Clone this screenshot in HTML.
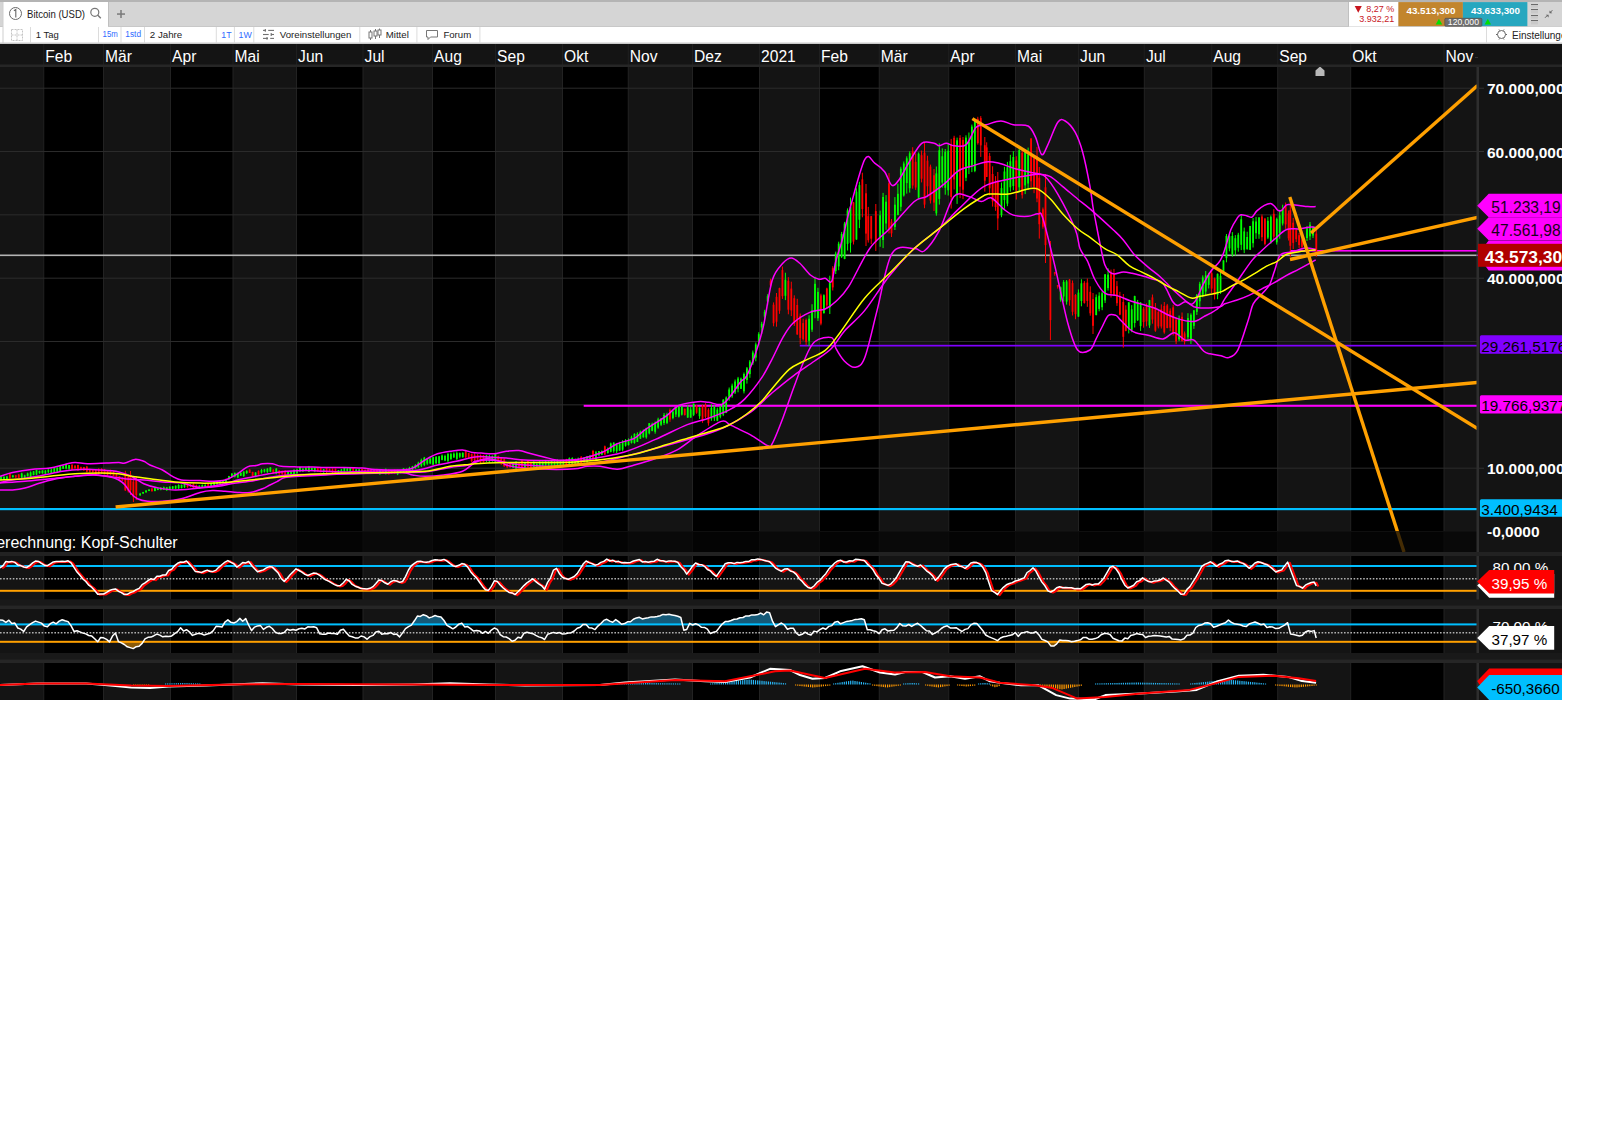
<!DOCTYPE html>
<html><head><meta charset="utf-8"><style>
html,body{margin:0;padding:0;background:#fff;width:1600px;height:1131px;overflow:hidden;position:relative;font-family:"Liberation Sans",sans-serif}
</style></head><body>
<svg width="1600" height="1131" viewBox="0 0 1600 1131" style="position:absolute;left:0;top:0"><rect x="0" y="0" width="1562" height="44" fill="#ffffff"/><rect x="0" y="0" width="1562" height="26" fill="#d5d5d5"/><rect x="0" y="0" width="1562" height="2" fill="#b4b4b4"/><rect x="3" y="2" width="105" height="25" fill="#ffffff"/><rect x="108" y="2" width="1" height="24" fill="#c0c0c0"/><rect x="0" y="26" width="1562" height="1" fill="#c8c8c8"/><rect x="3" y="2" width="105" height="25" fill="#ffffff"/><rect x="2.5" y="2" width="1" height="41" fill="#cfcfcf"/><circle cx="15.5" cy="13.5" r="6" fill="none" stroke="#6a6a6a" stroke-width="1"/><path d="M13.9 10.8 L15.8 9.6 L15.8 17.6" fill="none" stroke="#666" stroke-width="1.1"/><text x="27" y="17.6" fill="#1a1a1a" font-size="10.6" textLength="58" lengthAdjust="spacingAndGlyphs" font-family="Liberation Sans">Bitcoin (USD)</text><circle cx="94.8" cy="12.3" r="4" fill="none" stroke="#777" stroke-width="1.2"/><line x1="97.6" y1="15.1" x2="100.8" y2="18.3" stroke="#777" stroke-width="1.4"/><rect x="117" y="13.3" width="8" height="1.5" fill="#7a7a7a"/><rect x="120.25" y="10" width="1.5" height="8" fill="#7a7a7a"/><rect x="0" y="42.5" width="1562" height="1.5" fill="#c9c9c9"/><rect x="30.0" y="27" width="1" height="16" fill="#dcdcdc"/><rect x="98.0" y="27" width="1" height="16" fill="#dcdcdc"/><rect x="120.5" y="27" width="1" height="16" fill="#dcdcdc"/><rect x="144.0" y="27" width="1" height="16" fill="#dcdcdc"/><rect x="215.8" y="27" width="1" height="16" fill="#dcdcdc"/><rect x="233.9" y="27" width="1" height="16" fill="#dcdcdc"/><rect x="253.3" y="27" width="1" height="16" fill="#dcdcdc"/><rect x="359.3" y="27" width="1" height="16" fill="#dcdcdc"/><rect x="416.4" y="27" width="1" height="16" fill="#dcdcdc"/><rect x="479.4" y="27" width="1" height="16" fill="#dcdcdc"/><rect x="1486.0" y="27" width="1" height="16" fill="#dcdcdc"/><g fill="none" stroke="#c4c4c4" stroke-width="1" stroke-dasharray="2 1"><rect x="11.5" y="29.5" width="11" height="11"/><line x1="17" y1="29.5" x2="17" y2="40.5"/><line x1="11.5" y1="35" x2="22.5" y2="35"/></g><text x="35.8" y="37.9" fill="#222" font-size="9.4" textLength="23" lengthAdjust="spacingAndGlyphs" font-family="Liberation Sans">1 Tag</text><text x="102.6" y="37.3" fill="#2f6bff" font-size="8.5" textLength="15.2" lengthAdjust="spacingAndGlyphs" font-family="Liberation Sans">15m</text><text x="125.3" y="37.3" fill="#2f6bff" font-size="8.5" textLength="15.8" lengthAdjust="spacingAndGlyphs" font-family="Liberation Sans">1std</text><text x="149.8" y="37.9" fill="#222" font-size="9.4" textLength="32.5" lengthAdjust="spacingAndGlyphs" font-family="Liberation Sans">2 Jahre</text><text x="221.3" y="37.5" fill="#2f6bff" font-size="8.8" font-family="Liberation Sans">1T</text><text x="238.6" y="37.5" fill="#2f6bff" font-size="8.8" font-family="Liberation Sans">1W</text><g stroke="#707070" stroke-width="1.1"><line x1="263" y1="30.4" x2="265.8" y2="30.4"/><line x1="265.3" y1="29.1" x2="265.3" y2="31.8"/><line x1="268.2" y1="30.4" x2="274" y2="30.4"/><line x1="263" y1="34.5" x2="268.7" y2="34.5"/><line x1="271.2" y1="33" x2="271.2" y2="36"/><line x1="271" y1="34.5" x2="274" y2="34.5"/><line x1="263" y1="38.4" x2="268" y2="38.4"/><line x1="267" y1="37" x2="267" y2="39.7"/><line x1="270.2" y1="38.4" x2="274" y2="38.4"/></g><text x="279.8" y="37.9" fill="#222" font-size="9.4" textLength="71.5" lengthAdjust="spacingAndGlyphs" font-family="Liberation Sans">Voreinstellungen</text><g stroke="#777" stroke-width="1" fill="#fff"><line x1="370.5" y1="30" x2="370.5" y2="40"/><rect x="369" y="32" width="3" height="6"/><line x1="375.5" y1="29" x2="375.5" y2="39"/><rect x="374" y="31" width="3" height="5"/><line x1="379.5" y1="28.5" x2="379.5" y2="38"/><rect x="378" y="30" width="3" height="5"/></g><text x="385.8" y="37.9" fill="#222" font-size="9.4" textLength="23" lengthAdjust="spacingAndGlyphs" font-family="Liberation Sans">Mittel</text><path d="M426.5 30.5 h11 v6.5 h-7 l-2.5 2.5 v-2.5 h-1.5 z" fill="none" stroke="#777" stroke-width="1"/><text x="443.4" y="37.9" fill="#222" font-size="9.4" textLength="27.8" lengthAdjust="spacingAndGlyphs" font-family="Liberation Sans">Forum</text><rect x="1348.7" y="2" width="49.7" height="24.5" fill="#ffffff"/><rect x="1348" y="2" width="0.8" height="24.5" fill="#b8b8b8"/><path d="M1354.7 6.1 L1361.8 6.1 L1358.25 12.8 Z" fill="#c8161e"/><text x="1394.2" y="11.8" fill="#c8161e" font-size="9" text-anchor="end" font-family="Liberation Sans">8,27 %</text><text x="1394.2" y="21.6" fill="#c8161e" font-size="9" text-anchor="end" font-family="Liberation Sans">3.932,21</text><rect x="1398.4" y="2.1" width="64.5" height="24" fill="#c2852d"/><rect x="1462.9" y="2.1" width="64.7" height="24" fill="#27a7bf"/><rect x="1527.6" y="2" width="34.4" height="24.5" fill="#d5d5d5"/><text x="1431" y="14" fill="#fff" font-size="9.8" font-weight="bold" text-anchor="middle" font-family="Liberation Sans">43.513,300</text><text x="1495.5" y="14" fill="#fff" font-size="9.8" font-weight="bold" text-anchor="middle" font-family="Liberation Sans">43.633,300</text><path d="M1435.7 24.5 L1442.2 24.5 L1438.95 18.8 Z" fill="#00e000"/><path d="M1484.6 24.5 L1491 24.5 L1487.8 18.8 Z" fill="#00e000"/><rect x="1444.8" y="18.3" width="37.1" height="8" rx="1" fill="#6f6f6f" stroke="#4a4a4a" stroke-width="0.6"/><text x="1463.4" y="25.2" fill="#fff" font-size="8.6" text-anchor="middle" font-family="Liberation Sans">120,000</text><g fill="#6a6a6a"><rect x="1531" y="4" width="7" height="1.1"/><rect x="1531" y="9" width="7" height="1.1"/><rect x="1531" y="15" width="7" height="1.1"/><rect x="1531" y="20" width="7" height="1.1"/></g><g fill="#c9c9c9"><rect x="1531" y="6" width="7" height="1.6"/><rect x="1531" y="11" width="7" height="2.4"/><rect x="1531" y="17" width="7" height="1.6"/><rect x="1531" y="22" width="7" height="2.4"/></g><g stroke="#666" stroke-width="1"><line x1="1545" y1="17.8" x2="1547.2" y2="15.6"/><line x1="1550.3" y1="12.4" x2="1552.4" y2="10.2"/></g><path d="M1545.8 14.8 L1548.6 14.8 L1548.6 17.6 Z" fill="#666"/><path d="M1549.5 10.5 L1549.5 13.3 L1552.3 13.3 Z" fill="#666"/><circle cx="1501.5" cy="34.5" r="4" fill="none" stroke="#666" stroke-width="1"/><g stroke="#666" stroke-width="1"><line x1="1496" y1="34.5" x2="1497.5" y2="34.5"/><line x1="1505.5" y1="34.5" x2="1507" y2="34.5"/><line x1="1499" y1="29.5" x2="1499.5" y2="30.5"/><line x1="1504" y1="29.5" x2="1503.5" y2="30.5"/><line x1="1499" y1="39.5" x2="1499.5" y2="38.5"/><line x1="1504" y1="39.5" x2="1503.5" y2="38.5"/></g><text x="1512" y="38.5" fill="#222" font-size="10" font-family="Liberation Sans">Einstellungen</text><rect x="1562" y="0" width="38" height="44" fill="#fff"/><rect x="0" y="44" width="1562" height="656" fill="#141414"/><rect x="43.25" y="44" width="1" height="21" fill="#1f1f1f"/><rect x="103.0" y="44" width="1" height="21" fill="#1f1f1f"/><rect x="170.0" y="44" width="1" height="21" fill="#1f1f1f"/><rect x="232.5" y="44" width="1" height="21" fill="#1f1f1f"/><rect x="296.0" y="44" width="1" height="21" fill="#1f1f1f"/><rect x="362.5" y="44" width="1" height="21" fill="#1f1f1f"/><rect x="432.0" y="44" width="1" height="21" fill="#1f1f1f"/><rect x="495.0" y="44" width="1" height="21" fill="#1f1f1f"/><rect x="562.0" y="44" width="1" height="21" fill="#1f1f1f"/><rect x="627.75" y="44" width="1" height="21" fill="#1f1f1f"/><rect x="692.0" y="44" width="1" height="21" fill="#1f1f1f"/><rect x="759.0" y="44" width="1" height="21" fill="#1f1f1f"/><rect x="819.0" y="44" width="1" height="21" fill="#1f1f1f"/><rect x="878.75" y="44" width="1" height="21" fill="#1f1f1f"/><rect x="948.25" y="44" width="1" height="21" fill="#1f1f1f"/><rect x="1015.0" y="44" width="1" height="21" fill="#1f1f1f"/><rect x="1078.0" y="44" width="1" height="21" fill="#1f1f1f"/><rect x="1143.8" y="44" width="1" height="21" fill="#1f1f1f"/><rect x="1211.2" y="44" width="1" height="21" fill="#1f1f1f"/><rect x="1277.2" y="44" width="1" height="21" fill="#1f1f1f"/><rect x="1350.2" y="44" width="1" height="21" fill="#1f1f1f"/><rect x="1443.5" y="44" width="1" height="21" fill="#1f1f1f"/><rect x="0" y="64.5" width="1562" height="2.5" fill="#262626"/><rect x="1475" y="57" width="3" height="1" fill="#333"/><rect x="0" y="67" width="43.75" height="485" fill="#141414"/><rect x="43.75" y="67" width="59.75" height="485" fill="#000000"/><rect x="103.5" y="67" width="67.0" height="485" fill="#141414"/><rect x="170.5" y="67" width="62.5" height="485" fill="#000000"/><rect x="233" y="67" width="63.5" height="485" fill="#141414"/><rect x="296.5" y="67" width="66.5" height="485" fill="#000000"/><rect x="363" y="67" width="69.5" height="485" fill="#141414"/><rect x="432.5" y="67" width="63.0" height="485" fill="#000000"/><rect x="495.5" y="67" width="67.0" height="485" fill="#141414"/><rect x="562.5" y="67" width="65.75" height="485" fill="#000000"/><rect x="628.25" y="67" width="64.25" height="485" fill="#141414"/><rect x="692.5" y="67" width="67.0" height="485" fill="#000000"/><rect x="759.5" y="67" width="60.0" height="485" fill="#141414"/><rect x="819.5" y="67" width="59.75" height="485" fill="#000000"/><rect x="879.25" y="67" width="69.5" height="485" fill="#141414"/><rect x="948.75" y="67" width="66.75" height="485" fill="#000000"/><rect x="1015.5" y="67" width="63.0" height="485" fill="#141414"/><rect x="1078.5" y="67" width="65.79999999999995" height="485" fill="#000000"/><rect x="1144.3" y="67" width="67.40000000000009" height="485" fill="#141414"/><rect x="1211.7" y="67" width="66.0" height="485" fill="#000000"/><rect x="1277.7" y="67" width="73.0" height="485" fill="#141414"/><rect x="1350.7" y="67" width="93.29999999999995" height="485" fill="#000000"/><rect x="1444" y="67" width="34" height="485" fill="#141414"/><rect x="43.25" y="67" width="1" height="485" fill="#222"/><rect x="103.0" y="67" width="1" height="485" fill="#222"/><rect x="170.0" y="67" width="1" height="485" fill="#222"/><rect x="232.5" y="67" width="1" height="485" fill="#222"/><rect x="296.0" y="67" width="1" height="485" fill="#222"/><rect x="362.5" y="67" width="1" height="485" fill="#222"/><rect x="432.0" y="67" width="1" height="485" fill="#222"/><rect x="495.0" y="67" width="1" height="485" fill="#222"/><rect x="562.0" y="67" width="1" height="485" fill="#222"/><rect x="627.75" y="67" width="1" height="485" fill="#222"/><rect x="692.0" y="67" width="1" height="485" fill="#222"/><rect x="759.0" y="67" width="1" height="485" fill="#222"/><rect x="819.0" y="67" width="1" height="485" fill="#222"/><rect x="878.75" y="67" width="1" height="485" fill="#222"/><rect x="948.25" y="67" width="1" height="485" fill="#222"/><rect x="1015.0" y="67" width="1" height="485" fill="#222"/><rect x="1078.0" y="67" width="1" height="485" fill="#222"/><rect x="1143.8" y="67" width="1" height="485" fill="#222"/><rect x="1211.2" y="67" width="1" height="485" fill="#222"/><rect x="1277.2" y="67" width="1" height="485" fill="#222"/><rect x="1350.2" y="67" width="1" height="485" fill="#222"/><rect x="1443.5" y="67" width="1" height="485" fill="#222"/><rect x="0" y="531.00" width="1478" height="1" fill="#2c2c2c"/><rect x="0" y="467.67" width="1478" height="1" fill="#2c2c2c"/><rect x="0" y="404.34" width="1478" height="1" fill="#2c2c2c"/><rect x="0" y="341.01" width="1478" height="1" fill="#2c2c2c"/><rect x="0" y="277.68" width="1478" height="1" fill="#2c2c2c"/><rect x="0" y="214.35" width="1478" height="1" fill="#2c2c2c"/><rect x="0" y="151.02" width="1478" height="1" fill="#2c2c2c"/><rect x="0" y="87.69" width="1478" height="1" fill="#2c2c2c"/><defs><clipPath id="cm"><rect x="0" y="67" width="1477" height="485"/></clipPath><clipPath id="p2t"><rect x="0" y="609" width="1477" height="15.4"/></clipPath><clipPath id="p2b"><rect x="0" y="642" width="1477" height="11"/></clipPath><clipPath id="p3"><rect x="0" y="663" width="1477" height="37"/></clipPath></defs><g clip-path="url(#cm)"><rect x="0" y="254.5" width="1478" height="1.6" fill="#b4b4b4"/><rect x="0" y="508" width="1478" height="2.2" fill="#00bfff"/><rect x="583.7" y="404.8" width="895" height="2" fill="#ff00ff"/><rect x="799.8" y="344.8" width="679" height="1.7" fill="#8000ff"/><rect x="1290" y="250" width="188" height="1.6" fill="#ff00ff"/><rect x="0.50" y="476.0" width="1" height="4.2" fill="#00ff00"/><rect x="0.10" y="476.4" width="1.8" height="3.3" fill="#00ff00"/><rect x="3.46" y="476.2" width="1" height="3.7" fill="#00ff00"/><rect x="3.06" y="476.8" width="1.8" height="2.4" fill="#00ff00"/><rect x="6.42" y="475.7" width="1" height="4.1" fill="#00ff00"/><rect x="6.02" y="476.5" width="1.8" height="2.7" fill="#00ff00"/><rect x="9.38" y="473.1" width="1" height="5.7" fill="#ff0000"/><rect x="8.98" y="473.8" width="1.8" height="4.5" fill="#ff0000"/><rect x="12.34" y="475.2" width="1" height="2.2" fill="#00ff00"/><rect x="11.94" y="475.3" width="1.8" height="2.0" fill="#00ff00"/><rect x="15.30" y="474.9" width="1" height="3.3" fill="#ff0000"/><rect x="14.90" y="475.3" width="1.8" height="2.0" fill="#ff0000"/><rect x="18.26" y="474.0" width="1" height="4.0" fill="#ff0000"/><rect x="17.86" y="474.5" width="1.8" height="3.3" fill="#ff0000"/><rect x="21.22" y="472.7" width="1" height="5.5" fill="#00ff00"/><rect x="20.82" y="473.4" width="1.8" height="4.5" fill="#00ff00"/><rect x="24.18" y="474.7" width="1" height="3.8" fill="#00ff00"/><rect x="23.78" y="475.4" width="1.8" height="2.7" fill="#00ff00"/><rect x="27.14" y="472.6" width="1" height="3.8" fill="#00ff00"/><rect x="26.74" y="473.4" width="1.8" height="3.0" fill="#00ff00"/><rect x="30.10" y="471.4" width="1" height="5.8" fill="#00ff00"/><rect x="29.70" y="472.4" width="1.8" height="4.5" fill="#00ff00"/><rect x="33.06" y="471.1" width="1" height="4.1" fill="#00ff00"/><rect x="32.66" y="471.4" width="1.8" height="3.8" fill="#00ff00"/><rect x="36.02" y="469.8" width="1" height="5.1" fill="#00ff00"/><rect x="35.62" y="469.9" width="1.8" height="4.7" fill="#00ff00"/><rect x="38.98" y="470.7" width="1" height="3.0" fill="#00ff00"/><rect x="38.58" y="470.9" width="1.8" height="2.3" fill="#00ff00"/><rect x="41.94" y="470.3" width="1" height="3.5" fill="#00ff00"/><rect x="41.54" y="470.5" width="1.8" height="2.6" fill="#00ff00"/><rect x="44.90" y="470.2" width="1" height="4.6" fill="#00ff00"/><rect x="44.50" y="470.5" width="1.8" height="3.3" fill="#00ff00"/><rect x="47.86" y="469.3" width="1" height="3.6" fill="#00ff00"/><rect x="47.46" y="469.5" width="1.8" height="3.0" fill="#00ff00"/><rect x="50.82" y="468.5" width="1" height="5.3" fill="#00ff00"/><rect x="50.42" y="469.6" width="1.8" height="4.0" fill="#00ff00"/><rect x="53.78" y="467.9" width="1" height="4.8" fill="#00ff00"/><rect x="53.38" y="468.3" width="1.8" height="4.4" fill="#00ff00"/><rect x="56.74" y="467.2" width="1" height="5.0" fill="#00ff00"/><rect x="56.34" y="467.8" width="1.8" height="3.9" fill="#00ff00"/><rect x="59.70" y="465.4" width="1" height="6.7" fill="#00ff00"/><rect x="59.30" y="466.1" width="1.8" height="5.1" fill="#00ff00"/><rect x="62.66" y="465.1" width="1" height="3.9" fill="#00ff00"/><rect x="62.26" y="466.0" width="1.8" height="2.7" fill="#00ff00"/><rect x="65.62" y="463.7" width="1" height="5.8" fill="#00ff00"/><rect x="65.22" y="463.9" width="1.8" height="4.5" fill="#00ff00"/><rect x="68.58" y="465.1" width="1" height="4.8" fill="#00ff00"/><rect x="68.18" y="465.1" width="1.8" height="3.6" fill="#00ff00"/><rect x="71.54" y="464.0" width="1" height="6.1" fill="#ff0000"/><rect x="71.14" y="465.0" width="1.8" height="4.4" fill="#ff0000"/><rect x="74.50" y="465.5" width="1" height="3.1" fill="#ff0000"/><rect x="74.10" y="465.5" width="1.8" height="2.8" fill="#ff0000"/><rect x="77.46" y="464.7" width="1" height="6.2" fill="#ff0000"/><rect x="77.06" y="465.0" width="1.8" height="4.8" fill="#ff0000"/><rect x="80.42" y="466.6" width="1" height="2.9" fill="#ff0000"/><rect x="80.02" y="467.1" width="1.8" height="2.3" fill="#ff0000"/><rect x="83.38" y="466.9" width="1" height="3.9" fill="#ff0000"/><rect x="82.98" y="467.0" width="1.8" height="3.3" fill="#ff0000"/><rect x="86.34" y="465.9" width="1" height="6.5" fill="#ff0000"/><rect x="85.94" y="466.7" width="1.8" height="5.1" fill="#ff0000"/><rect x="89.30" y="468.6" width="1" height="4.0" fill="#ff0000"/><rect x="88.90" y="469.6" width="1.8" height="2.3" fill="#ff0000"/><rect x="92.26" y="469.3" width="1" height="3.5" fill="#ff0000"/><rect x="91.86" y="469.8" width="1.8" height="2.2" fill="#ff0000"/><rect x="95.22" y="469.2" width="1" height="6.3" fill="#ff0000"/><rect x="94.82" y="469.8" width="1.8" height="5.0" fill="#ff0000"/><rect x="98.18" y="468.3" width="1" height="6.0" fill="#ff0000"/><rect x="97.78" y="469.2" width="1.8" height="4.2" fill="#ff0000"/><rect x="101.14" y="468.2" width="1" height="5.4" fill="#ff0000"/><rect x="100.74" y="469.1" width="1.8" height="4.0" fill="#ff0000"/><rect x="104.10" y="468.9" width="1" height="5.6" fill="#ff0000"/><rect x="103.70" y="469.6" width="1.8" height="4.5" fill="#ff0000"/><rect x="107.06" y="470.2" width="1" height="5.5" fill="#ff0000"/><rect x="106.66" y="470.9" width="1.8" height="3.8" fill="#ff0000"/><rect x="110.02" y="469.7" width="1" height="5.5" fill="#ff0000"/><rect x="109.62" y="470.5" width="1.8" height="4.1" fill="#ff0000"/><rect x="112.98" y="471.0" width="1" height="5.2" fill="#ff0000"/><rect x="112.58" y="471.8" width="1.8" height="4.4" fill="#ff0000"/><rect x="115.94" y="473.7" width="1" height="4.4" fill="#ff0000"/><rect x="115.54" y="474.4" width="1.8" height="3.2" fill="#ff0000"/><rect x="118.90" y="476.0" width="1" height="4.5" fill="#ff0000"/><rect x="118.50" y="476.0" width="1.8" height="4.2" fill="#ff0000"/><rect x="121.86" y="477.2" width="1" height="3.8" fill="#ff0000"/><rect x="121.46" y="478.1" width="1.8" height="2.4" fill="#ff0000"/><rect x="124.82" y="470.8" width="1" height="20.2" fill="#ff0000"/><rect x="124.42" y="473.4" width="1.8" height="16.9" fill="#ff0000"/><rect x="127.78" y="474.2" width="1" height="18.4" fill="#ff0000"/><rect x="127.38" y="477.2" width="1.8" height="14.1" fill="#ff0000"/><rect x="139.62" y="492.9" width="1" height="2.8" fill="#00ff00"/><rect x="139.22" y="493.6" width="1.8" height="1.8" fill="#00ff00"/><rect x="142.58" y="491.9" width="1" height="2.0" fill="#00ff00"/><rect x="142.18" y="492.0" width="1.8" height="1.5" fill="#00ff00"/><rect x="145.54" y="490.4" width="1" height="2.1" fill="#00ff00"/><rect x="145.14" y="490.4" width="1.8" height="2.0" fill="#00ff00"/><rect x="148.50" y="489.3" width="1" height="1.8" fill="#00ff00"/><rect x="148.10" y="489.5" width="1.8" height="1.5" fill="#00ff00"/><rect x="151.46" y="488.1" width="1" height="3.6" fill="#ff0000"/><rect x="151.06" y="488.5" width="1.8" height="2.7" fill="#ff0000"/><rect x="154.42" y="487.4" width="1" height="3.9" fill="#00ff00"/><rect x="154.02" y="487.6" width="1.8" height="3.4" fill="#00ff00"/><rect x="157.38" y="488.0" width="1" height="2.2" fill="#00ff00"/><rect x="156.98" y="488.5" width="1.8" height="1.5" fill="#00ff00"/><rect x="160.34" y="487.3" width="1" height="3.0" fill="#00ff00"/><rect x="159.94" y="487.7" width="1.8" height="2.2" fill="#00ff00"/><rect x="163.30" y="486.6" width="1" height="3.1" fill="#00ff00"/><rect x="162.90" y="487.2" width="1.8" height="2.3" fill="#00ff00"/><rect x="166.26" y="487.0" width="1" height="3.8" fill="#00ff00"/><rect x="165.86" y="487.3" width="1.8" height="3.0" fill="#00ff00"/><rect x="169.22" y="486.2" width="1" height="3.6" fill="#00ff00"/><rect x="168.82" y="486.8" width="1.8" height="2.3" fill="#00ff00"/><rect x="172.18" y="486.2" width="1" height="3.2" fill="#00ff00"/><rect x="171.78" y="486.3" width="1.8" height="2.5" fill="#00ff00"/><rect x="175.14" y="485.5" width="1" height="3.8" fill="#00ff00"/><rect x="174.74" y="485.7" width="1.8" height="2.9" fill="#00ff00"/><rect x="178.10" y="484.3" width="1" height="4.5" fill="#00ff00"/><rect x="177.70" y="484.9" width="1.8" height="3.6" fill="#00ff00"/><rect x="181.06" y="484.6" width="1" height="3.8" fill="#00ff00"/><rect x="180.66" y="484.7" width="1.8" height="3.4" fill="#00ff00"/><rect x="184.02" y="483.9" width="1" height="4.0" fill="#00ff00"/><rect x="183.62" y="484.0" width="1.8" height="3.3" fill="#00ff00"/><rect x="186.98" y="483.5" width="1" height="4.3" fill="#ff0000"/><rect x="186.58" y="483.8" width="1.8" height="3.4" fill="#ff0000"/><rect x="189.94" y="483.9" width="1" height="3.2" fill="#ff0000"/><rect x="189.54" y="484.5" width="1.8" height="1.9" fill="#ff0000"/><rect x="192.90" y="483.3" width="1" height="4.5" fill="#ff0000"/><rect x="192.50" y="484.1" width="1.8" height="3.6" fill="#ff0000"/><rect x="195.86" y="484.6" width="1" height="3.8" fill="#ff0000"/><rect x="195.46" y="485.2" width="1.8" height="2.7" fill="#ff0000"/><rect x="198.82" y="485.3" width="1" height="3.7" fill="#00ff00"/><rect x="198.42" y="485.6" width="1.8" height="2.8" fill="#00ff00"/><rect x="201.78" y="484.4" width="1" height="3.2" fill="#00ff00"/><rect x="201.38" y="485.1" width="1.8" height="2.0" fill="#00ff00"/><rect x="204.74" y="484.4" width="1" height="2.9" fill="#00ff00"/><rect x="204.34" y="484.8" width="1.8" height="2.0" fill="#00ff00"/><rect x="207.70" y="483.0" width="1" height="4.7" fill="#ff0000"/><rect x="207.30" y="483.4" width="1.8" height="3.7" fill="#ff0000"/><rect x="210.66" y="483.0" width="1" height="3.2" fill="#00ff00"/><rect x="210.26" y="483.1" width="1.8" height="2.7" fill="#00ff00"/><rect x="213.62" y="481.2" width="1" height="4.4" fill="#00ff00"/><rect x="213.22" y="481.4" width="1.8" height="3.8" fill="#00ff00"/><rect x="216.58" y="480.8" width="1" height="3.9" fill="#00ff00"/><rect x="216.18" y="481.6" width="1.8" height="2.7" fill="#00ff00"/><rect x="219.54" y="480.5" width="1" height="3.1" fill="#00ff00"/><rect x="219.14" y="481.3" width="1.8" height="2.2" fill="#00ff00"/><rect x="222.50" y="480.9" width="1" height="2.6" fill="#00ff00"/><rect x="222.10" y="481.1" width="1.8" height="1.8" fill="#00ff00"/><rect x="225.46" y="478.8" width="1" height="3.4" fill="#00ff00"/><rect x="225.06" y="478.9" width="1.8" height="2.7" fill="#00ff00"/><rect x="228.42" y="475.9" width="1" height="3.9" fill="#00ff00"/><rect x="228.02" y="476.1" width="1.8" height="3.2" fill="#00ff00"/><rect x="231.38" y="473.1" width="1" height="3.7" fill="#00ff00"/><rect x="230.98" y="473.6" width="1.8" height="3.0" fill="#00ff00"/><rect x="234.34" y="472.4" width="1" height="5.1" fill="#00ff00"/><rect x="233.94" y="473.0" width="1.8" height="3.7" fill="#00ff00"/><rect x="237.30" y="472.5" width="1" height="5.8" fill="#00ff00"/><rect x="236.90" y="473.2" width="1.8" height="4.3" fill="#00ff00"/><rect x="240.26" y="471.9" width="1" height="4.1" fill="#00ff00"/><rect x="239.86" y="472.8" width="1.8" height="2.9" fill="#00ff00"/><rect x="243.22" y="471.3" width="1" height="5.5" fill="#00ff00"/><rect x="242.82" y="471.6" width="1.8" height="4.5" fill="#00ff00"/><rect x="246.18" y="470.3" width="1" height="3.6" fill="#00ff00"/><rect x="245.78" y="470.8" width="1.8" height="2.4" fill="#00ff00"/><rect x="249.14" y="469.5" width="1" height="3.5" fill="#ff0000"/><rect x="248.74" y="469.5" width="1.8" height="3.3" fill="#ff0000"/><rect x="252.10" y="471.8" width="1" height="5.1" fill="#ff0000"/><rect x="251.70" y="471.9" width="1.8" height="4.4" fill="#ff0000"/><rect x="255.06" y="472.3" width="1" height="4.1" fill="#00ff00"/><rect x="254.66" y="472.4" width="1.8" height="3.9" fill="#00ff00"/><rect x="258.02" y="470.4" width="1" height="4.4" fill="#ff0000"/><rect x="257.62" y="470.9" width="1.8" height="3.6" fill="#ff0000"/><rect x="260.98" y="468.9" width="1" height="4.7" fill="#00ff00"/><rect x="260.58" y="470.0" width="1.8" height="2.7" fill="#00ff00"/><rect x="263.94" y="468.9" width="1" height="3.6" fill="#00ff00"/><rect x="263.54" y="469.4" width="1.8" height="2.3" fill="#00ff00"/><rect x="266.90" y="468.2" width="1" height="4.6" fill="#00ff00"/><rect x="266.50" y="468.7" width="1.8" height="3.5" fill="#00ff00"/><rect x="269.86" y="467.2" width="1" height="4.9" fill="#00ff00"/><rect x="269.46" y="467.4" width="1.8" height="4.2" fill="#00ff00"/><rect x="272.82" y="469.4" width="1" height="4.0" fill="#ff0000"/><rect x="272.42" y="469.6" width="1.8" height="3.3" fill="#ff0000"/><rect x="275.78" y="468.0" width="1" height="6.3" fill="#00ff00"/><rect x="275.38" y="468.7" width="1.8" height="4.6" fill="#00ff00"/><rect x="278.74" y="470.1" width="1" height="4.8" fill="#ff0000"/><rect x="278.34" y="470.6" width="1.8" height="3.2" fill="#ff0000"/><rect x="281.70" y="470.5" width="1" height="4.4" fill="#ff0000"/><rect x="281.30" y="471.2" width="1.8" height="2.8" fill="#ff0000"/><rect x="284.66" y="470.1" width="1" height="6.0" fill="#ff0000"/><rect x="284.26" y="470.9" width="1.8" height="4.5" fill="#ff0000"/><rect x="287.62" y="471.4" width="1" height="3.6" fill="#00ff00"/><rect x="287.22" y="471.5" width="1.8" height="3.2" fill="#00ff00"/><rect x="290.58" y="471.3" width="1" height="3.4" fill="#00ff00"/><rect x="290.18" y="472.0" width="1.8" height="2.1" fill="#00ff00"/><rect x="293.54" y="469.4" width="1" height="5.8" fill="#00ff00"/><rect x="293.14" y="469.7" width="1.8" height="4.7" fill="#00ff00"/><rect x="296.50" y="468.5" width="1" height="5.4" fill="#00ff00"/><rect x="296.10" y="469.5" width="1.8" height="3.7" fill="#00ff00"/><rect x="299.46" y="467.0" width="1" height="5.1" fill="#00ff00"/><rect x="299.06" y="467.0" width="1.8" height="4.4" fill="#00ff00"/><rect x="302.42" y="468.5" width="1" height="3.2" fill="#00ff00"/><rect x="302.02" y="468.5" width="1.8" height="2.9" fill="#00ff00"/><rect x="305.38" y="467.2" width="1" height="4.1" fill="#00ff00"/><rect x="304.98" y="467.8" width="1.8" height="2.9" fill="#00ff00"/><rect x="308.34" y="465.9" width="1" height="6.1" fill="#00ff00"/><rect x="307.94" y="466.7" width="1.8" height="5.1" fill="#00ff00"/><rect x="311.30" y="467.7" width="1" height="3.0" fill="#00ff00"/><rect x="310.90" y="467.9" width="1.8" height="2.3" fill="#00ff00"/><rect x="314.26" y="467.5" width="1" height="4.7" fill="#00ff00"/><rect x="313.86" y="467.6" width="1.8" height="3.6" fill="#00ff00"/><rect x="317.22" y="467.3" width="1" height="4.4" fill="#ff0000"/><rect x="316.82" y="467.7" width="1.8" height="3.7" fill="#ff0000"/><rect x="320.18" y="467.5" width="1" height="4.9" fill="#ff0000"/><rect x="319.78" y="468.3" width="1.8" height="3.8" fill="#ff0000"/><rect x="323.14" y="469.0" width="1" height="3.9" fill="#00ff00"/><rect x="322.74" y="469.2" width="1.8" height="2.9" fill="#00ff00"/><rect x="326.10" y="467.5" width="1" height="5.9" fill="#ff0000"/><rect x="325.70" y="467.5" width="1.8" height="4.8" fill="#ff0000"/><rect x="329.06" y="468.6" width="1" height="3.3" fill="#ff0000"/><rect x="328.66" y="469.0" width="1.8" height="2.4" fill="#ff0000"/><rect x="332.02" y="468.4" width="1" height="4.6" fill="#ff0000"/><rect x="331.62" y="469.4" width="1.8" height="2.8" fill="#ff0000"/><rect x="334.98" y="468.6" width="1" height="5.3" fill="#ff0000"/><rect x="334.58" y="468.7" width="1.8" height="4.5" fill="#ff0000"/><rect x="337.94" y="469.9" width="1" height="2.9" fill="#00ff00"/><rect x="337.54" y="470.0" width="1.8" height="2.3" fill="#00ff00"/><rect x="340.90" y="468.9" width="1" height="4.5" fill="#00ff00"/><rect x="340.50" y="469.5" width="1.8" height="3.4" fill="#00ff00"/><rect x="343.86" y="467.0" width="1" height="5.5" fill="#00ff00"/><rect x="343.46" y="468.0" width="1.8" height="3.7" fill="#00ff00"/><rect x="346.82" y="467.8" width="1" height="4.0" fill="#00ff00"/><rect x="346.42" y="468.6" width="1.8" height="2.5" fill="#00ff00"/><rect x="349.78" y="467.2" width="1" height="5.5" fill="#00ff00"/><rect x="349.38" y="467.8" width="1.8" height="4.2" fill="#00ff00"/><rect x="352.74" y="467.2" width="1" height="4.8" fill="#ff0000"/><rect x="352.34" y="468.2" width="1.8" height="2.9" fill="#ff0000"/><rect x="355.70" y="468.9" width="1" height="3.5" fill="#00ff00"/><rect x="355.30" y="469.4" width="1.8" height="2.3" fill="#00ff00"/><rect x="358.66" y="469.2" width="1" height="4.5" fill="#00ff00"/><rect x="358.26" y="469.3" width="1.8" height="3.7" fill="#00ff00"/><rect x="361.62" y="468.8" width="1" height="3.8" fill="#ff0000"/><rect x="361.22" y="469.0" width="1.8" height="3.2" fill="#ff0000"/><rect x="364.58" y="469.1" width="1" height="3.9" fill="#ff0000"/><rect x="364.18" y="470.0" width="1.8" height="2.4" fill="#ff0000"/><rect x="367.54" y="468.7" width="1" height="4.6" fill="#ff0000"/><rect x="367.14" y="469.6" width="1.8" height="3.4" fill="#ff0000"/><rect x="370.50" y="468.7" width="1" height="4.8" fill="#ff0000"/><rect x="370.10" y="469.5" width="1.8" height="3.1" fill="#ff0000"/><rect x="373.46" y="469.6" width="1" height="2.6" fill="#ff0000"/><rect x="373.06" y="469.7" width="1.8" height="2.4" fill="#ff0000"/><rect x="376.42" y="468.8" width="1" height="5.0" fill="#ff0000"/><rect x="376.02" y="469.6" width="1.8" height="4.1" fill="#ff0000"/><rect x="379.38" y="469.8" width="1" height="5.1" fill="#00ff00"/><rect x="378.98" y="470.1" width="1.8" height="4.0" fill="#00ff00"/><rect x="382.34" y="469.6" width="1" height="3.7" fill="#ff0000"/><rect x="381.94" y="470.4" width="1.8" height="2.5" fill="#ff0000"/><rect x="385.30" y="468.4" width="1" height="6.1" fill="#00ff00"/><rect x="384.90" y="469.4" width="1.8" height="4.1" fill="#00ff00"/><rect x="388.26" y="469.4" width="1" height="5.1" fill="#ff0000"/><rect x="387.86" y="469.8" width="1.8" height="4.4" fill="#ff0000"/><rect x="391.22" y="470.1" width="1" height="3.6" fill="#ff0000"/><rect x="390.82" y="470.4" width="1.8" height="2.8" fill="#ff0000"/><rect x="394.18" y="469.5" width="1" height="4.1" fill="#ff0000"/><rect x="393.78" y="470.4" width="1.8" height="2.7" fill="#ff0000"/><rect x="397.14" y="469.7" width="1" height="5.4" fill="#00ff00"/><rect x="396.74" y="470.5" width="1.8" height="3.7" fill="#00ff00"/><rect x="400.10" y="470.0" width="1" height="3.4" fill="#00ff00"/><rect x="399.70" y="470.6" width="1.8" height="2.2" fill="#00ff00"/><rect x="403.06" y="468.3" width="1" height="4.7" fill="#00ff00"/><rect x="402.66" y="468.4" width="1.8" height="4.0" fill="#00ff00"/><rect x="406.02" y="468.4" width="1" height="4.2" fill="#00ff00"/><rect x="405.62" y="469.2" width="1.8" height="2.4" fill="#00ff00"/><rect x="408.98" y="466.8" width="1" height="5.6" fill="#00ff00"/><rect x="408.58" y="467.7" width="1.8" height="4.1" fill="#00ff00"/><rect x="411.94" y="465.9" width="1" height="4.3" fill="#00ff00"/><rect x="411.54" y="466.5" width="1.8" height="2.9" fill="#00ff00"/><rect x="414.90" y="464.2" width="1" height="4.6" fill="#00ff00"/><rect x="414.50" y="465.0" width="1.8" height="3.3" fill="#00ff00"/><rect x="417.86" y="461.7" width="1" height="6.1" fill="#00ff00"/><rect x="417.46" y="462.7" width="1.8" height="4.6" fill="#00ff00"/><rect x="420.82" y="458.6" width="1" height="8.4" fill="#00ff00"/><rect x="420.42" y="459.8" width="1.8" height="5.8" fill="#00ff00"/><rect x="423.78" y="456.9" width="1" height="9.2" fill="#00ff00"/><rect x="423.38" y="457.7" width="1.8" height="7.2" fill="#00ff00"/><rect x="426.74" y="458.3" width="1" height="6.5" fill="#00ff00"/><rect x="426.34" y="458.5" width="1.8" height="5.0" fill="#00ff00"/><rect x="429.70" y="458.1" width="1" height="5.9" fill="#00ff00"/><rect x="429.30" y="458.5" width="1.8" height="4.9" fill="#00ff00"/><rect x="432.66" y="456.7" width="1" height="8.2" fill="#00ff00"/><rect x="432.26" y="457.2" width="1.8" height="7.5" fill="#00ff00"/><rect x="435.62" y="456.5" width="1" height="7.6" fill="#00ff00"/><rect x="435.22" y="456.6" width="1.8" height="6.7" fill="#00ff00"/><rect x="438.58" y="456.1" width="1" height="7.8" fill="#00ff00"/><rect x="438.18" y="456.2" width="1.8" height="7.4" fill="#00ff00"/><rect x="441.54" y="454.5" width="1" height="5.8" fill="#00ff00"/><rect x="441.14" y="455.5" width="1.8" height="4.4" fill="#00ff00"/><rect x="444.50" y="454.7" width="1" height="6.4" fill="#00ff00"/><rect x="444.10" y="456.0" width="1.8" height="4.6" fill="#00ff00"/><rect x="447.46" y="453.3" width="1" height="9.0" fill="#00ff00"/><rect x="447.06" y="453.7" width="1.8" height="7.1" fill="#00ff00"/><rect x="450.42" y="452.5" width="1" height="7.4" fill="#00ff00"/><rect x="450.02" y="454.1" width="1.8" height="5.0" fill="#00ff00"/><rect x="453.38" y="452.3" width="1" height="5.7" fill="#00ff00"/><rect x="452.98" y="453.6" width="1.8" height="3.7" fill="#00ff00"/><rect x="456.34" y="451.4" width="1" height="8.7" fill="#00ff00"/><rect x="455.94" y="453.1" width="1.8" height="5.8" fill="#00ff00"/><rect x="459.30" y="452.6" width="1" height="5.6" fill="#00ff00"/><rect x="458.90" y="453.2" width="1.8" height="3.5" fill="#00ff00"/><rect x="462.26" y="452.3" width="1" height="5.3" fill="#00ff00"/><rect x="461.86" y="452.9" width="1.8" height="4.3" fill="#00ff00"/><rect x="465.22" y="449.8" width="1" height="8.1" fill="#ff0000"/><rect x="464.82" y="451.5" width="1.8" height="5.9" fill="#ff0000"/><rect x="468.18" y="452.9" width="1" height="5.6" fill="#ff0000"/><rect x="467.78" y="452.9" width="1.8" height="4.2" fill="#ff0000"/><rect x="471.14" y="453.5" width="1" height="8.9" fill="#ff0000"/><rect x="470.74" y="454.0" width="1.8" height="7.2" fill="#ff0000"/><rect x="474.10" y="453.0" width="1" height="8.1" fill="#ff0000"/><rect x="473.70" y="454.7" width="1.8" height="5.5" fill="#ff0000"/><rect x="477.06" y="454.2" width="1" height="7.0" fill="#ff0000"/><rect x="476.66" y="454.9" width="1.8" height="4.7" fill="#ff0000"/><rect x="480.02" y="454.5" width="1" height="8.8" fill="#ff0000"/><rect x="479.62" y="455.4" width="1.8" height="7.0" fill="#ff0000"/><rect x="482.98" y="454.9" width="1" height="7.7" fill="#ff0000"/><rect x="482.58" y="455.4" width="1.8" height="7.0" fill="#ff0000"/><rect x="485.94" y="454.9" width="1" height="7.1" fill="#00ff00"/><rect x="485.54" y="455.5" width="1.8" height="5.4" fill="#00ff00"/><rect x="488.90" y="454.7" width="1" height="8.0" fill="#00ff00"/><rect x="488.50" y="456.3" width="1.8" height="5.1" fill="#00ff00"/><rect x="491.86" y="455.5" width="1" height="6.3" fill="#00ff00"/><rect x="491.46" y="455.9" width="1.8" height="5.0" fill="#00ff00"/><rect x="494.82" y="453.7" width="1" height="9.1" fill="#00ff00"/><rect x="494.42" y="454.0" width="1.8" height="7.7" fill="#00ff00"/><rect x="497.78" y="455.7" width="1" height="6.0" fill="#ff0000"/><rect x="497.38" y="456.2" width="1.8" height="5.0" fill="#ff0000"/><rect x="500.74" y="457.2" width="1" height="7.7" fill="#ff0000"/><rect x="500.34" y="457.5" width="1.8" height="6.2" fill="#ff0000"/><rect x="503.70" y="458.1" width="1" height="8.7" fill="#ff0000"/><rect x="503.30" y="459.2" width="1.8" height="7.1" fill="#ff0000"/><rect x="506.66" y="463.6" width="1" height="4.6" fill="#ff0000"/><rect x="506.26" y="463.8" width="1.8" height="3.4" fill="#ff0000"/><rect x="509.62" y="462.0" width="1" height="5.9" fill="#ff0000"/><rect x="509.22" y="463.3" width="1.8" height="3.8" fill="#ff0000"/><rect x="512.58" y="463.4" width="1" height="4.7" fill="#00ff00"/><rect x="512.18" y="463.6" width="1.8" height="3.9" fill="#00ff00"/><rect x="515.54" y="461.0" width="1" height="8.5" fill="#00ff00"/><rect x="515.14" y="461.8" width="1.8" height="6.7" fill="#00ff00"/><rect x="518.50" y="462.4" width="1" height="5.2" fill="#ff0000"/><rect x="518.10" y="463.0" width="1.8" height="4.6" fill="#ff0000"/><rect x="521.46" y="459.7" width="1" height="8.9" fill="#ff0000"/><rect x="521.06" y="460.7" width="1.8" height="7.0" fill="#ff0000"/><rect x="524.42" y="462.1" width="1" height="5.5" fill="#00ff00"/><rect x="524.02" y="463.1" width="1.8" height="4.4" fill="#00ff00"/><rect x="527.38" y="460.2" width="1" height="7.4" fill="#ff0000"/><rect x="526.98" y="461.1" width="1.8" height="6.2" fill="#ff0000"/><rect x="530.34" y="461.9" width="1" height="6.2" fill="#ff0000"/><rect x="529.94" y="462.7" width="1.8" height="5.2" fill="#ff0000"/><rect x="533.30" y="460.7" width="1" height="6.7" fill="#00ff00"/><rect x="532.90" y="462.0" width="1.8" height="5.1" fill="#00ff00"/><rect x="536.26" y="463.4" width="1" height="5.1" fill="#00ff00"/><rect x="535.86" y="463.7" width="1.8" height="3.8" fill="#00ff00"/><rect x="539.22" y="461.1" width="1" height="7.7" fill="#00ff00"/><rect x="538.82" y="461.8" width="1.8" height="6.8" fill="#00ff00"/><rect x="542.18" y="461.3" width="1" height="5.3" fill="#00ff00"/><rect x="541.78" y="462.1" width="1.8" height="3.6" fill="#00ff00"/><rect x="545.14" y="459.9" width="1" height="6.9" fill="#00ff00"/><rect x="544.74" y="461.5" width="1.8" height="4.1" fill="#00ff00"/><rect x="548.10" y="461.2" width="1" height="5.4" fill="#00ff00"/><rect x="547.70" y="461.7" width="1.8" height="3.6" fill="#00ff00"/><rect x="551.06" y="459.9" width="1" height="6.6" fill="#00ff00"/><rect x="550.66" y="460.2" width="1.8" height="5.5" fill="#00ff00"/><rect x="554.02" y="460.6" width="1" height="6.2" fill="#00ff00"/><rect x="553.62" y="462.1" width="1.8" height="3.2" fill="#00ff00"/><rect x="556.98" y="459.4" width="1" height="6.1" fill="#00ff00"/><rect x="556.58" y="460.5" width="1.8" height="4.4" fill="#00ff00"/><rect x="559.94" y="460.4" width="1" height="7.5" fill="#00ff00"/><rect x="559.54" y="460.7" width="1.8" height="6.5" fill="#00ff00"/><rect x="562.90" y="459.7" width="1" height="5.9" fill="#00ff00"/><rect x="562.50" y="459.9" width="1.8" height="4.8" fill="#00ff00"/><rect x="565.86" y="458.8" width="1" height="6.6" fill="#ff0000"/><rect x="565.46" y="459.9" width="1.8" height="5.5" fill="#ff0000"/><rect x="568.82" y="457.4" width="1" height="8.6" fill="#00ff00"/><rect x="568.42" y="458.2" width="1.8" height="7.2" fill="#00ff00"/><rect x="571.78" y="457.3" width="1" height="8.7" fill="#00ff00"/><rect x="571.38" y="458.0" width="1.8" height="6.4" fill="#00ff00"/><rect x="574.74" y="458.5" width="1" height="7.3" fill="#00ff00"/><rect x="574.34" y="459.4" width="1.8" height="4.9" fill="#00ff00"/><rect x="577.70" y="457.5" width="1" height="7.4" fill="#00ff00"/><rect x="577.30" y="458.9" width="1.8" height="5.4" fill="#00ff00"/><rect x="580.66" y="456.0" width="1" height="8.4" fill="#ff0000"/><rect x="580.26" y="457.2" width="1.8" height="6.3" fill="#ff0000"/><rect x="583.62" y="457.5" width="1" height="4.9" fill="#00ff00"/><rect x="583.22" y="457.6" width="1.8" height="4.6" fill="#00ff00"/><rect x="586.58" y="456.2" width="1" height="6.8" fill="#00ff00"/><rect x="586.18" y="456.3" width="1.8" height="5.5" fill="#00ff00"/><rect x="589.54" y="455.0" width="1" height="5.5" fill="#00ff00"/><rect x="589.14" y="455.7" width="1.8" height="4.4" fill="#00ff00"/><rect x="592.50" y="449.9" width="1" height="10.2" fill="#ff0000"/><rect x="592.10" y="451.0" width="1.8" height="7.6" fill="#ff0000"/><rect x="595.46" y="450.9" width="1" height="9.5" fill="#00ff00"/><rect x="595.06" y="452.2" width="1.8" height="7.2" fill="#00ff00"/><rect x="598.42" y="451.0" width="1" height="5.2" fill="#00ff00"/><rect x="598.02" y="451.2" width="1.8" height="4.0" fill="#00ff00"/><rect x="601.38" y="450.4" width="1" height="4.7" fill="#00ff00"/><rect x="600.98" y="451.0" width="1.8" height="3.6" fill="#00ff00"/><rect x="604.34" y="445.6" width="1" height="9.4" fill="#ff0000"/><rect x="603.94" y="446.3" width="1.8" height="8.0" fill="#ff0000"/><rect x="607.30" y="447.4" width="1" height="6.2" fill="#00ff00"/><rect x="606.90" y="449.1" width="1.8" height="3.9" fill="#00ff00"/><rect x="610.26" y="442.6" width="1" height="9.7" fill="#00ff00"/><rect x="609.86" y="443.5" width="1.8" height="8.4" fill="#00ff00"/><rect x="613.22" y="442.3" width="1" height="10.4" fill="#00ff00"/><rect x="612.82" y="442.7" width="1.8" height="8.5" fill="#00ff00"/><rect x="616.18" y="443.2" width="1" height="9.9" fill="#00ff00"/><rect x="615.78" y="444.9" width="1.8" height="6.3" fill="#00ff00"/><rect x="619.14" y="441.8" width="1" height="9.0" fill="#00ff00"/><rect x="618.74" y="443.5" width="1.8" height="7.2" fill="#00ff00"/><rect x="622.10" y="440.1" width="1" height="11.2" fill="#00ff00"/><rect x="621.70" y="441.9" width="1.8" height="7.8" fill="#00ff00"/><rect x="625.06" y="439.1" width="1" height="7.5" fill="#00ff00"/><rect x="624.66" y="441.0" width="1.8" height="4.7" fill="#00ff00"/><rect x="628.02" y="438.4" width="1" height="7.1" fill="#00ff00"/><rect x="627.62" y="439.8" width="1.8" height="5.3" fill="#00ff00"/><rect x="630.98" y="435.6" width="1" height="7.9" fill="#00ff00"/><rect x="630.58" y="437.3" width="1.8" height="5.5" fill="#00ff00"/><rect x="633.94" y="433.3" width="1" height="10.4" fill="#00ff00"/><rect x="633.54" y="433.8" width="1.8" height="9.2" fill="#00ff00"/><rect x="636.90" y="432.3" width="1" height="9.7" fill="#00ff00"/><rect x="636.50" y="433.7" width="1.8" height="8.2" fill="#00ff00"/><rect x="639.86" y="430.6" width="1" height="8.2" fill="#00ff00"/><rect x="639.46" y="431.8" width="1.8" height="7.0" fill="#00ff00"/><rect x="642.82" y="429.4" width="1" height="8.2" fill="#00ff00"/><rect x="642.42" y="431.2" width="1.8" height="6.2" fill="#00ff00"/><rect x="645.78" y="427.7" width="1" height="11.0" fill="#00ff00"/><rect x="645.38" y="428.3" width="1.8" height="9.1" fill="#00ff00"/><rect x="648.74" y="423.1" width="1" height="11.3" fill="#00ff00"/><rect x="648.34" y="423.2" width="1.8" height="10.2" fill="#00ff00"/><rect x="651.70" y="422.6" width="1" height="8.7" fill="#00ff00"/><rect x="651.30" y="423.8" width="1.8" height="7.1" fill="#00ff00"/><rect x="654.66" y="421.4" width="1" height="12.3" fill="#00ff00"/><rect x="654.26" y="422.9" width="1.8" height="8.9" fill="#00ff00"/><rect x="657.62" y="417.7" width="1" height="11.1" fill="#00ff00"/><rect x="657.22" y="419.4" width="1.8" height="8.2" fill="#00ff00"/><rect x="660.58" y="418.0" width="1" height="8.1" fill="#00ff00"/><rect x="660.18" y="418.5" width="1.8" height="6.2" fill="#00ff00"/><rect x="663.54" y="412.9" width="1" height="12.1" fill="#00ff00"/><rect x="663.14" y="414.9" width="1.8" height="8.1" fill="#00ff00"/><rect x="666.50" y="412.7" width="1" height="11.4" fill="#00ff00"/><rect x="666.10" y="414.3" width="1.8" height="8.6" fill="#00ff00"/><rect x="669.46" y="408.5" width="1" height="13.3" fill="#ff0000"/><rect x="669.06" y="410.0" width="1.8" height="9.5" fill="#ff0000"/><rect x="672.42" y="410.3" width="1" height="9.0" fill="#00ff00"/><rect x="672.02" y="411.6" width="1.8" height="6.5" fill="#00ff00"/><rect x="675.38" y="406.9" width="1" height="10.1" fill="#00ff00"/><rect x="674.98" y="407.1" width="1.8" height="7.4" fill="#00ff00"/><rect x="678.34" y="404.8" width="1" height="12.7" fill="#00ff00"/><rect x="677.94" y="405.2" width="1.8" height="11.4" fill="#00ff00"/><rect x="681.30" y="405.5" width="1" height="10.0" fill="#00ff00"/><rect x="680.90" y="406.9" width="1.8" height="7.8" fill="#00ff00"/><rect x="684.26" y="408.4" width="1" height="7.2" fill="#ff0000"/><rect x="683.86" y="408.9" width="1.8" height="6.1" fill="#ff0000"/><rect x="687.22" y="405.2" width="1" height="12.6" fill="#00ff00"/><rect x="686.82" y="407.3" width="1.8" height="10.3" fill="#00ff00"/><rect x="690.18" y="406.9" width="1" height="10.8" fill="#00ff00"/><rect x="689.78" y="409.5" width="1.8" height="8.1" fill="#00ff00"/><rect x="693.14" y="403.4" width="1" height="12.7" fill="#00ff00"/><rect x="692.74" y="403.7" width="1.8" height="11.1" fill="#00ff00"/><rect x="696.10" y="405.0" width="1" height="8.8" fill="#ff0000"/><rect x="695.70" y="405.4" width="1.8" height="7.3" fill="#ff0000"/><rect x="699.06" y="407.4" width="1" height="11.5" fill="#00ff00"/><rect x="698.66" y="407.5" width="1.8" height="8.7" fill="#00ff00"/><rect x="702.02" y="404.7" width="1" height="18.1" fill="#ff0000"/><rect x="701.62" y="405.7" width="1.8" height="15.1" fill="#ff0000"/><rect x="704.98" y="403.2" width="1" height="14.8" fill="#ff0000"/><rect x="704.58" y="404.6" width="1.8" height="12.2" fill="#ff0000"/><rect x="707.94" y="408.2" width="1" height="17.5" fill="#ff0000"/><rect x="707.54" y="409.7" width="1.8" height="13.5" fill="#ff0000"/><rect x="710.90" y="404.5" width="1" height="16.3" fill="#00ff00"/><rect x="710.50" y="407.7" width="1.8" height="10.9" fill="#00ff00"/><rect x="713.86" y="405.3" width="1" height="15.7" fill="#00ff00"/><rect x="713.46" y="406.8" width="1.8" height="11.4" fill="#00ff00"/><rect x="716.82" y="407.6" width="1" height="13.6" fill="#00ff00"/><rect x="716.42" y="409.7" width="1.8" height="10.9" fill="#00ff00"/><rect x="719.78" y="405.6" width="1" height="12.7" fill="#00ff00"/><rect x="719.38" y="406.8" width="1.8" height="9.8" fill="#00ff00"/><rect x="722.74" y="399.0" width="1" height="17.1" fill="#00ff00"/><rect x="722.34" y="399.8" width="1.8" height="14.8" fill="#00ff00"/><rect x="725.70" y="396.4" width="1" height="16.7" fill="#00ff00"/><rect x="725.30" y="397.5" width="1.8" height="15.5" fill="#00ff00"/><rect x="728.66" y="387.5" width="1" height="13.2" fill="#00ff00"/><rect x="728.26" y="389.5" width="1.8" height="8.0" fill="#00ff00"/><rect x="731.62" y="383.6" width="1" height="14.2" fill="#00ff00"/><rect x="731.22" y="385.6" width="1.8" height="10.6" fill="#00ff00"/><rect x="734.58" y="379.5" width="1" height="14.5" fill="#00ff00"/><rect x="734.18" y="381.5" width="1.8" height="11.0" fill="#00ff00"/><rect x="737.54" y="376.9" width="1" height="15.4" fill="#00ff00"/><rect x="737.14" y="378.5" width="1.8" height="10.3" fill="#00ff00"/><rect x="740.50" y="377.6" width="1" height="11.4" fill="#00ff00"/><rect x="740.10" y="378.7" width="1.8" height="10.1" fill="#00ff00"/><rect x="743.46" y="372.5" width="1" height="20.9" fill="#00ff00"/><rect x="743.06" y="374.0" width="1.8" height="17.3" fill="#00ff00"/><rect x="746.42" y="367.0" width="1" height="16.6" fill="#00ff00"/><rect x="746.02" y="368.3" width="1.8" height="11.7" fill="#00ff00"/><rect x="749.38" y="360.0" width="1" height="17.8" fill="#00ff00"/><rect x="748.98" y="361.5" width="1.8" height="12.6" fill="#00ff00"/><rect x="752.34" y="350.5" width="1" height="14.4" fill="#00ff00"/><rect x="751.94" y="352.5" width="1.8" height="10.8" fill="#00ff00"/><rect x="755.30" y="342.5" width="1" height="18.8" fill="#00ff00"/><rect x="754.90" y="344.5" width="1.8" height="13.1" fill="#00ff00"/><rect x="758.26" y="332.2" width="1" height="13.0" fill="#00ff00"/><rect x="757.86" y="334.2" width="1.8" height="6.7" fill="#00ff00"/><rect x="761.22" y="321.8" width="1" height="12.1" fill="#00ff00"/><rect x="760.82" y="323.8" width="1.8" height="3.7" fill="#00ff00"/><rect x="764.18" y="309.8" width="1" height="9.8" fill="#00ff00"/><rect x="763.78" y="311.8" width="1.8" height="4.8" fill="#00ff00"/><rect x="767.14" y="294.2" width="1" height="11.1" fill="#00ff00"/><rect x="766.74" y="296.2" width="1.8" height="5.4" fill="#00ff00"/><rect x="770.10" y="278.7" width="1" height="8.1" fill="#ff0000"/><rect x="769.70" y="280.7" width="1.8" height="4.8" fill="#ff0000"/><rect x="773.06" y="302.4" width="1" height="23.9" fill="#ff0000"/><rect x="772.66" y="304.7" width="1.8" height="18.5" fill="#ff0000"/><rect x="776.02" y="293.0" width="1" height="33.7" fill="#ff0000"/><rect x="775.62" y="296.8" width="1.8" height="24.9" fill="#ff0000"/><rect x="778.98" y="287.7" width="1" height="26.1" fill="#ff0000"/><rect x="778.58" y="288.1" width="1.8" height="22.6" fill="#ff0000"/><rect x="781.94" y="266.5" width="1" height="32.4" fill="#ff0000"/><rect x="781.54" y="270.1" width="1.8" height="26.1" fill="#ff0000"/><rect x="784.90" y="272.7" width="1" height="27.4" fill="#00ff00"/><rect x="784.50" y="279.7" width="1.8" height="16.1" fill="#00ff00"/><rect x="787.86" y="277.2" width="1" height="37.1" fill="#ff0000"/><rect x="787.46" y="280.8" width="1.8" height="28.9" fill="#ff0000"/><rect x="790.82" y="281.7" width="1" height="34.4" fill="#ff0000"/><rect x="790.42" y="288.6" width="1.8" height="21.8" fill="#ff0000"/><rect x="793.78" y="295.3" width="1" height="30.6" fill="#ff0000"/><rect x="793.38" y="298.2" width="1.8" height="25.7" fill="#ff0000"/><rect x="796.74" y="298.8" width="1" height="35.9" fill="#ff0000"/><rect x="796.34" y="305.0" width="1.8" height="29.5" fill="#ff0000"/><rect x="799.70" y="313.5" width="1" height="30.8" fill="#ff0000"/><rect x="799.30" y="315.9" width="1.8" height="22.0" fill="#ff0000"/><rect x="802.66" y="318.7" width="1" height="22.0" fill="#ff0000"/><rect x="802.26" y="323.1" width="1.8" height="16.1" fill="#ff0000"/><rect x="805.62" y="318.5" width="1" height="26.8" fill="#ff0000"/><rect x="805.22" y="320.0" width="1.8" height="22.1" fill="#ff0000"/><rect x="808.58" y="315.2" width="1" height="31.0" fill="#00ff00"/><rect x="808.18" y="318.7" width="1.8" height="22.1" fill="#00ff00"/><rect x="811.54" y="304.2" width="1" height="27.7" fill="#00ff00"/><rect x="811.14" y="310.2" width="1.8" height="19.5" fill="#00ff00"/><rect x="814.50" y="276.7" width="1" height="41.5" fill="#00ff00"/><rect x="814.10" y="283.8" width="1.8" height="28.4" fill="#00ff00"/><rect x="817.46" y="287.8" width="1" height="33.1" fill="#00ff00"/><rect x="817.06" y="291.9" width="1.8" height="26.4" fill="#00ff00"/><rect x="820.42" y="293.7" width="1" height="31.6" fill="#ff0000"/><rect x="820.02" y="295.4" width="1.8" height="28.2" fill="#ff0000"/><rect x="823.38" y="294.3" width="1" height="19.3" fill="#00ff00"/><rect x="822.98" y="295.2" width="1.8" height="17.9" fill="#00ff00"/><rect x="826.34" y="287.7" width="1" height="21.0" fill="#ff0000"/><rect x="825.94" y="288.5" width="1.8" height="16.9" fill="#ff0000"/><rect x="829.30" y="275.7" width="1" height="38.3" fill="#00ff00"/><rect x="828.90" y="282.3" width="1.8" height="25.1" fill="#00ff00"/><rect x="832.26" y="266.2" width="1" height="24.3" fill="#ff0000"/><rect x="831.86" y="268.2" width="1.8" height="19.2" fill="#ff0000"/><rect x="835.22" y="251.6" width="1" height="22.4" fill="#00ff00"/><rect x="834.82" y="253.6" width="1.8" height="17.5" fill="#00ff00"/><rect x="838.18" y="241.7" width="1" height="28.5" fill="#00ff00"/><rect x="837.78" y="243.7" width="1.8" height="22.7" fill="#00ff00"/><rect x="841.14" y="231.9" width="1" height="26.1" fill="#00ff00"/><rect x="840.74" y="233.9" width="1.8" height="23.0" fill="#00ff00"/><rect x="844.10" y="221.9" width="1" height="37.3" fill="#00ff00"/><rect x="843.70" y="223.6" width="1.8" height="35.4" fill="#00ff00"/><rect x="847.06" y="208.4" width="1" height="42.1" fill="#00ff00"/><rect x="846.66" y="210.4" width="1.8" height="33.5" fill="#00ff00"/><rect x="850.02" y="197.6" width="1" height="55.0" fill="#00ff00"/><rect x="849.62" y="206.7" width="1.8" height="36.1" fill="#00ff00"/><rect x="852.98" y="202.0" width="1" height="42.5" fill="#ff0000"/><rect x="852.58" y="202.4" width="1.8" height="39.2" fill="#ff0000"/><rect x="855.94" y="188.3" width="1" height="51.5" fill="#00ff00"/><rect x="855.54" y="191.7" width="1.8" height="47.8" fill="#00ff00"/><rect x="858.90" y="181.8" width="1" height="46.3" fill="#00ff00"/><rect x="858.50" y="185.1" width="1.8" height="34.6" fill="#00ff00"/><rect x="861.86" y="172.7" width="1" height="44.6" fill="#ff0000"/><rect x="861.46" y="179.4" width="1.8" height="29.7" fill="#ff0000"/><rect x="867.78" y="206.9" width="1" height="35.7" fill="#ff0000"/><rect x="867.38" y="216.1" width="1.8" height="24.1" fill="#ff0000"/><rect x="870.74" y="215.9" width="1" height="28.3" fill="#ff0000"/><rect x="870.34" y="216.1" width="1.8" height="22.6" fill="#ff0000"/><rect x="879.62" y="210.6" width="1" height="36.2" fill="#00ff00"/><rect x="879.22" y="215.3" width="1.8" height="21.7" fill="#00ff00"/><rect x="882.58" y="192.9" width="1" height="55.2" fill="#00ff00"/><rect x="882.18" y="197.0" width="1.8" height="43.0" fill="#00ff00"/><rect x="885.54" y="195.1" width="1" height="34.8" fill="#00ff00"/><rect x="885.14" y="201.7" width="1.8" height="21.8" fill="#00ff00"/><rect x="888.50" y="173.1" width="1" height="60.3" fill="#ff0000"/><rect x="888.10" y="183.2" width="1.8" height="45.7" fill="#ff0000"/><rect x="894.42" y="197.1" width="1" height="32.9" fill="#00ff00"/><rect x="894.02" y="204.7" width="1.8" height="22.2" fill="#00ff00"/><rect x="897.38" y="183.7" width="1" height="31.4" fill="#00ff00"/><rect x="896.98" y="193.8" width="1.8" height="21.3" fill="#00ff00"/><rect x="900.34" y="166.7" width="1" height="44.4" fill="#00ff00"/><rect x="899.94" y="168.7" width="1.8" height="38.1" fill="#00ff00"/><rect x="903.30" y="161.5" width="1" height="35.1" fill="#00ff00"/><rect x="902.90" y="163.5" width="1.8" height="32.0" fill="#00ff00"/><rect x="906.26" y="156.3" width="1" height="37.3" fill="#00ff00"/><rect x="905.86" y="158.3" width="1.8" height="24.8" fill="#00ff00"/><rect x="909.22" y="151.3" width="1" height="41.3" fill="#00ff00"/><rect x="908.82" y="153.3" width="1.8" height="35.0" fill="#00ff00"/><rect x="912.18" y="147.2" width="1" height="41.5" fill="#ff0000"/><rect x="911.78" y="151.3" width="1.8" height="34.2" fill="#ff0000"/><rect x="915.14" y="153.3" width="1" height="36.6" fill="#ff0000"/><rect x="914.74" y="161.8" width="1.8" height="25.7" fill="#ff0000"/><rect x="918.10" y="152.4" width="1" height="46.8" fill="#00ff00"/><rect x="917.70" y="153.7" width="1.8" height="43.9" fill="#00ff00"/><rect x="921.06" y="150.5" width="1" height="31.9" fill="#ff0000"/><rect x="920.66" y="155.2" width="1.8" height="23.5" fill="#ff0000"/><rect x="924.02" y="142.6" width="1" height="65.6" fill="#ff0000"/><rect x="923.62" y="152.7" width="1.8" height="51.9" fill="#ff0000"/><rect x="926.98" y="155.7" width="1" height="41.4" fill="#ff0000"/><rect x="926.58" y="160.6" width="1.8" height="25.7" fill="#ff0000"/><rect x="929.94" y="164.6" width="1" height="38.9" fill="#ff0000"/><rect x="929.54" y="166.6" width="1.8" height="33.9" fill="#ff0000"/><rect x="935.86" y="166.5" width="1" height="49.2" fill="#00ff00"/><rect x="935.46" y="173.4" width="1.8" height="40.0" fill="#00ff00"/><rect x="938.82" y="143.3" width="1" height="61.3" fill="#00ff00"/><rect x="938.42" y="150.3" width="1.8" height="48.6" fill="#00ff00"/><rect x="941.78" y="148.4" width="1" height="39.3" fill="#00ff00"/><rect x="941.38" y="156.3" width="1.8" height="26.3" fill="#00ff00"/><rect x="944.74" y="149.0" width="1" height="45.7" fill="#00ff00"/><rect x="944.34" y="151.7" width="1.8" height="36.1" fill="#00ff00"/><rect x="947.70" y="143.3" width="1" height="52.2" fill="#00ff00"/><rect x="947.30" y="150.7" width="1.8" height="39.6" fill="#00ff00"/><rect x="950.66" y="138.9" width="1" height="69.7" fill="#ff0000"/><rect x="950.26" y="144.4" width="1.8" height="52.5" fill="#ff0000"/><rect x="953.62" y="135.8" width="1" height="53.7" fill="#ff0000"/><rect x="953.22" y="137.8" width="1.8" height="41.6" fill="#ff0000"/><rect x="956.58" y="137.6" width="1" height="66.3" fill="#00ff00"/><rect x="956.18" y="140.3" width="1.8" height="53.8" fill="#00ff00"/><rect x="959.54" y="135.2" width="1" height="62.9" fill="#ff0000"/><rect x="959.14" y="137.9" width="1.8" height="48.7" fill="#ff0000"/><rect x="962.50" y="137.0" width="1" height="62.1" fill="#ff0000"/><rect x="962.10" y="139.9" width="1.8" height="49.8" fill="#ff0000"/><rect x="965.46" y="135.3" width="1" height="45.8" fill="#00ff00"/><rect x="965.06" y="137.6" width="1.8" height="40.2" fill="#00ff00"/><rect x="968.42" y="132.5" width="1" height="41.6" fill="#00ff00"/><rect x="968.02" y="141.9" width="1.8" height="26.3" fill="#00ff00"/><rect x="971.38" y="124.6" width="1" height="47.5" fill="#00ff00"/><rect x="970.98" y="126.6" width="1.8" height="38.8" fill="#00ff00"/><rect x="974.34" y="119.4" width="1" height="52.8" fill="#00ff00"/><rect x="973.94" y="121.4" width="1.8" height="49.5" fill="#00ff00"/><rect x="977.30" y="116.8" width="1" height="27.8" fill="#ff0000"/><rect x="976.90" y="118.8" width="1.8" height="24.3" fill="#ff0000"/><rect x="980.26" y="116.1" width="1" height="40.8" fill="#ff0000"/><rect x="979.86" y="118.1" width="1.8" height="27.3" fill="#ff0000"/><rect x="986.18" y="142.3" width="1" height="34.7" fill="#ff0000"/><rect x="985.78" y="147.4" width="1.8" height="29.5" fill="#ff0000"/><rect x="989.14" y="152.9" width="1" height="42.4" fill="#ff0000"/><rect x="988.74" y="156.0" width="1.8" height="32.3" fill="#ff0000"/><rect x="992.10" y="166.3" width="1" height="40.3" fill="#ff0000"/><rect x="991.70" y="174.0" width="1.8" height="27.5" fill="#ff0000"/><rect x="995.06" y="176.1" width="1" height="34.7" fill="#ff0000"/><rect x="994.66" y="182.6" width="1.8" height="24.4" fill="#ff0000"/><rect x="1000.98" y="182.5" width="1" height="34.7" fill="#00ff00"/><rect x="1000.58" y="188.1" width="1.8" height="27.0" fill="#00ff00"/><rect x="1003.94" y="166.8" width="1" height="42.0" fill="#00ff00"/><rect x="1003.54" y="171.5" width="1.8" height="28.6" fill="#00ff00"/><rect x="1006.90" y="161.9" width="1" height="44.3" fill="#00ff00"/><rect x="1006.50" y="167.3" width="1.8" height="36.3" fill="#00ff00"/><rect x="1009.86" y="154.8" width="1" height="36.8" fill="#00ff00"/><rect x="1009.46" y="161.2" width="1.8" height="26.1" fill="#00ff00"/><rect x="1012.82" y="151.2" width="1" height="39.0" fill="#00ff00"/><rect x="1012.42" y="157.0" width="1.8" height="29.0" fill="#00ff00"/><rect x="1015.78" y="156.2" width="1" height="43.3" fill="#ff0000"/><rect x="1015.38" y="160.5" width="1.8" height="29.9" fill="#ff0000"/><rect x="1018.74" y="147.8" width="1" height="43.4" fill="#00ff00"/><rect x="1018.34" y="150.2" width="1.8" height="37.1" fill="#00ff00"/><rect x="1021.70" y="148.7" width="1" height="49.8" fill="#ff0000"/><rect x="1021.30" y="152.8" width="1.8" height="42.4" fill="#ff0000"/><rect x="1024.66" y="149.7" width="1" height="44.4" fill="#00ff00"/><rect x="1024.26" y="150.7" width="1.8" height="34.7" fill="#00ff00"/><rect x="1027.62" y="147.6" width="1" height="42.4" fill="#00ff00"/><rect x="1027.22" y="154.6" width="1.8" height="28.9" fill="#00ff00"/><rect x="1030.58" y="138.2" width="1" height="49.2" fill="#ff0000"/><rect x="1030.18" y="138.5" width="1.8" height="42.8" fill="#ff0000"/><rect x="1033.54" y="155.2" width="1" height="38.0" fill="#ff0000"/><rect x="1033.14" y="158.2" width="1.8" height="28.5" fill="#ff0000"/><rect x="1036.50" y="146.9" width="1" height="55.3" fill="#ff0000"/><rect x="1036.10" y="156.1" width="1.8" height="42.4" fill="#ff0000"/><rect x="1042.42" y="207.5" width="1" height="21.2" fill="#ff0000"/><rect x="1042.02" y="209.3" width="1.8" height="17.4" fill="#ff0000"/><rect x="1054.26" y="272.2" width="1" height="3.5" fill="#ff0000"/><rect x="1053.86" y="272.2" width="1.8" height="1.5" fill="#ff0000"/><rect x="1057.22" y="285.1" width="1" height="3.5" fill="#ff0000"/><rect x="1056.82" y="285.1" width="1.8" height="1.5" fill="#ff0000"/><rect x="1060.18" y="286.6" width="1" height="15.1" fill="#00ff00"/><rect x="1059.78" y="287.4" width="1.8" height="12.3" fill="#00ff00"/><rect x="1063.14" y="280.1" width="1" height="21.4" fill="#00ff00"/><rect x="1062.74" y="282.0" width="1.8" height="14.5" fill="#00ff00"/><rect x="1066.10" y="280.0" width="1" height="24.6" fill="#00ff00"/><rect x="1065.70" y="281.4" width="1.8" height="20.2" fill="#00ff00"/><rect x="1069.06" y="279.0" width="1" height="26.7" fill="#ff0000"/><rect x="1068.66" y="279.6" width="1.8" height="20.6" fill="#ff0000"/><rect x="1072.02" y="280.5" width="1" height="35.0" fill="#ff0000"/><rect x="1071.62" y="283.1" width="1.8" height="28.7" fill="#ff0000"/><rect x="1074.98" y="294.1" width="1" height="25.1" fill="#ff0000"/><rect x="1074.58" y="295.0" width="1.8" height="19.1" fill="#ff0000"/><rect x="1077.94" y="289.4" width="1" height="27.4" fill="#00ff00"/><rect x="1077.54" y="292.6" width="1.8" height="24.0" fill="#00ff00"/><rect x="1080.90" y="279.2" width="1" height="27.1" fill="#00ff00"/><rect x="1080.50" y="283.3" width="1.8" height="17.7" fill="#00ff00"/><rect x="1083.86" y="281.1" width="1" height="22.5" fill="#ff0000"/><rect x="1083.46" y="282.8" width="1.8" height="20.1" fill="#ff0000"/><rect x="1086.82" y="278.5" width="1" height="28.3" fill="#ff0000"/><rect x="1086.42" y="282.6" width="1.8" height="18.4" fill="#ff0000"/><rect x="1089.78" y="286.3" width="1" height="29.4" fill="#ff0000"/><rect x="1089.38" y="291.8" width="1.8" height="21.5" fill="#ff0000"/><rect x="1095.70" y="294.5" width="1" height="20.9" fill="#00ff00"/><rect x="1095.30" y="297.2" width="1.8" height="17.8" fill="#00ff00"/><rect x="1098.66" y="292.3" width="1" height="19.0" fill="#00ff00"/><rect x="1098.26" y="295.7" width="1.8" height="13.2" fill="#00ff00"/><rect x="1101.62" y="291.2" width="1" height="19.0" fill="#00ff00"/><rect x="1101.22" y="293.2" width="1.8" height="14.0" fill="#00ff00"/><rect x="1104.58" y="274.2" width="1" height="28.8" fill="#00ff00"/><rect x="1104.18" y="274.3" width="1.8" height="26.1" fill="#00ff00"/><rect x="1107.54" y="268.2" width="1" height="22.3" fill="#00ff00"/><rect x="1107.14" y="274.6" width="1.8" height="13.5" fill="#00ff00"/><rect x="1110.50" y="269.6" width="1" height="27.9" fill="#ff0000"/><rect x="1110.10" y="273.6" width="1.8" height="19.9" fill="#ff0000"/><rect x="1113.46" y="268.9" width="1" height="27.2" fill="#ff0000"/><rect x="1113.06" y="273.9" width="1.8" height="21.9" fill="#ff0000"/><rect x="1116.42" y="281.1" width="1" height="24.8" fill="#ff0000"/><rect x="1116.02" y="286.2" width="1.8" height="17.0" fill="#ff0000"/><rect x="1119.38" y="291.8" width="1" height="23.4" fill="#ff0000"/><rect x="1118.98" y="295.9" width="1.8" height="18.7" fill="#ff0000"/><rect x="1125.30" y="305.3" width="1" height="26.0" fill="#ff0000"/><rect x="1124.90" y="309.7" width="1.8" height="21.3" fill="#ff0000"/><rect x="1128.26" y="302.2" width="1" height="31.2" fill="#00ff00"/><rect x="1127.86" y="302.3" width="1.8" height="25.7" fill="#00ff00"/><rect x="1131.22" y="305.1" width="1" height="27.1" fill="#00ff00"/><rect x="1130.82" y="309.4" width="1.8" height="20.5" fill="#00ff00"/><rect x="1134.18" y="295.7" width="1" height="31.8" fill="#00ff00"/><rect x="1133.78" y="296.1" width="1.8" height="26.9" fill="#00ff00"/><rect x="1137.14" y="299.9" width="1" height="21.0" fill="#00ff00"/><rect x="1136.74" y="302.5" width="1.8" height="17.7" fill="#00ff00"/><rect x="1140.10" y="302.0" width="1" height="29.0" fill="#00ff00"/><rect x="1139.70" y="302.7" width="1.8" height="23.4" fill="#00ff00"/><rect x="1143.06" y="306.9" width="1" height="20.8" fill="#ff0000"/><rect x="1142.66" y="308.7" width="1.8" height="13.4" fill="#ff0000"/><rect x="1146.02" y="303.4" width="1" height="22.9" fill="#ff0000"/><rect x="1145.62" y="306.5" width="1.8" height="14.9" fill="#ff0000"/><rect x="1148.98" y="299.9" width="1" height="28.0" fill="#00ff00"/><rect x="1148.58" y="300.1" width="1.8" height="25.3" fill="#00ff00"/><rect x="1151.94" y="294.5" width="1" height="29.2" fill="#ff0000"/><rect x="1151.54" y="297.4" width="1.8" height="22.2" fill="#ff0000"/><rect x="1154.90" y="303.0" width="1" height="28.8" fill="#ff0000"/><rect x="1154.50" y="307.2" width="1.8" height="23.5" fill="#ff0000"/><rect x="1157.86" y="311.0" width="1" height="17.4" fill="#ff0000"/><rect x="1157.46" y="311.9" width="1.8" height="14.5" fill="#ff0000"/><rect x="1160.82" y="304.4" width="1" height="24.1" fill="#ff0000"/><rect x="1160.42" y="309.2" width="1.8" height="17.3" fill="#ff0000"/><rect x="1163.78" y="302.0" width="1" height="31.7" fill="#ff0000"/><rect x="1163.38" y="306.0" width="1.8" height="26.4" fill="#ff0000"/><rect x="1166.74" y="303.9" width="1" height="24.4" fill="#ff0000"/><rect x="1166.34" y="305.4" width="1.8" height="22.6" fill="#ff0000"/><rect x="1169.70" y="308.4" width="1" height="22.8" fill="#ff0000"/><rect x="1169.30" y="310.8" width="1.8" height="16.9" fill="#ff0000"/><rect x="1172.66" y="304.8" width="1" height="30.7" fill="#ff0000"/><rect x="1172.26" y="307.3" width="1.8" height="25.5" fill="#ff0000"/><rect x="1175.62" y="317.9" width="1" height="26.2" fill="#ff0000"/><rect x="1175.22" y="319.5" width="1.8" height="21.9" fill="#ff0000"/><rect x="1178.58" y="315.5" width="1" height="25.6" fill="#00ff00"/><rect x="1178.18" y="318.5" width="1.8" height="20.8" fill="#00ff00"/><rect x="1181.54" y="312.5" width="1" height="29.1" fill="#ff0000"/><rect x="1181.14" y="316.8" width="1.8" height="24.2" fill="#ff0000"/><rect x="1187.46" y="313.2" width="1" height="27.7" fill="#00ff00"/><rect x="1187.06" y="318.1" width="1.8" height="19.1" fill="#00ff00"/><rect x="1190.42" y="313.3" width="1" height="30.7" fill="#00ff00"/><rect x="1190.02" y="314.8" width="1.8" height="24.5" fill="#00ff00"/><rect x="1193.38" y="310.2" width="1" height="18.7" fill="#00ff00"/><rect x="1192.98" y="310.3" width="1.8" height="15.5" fill="#00ff00"/><rect x="1196.34" y="294.0" width="1" height="20.9" fill="#00ff00"/><rect x="1195.94" y="294.8" width="1.8" height="17.1" fill="#00ff00"/><rect x="1199.30" y="281.8" width="1" height="25.1" fill="#00ff00"/><rect x="1198.90" y="283.8" width="1.8" height="17.5" fill="#00ff00"/><rect x="1202.26" y="275.4" width="1" height="21.9" fill="#00ff00"/><rect x="1201.86" y="277.4" width="1.8" height="17.3" fill="#00ff00"/><rect x="1205.22" y="271.0" width="1" height="24.1" fill="#00ff00"/><rect x="1204.82" y="275.4" width="1.8" height="16.2" fill="#00ff00"/><rect x="1208.18" y="272.8" width="1" height="15.7" fill="#00ff00"/><rect x="1207.78" y="274.6" width="1.8" height="10.2" fill="#00ff00"/><rect x="1211.14" y="269.7" width="1" height="23.4" fill="#ff0000"/><rect x="1210.74" y="273.2" width="1.8" height="15.4" fill="#ff0000"/><rect x="1214.10" y="277.5" width="1" height="22.0" fill="#ff0000"/><rect x="1213.70" y="278.6" width="1.8" height="16.5" fill="#ff0000"/><rect x="1217.06" y="273.5" width="1" height="25.7" fill="#00ff00"/><rect x="1216.66" y="273.8" width="1.8" height="21.1" fill="#00ff00"/><rect x="1220.02" y="271.0" width="1" height="22.9" fill="#00ff00"/><rect x="1219.62" y="275.8" width="1.8" height="16.7" fill="#00ff00"/><rect x="1222.98" y="260.2" width="1" height="11.4" fill="#00ff00"/><rect x="1222.58" y="260.5" width="1.8" height="10.9" fill="#00ff00"/><rect x="1225.94" y="234.0" width="1" height="28.3" fill="#00ff00"/><rect x="1225.54" y="236.0" width="1.8" height="22.1" fill="#00ff00"/><rect x="1228.90" y="235.2" width="1" height="16.1" fill="#00ff00"/><rect x="1228.50" y="236.2" width="1.8" height="12.2" fill="#00ff00"/><rect x="1231.86" y="232.1" width="1" height="24.5" fill="#00ff00"/><rect x="1231.46" y="236.0" width="1.8" height="18.3" fill="#00ff00"/><rect x="1234.82" y="235.1" width="1" height="20.5" fill="#00ff00"/><rect x="1234.42" y="238.2" width="1.8" height="12.1" fill="#00ff00"/><rect x="1237.78" y="232.8" width="1" height="18.9" fill="#00ff00"/><rect x="1237.38" y="234.7" width="1.8" height="13.1" fill="#00ff00"/><rect x="1240.74" y="214.5" width="1" height="35.6" fill="#00ff00"/><rect x="1240.34" y="219.3" width="1.8" height="25.5" fill="#00ff00"/><rect x="1243.70" y="227.6" width="1" height="25.5" fill="#00ff00"/><rect x="1243.30" y="231.4" width="1.8" height="18.3" fill="#00ff00"/><rect x="1246.66" y="231.7" width="1" height="17.7" fill="#00ff00"/><rect x="1246.26" y="237.0" width="1.8" height="12.3" fill="#00ff00"/><rect x="1249.62" y="225.9" width="1" height="24.1" fill="#00ff00"/><rect x="1249.22" y="226.0" width="1.8" height="23.8" fill="#00ff00"/><rect x="1252.58" y="218.0" width="1" height="29.5" fill="#00ff00"/><rect x="1252.18" y="221.3" width="1.8" height="21.9" fill="#00ff00"/><rect x="1255.54" y="216.9" width="1" height="22.0" fill="#00ff00"/><rect x="1255.14" y="221.5" width="1.8" height="11.7" fill="#00ff00"/><rect x="1258.50" y="217.3" width="1" height="21.5" fill="#00ff00"/><rect x="1258.10" y="217.4" width="1.8" height="16.9" fill="#00ff00"/><rect x="1261.46" y="214.5" width="1" height="26.6" fill="#ff0000"/><rect x="1261.06" y="216.5" width="1.8" height="20.7" fill="#ff0000"/><rect x="1264.42" y="217.9" width="1" height="27.5" fill="#ff0000"/><rect x="1264.02" y="218.7" width="1.8" height="25.2" fill="#ff0000"/><rect x="1267.38" y="217.0" width="1" height="22.1" fill="#00ff00"/><rect x="1266.98" y="220.8" width="1.8" height="16.8" fill="#00ff00"/><rect x="1270.34" y="215.4" width="1" height="28.4" fill="#00ff00"/><rect x="1269.94" y="216.7" width="1.8" height="25.3" fill="#00ff00"/><rect x="1273.30" y="209.2" width="1" height="30.6" fill="#ff0000"/><rect x="1272.90" y="213.8" width="1.8" height="22.9" fill="#ff0000"/><rect x="1276.26" y="217.6" width="1" height="27.0" fill="#00ff00"/><rect x="1275.86" y="218.9" width="1.8" height="23.4" fill="#00ff00"/><rect x="1279.22" y="209.9" width="1" height="28.8" fill="#00ff00"/><rect x="1278.82" y="215.3" width="1.8" height="17.6" fill="#00ff00"/><rect x="1282.18" y="204.7" width="1" height="20.8" fill="#00ff00"/><rect x="1281.78" y="209.4" width="1.8" height="14.1" fill="#00ff00"/><rect x="1285.14" y="202.5" width="1" height="26.4" fill="#ff0000"/><rect x="1284.74" y="206.1" width="1.8" height="18.3" fill="#ff0000"/><rect x="1288.10" y="210.5" width="1" height="30.0" fill="#ff0000"/><rect x="1287.70" y="213.5" width="1.8" height="24.8" fill="#ff0000"/><rect x="1049.90" y="241.0" width="1" height="99.0" fill="#ff0000"/><rect x="1049.50" y="255.8" width="1.8" height="64.3" fill="#ff0000"/><rect x="1045.00" y="174.0" width="1" height="89.0" fill="#ff0000"/><rect x="1044.60" y="187.3" width="1.8" height="57.8" fill="#ff0000"/><rect x="1038.80" y="167.0" width="1" height="71.6" fill="#ff0000"/><rect x="1038.40" y="177.7" width="1.8" height="46.5" fill="#ff0000"/><rect x="997.30" y="172.0" width="1" height="58.0" fill="#ff0000"/><rect x="996.90" y="180.7" width="1.8" height="37.7" fill="#ff0000"/><rect x="984.30" y="137.0" width="1" height="54.6" fill="#ff0000"/><rect x="983.90" y="145.2" width="1.8" height="35.5" fill="#ff0000"/><rect x="865.50" y="184.0" width="1" height="62.0" fill="#ff0000"/><rect x="865.10" y="193.3" width="1.8" height="40.3" fill="#ff0000"/><rect x="875.30" y="204.0" width="1" height="47.0" fill="#ff0000"/><rect x="874.90" y="211.1" width="1.8" height="30.5" fill="#ff0000"/><rect x="891.00" y="219.0" width="1" height="18.0" fill="#ff0000"/><rect x="890.60" y="221.7" width="1.8" height="11.7" fill="#ff0000"/><rect x="933.50" y="169.0" width="1" height="42.0" fill="#ff0000"/><rect x="933.10" y="175.3" width="1.8" height="27.3" fill="#ff0000"/><rect x="1122.80" y="294.0" width="1" height="53.6" fill="#ff0000"/><rect x="1122.40" y="302.0" width="1.8" height="34.8" fill="#ff0000"/><rect x="1092.50" y="293.0" width="1" height="41.0" fill="#ff0000"/><rect x="1092.10" y="299.1" width="1.8" height="26.7" fill="#ff0000"/><rect x="1184.10" y="331.5" width="1" height="13.0" fill="#ff0000"/><rect x="1183.70" y="333.4" width="1.8" height="8.4" fill="#ff0000"/><rect x="1289.80" y="202.0" width="1" height="54.7" fill="#ff0000"/><rect x="1289.40" y="210.2" width="1.8" height="35.6" fill="#ff0000"/><rect x="1292.70" y="218.0" width="1" height="31.0" fill="#ff0000"/><rect x="1292.30" y="222.7" width="1.8" height="20.2" fill="#ff0000"/><rect x="1295.70" y="228.0" width="1" height="14.0" fill="#ff0000"/><rect x="1295.30" y="230.1" width="1.8" height="9.1" fill="#ff0000"/><rect x="1298.60" y="233.0" width="1" height="15.0" fill="#ff0000"/><rect x="1298.20" y="235.2" width="1.8" height="9.8" fill="#ff0000"/><rect x="1301.50" y="238.0" width="1" height="11.0" fill="#ff0000"/><rect x="1301.10" y="239.7" width="1.8" height="7.2" fill="#ff0000"/><rect x="1315.80" y="229.5" width="1" height="27.2" fill="#ff0000"/><rect x="1315.40" y="233.6" width="1.8" height="17.7" fill="#ff0000"/><rect x="1306.50" y="226.0" width="1" height="15.0" fill="#00ff00"/><rect x="1306.10" y="228.2" width="1.8" height="9.8" fill="#00ff00"/><rect x="1309.50" y="222.0" width="1" height="18.0" fill="#00ff00"/><rect x="1309.10" y="224.7" width="1.8" height="11.7" fill="#00ff00"/><rect x="1312.50" y="226.0" width="1" height="12.0" fill="#00ff00"/><rect x="1312.10" y="227.8" width="1.8" height="7.8" fill="#00ff00"/><rect x="130.00" y="471.0" width="1" height="24.0" fill="#ff0000"/><rect x="129.60" y="474.6" width="1.8" height="15.6" fill="#ff0000"/><rect x="132.90" y="478.0" width="1" height="24.0" fill="#ff0000"/><rect x="132.50" y="481.6" width="1.8" height="15.6" fill="#ff0000"/><rect x="135.80" y="476.0" width="1" height="24.0" fill="#ff0000"/><rect x="135.40" y="479.6" width="1.8" height="15.6" fill="#ff0000"/><path d="M0.0,476.3 C2.1,475.7 7.3,473.6 12.5,472.5 C17.7,471.4 25.1,470.1 31.3,469.4 C37.5,468.7 44.4,468.9 50.0,468.1 C55.6,467.3 60.8,465.3 65.0,464.4 C69.2,463.5 71.2,462.6 75.0,462.5 C78.8,462.4 82.3,463.7 87.5,463.8 C92.7,463.9 101.1,463.3 106.3,463.1 C111.5,462.9 115.7,462.5 118.8,462.5 C121.9,462.5 122.3,463.6 125.0,463.1 C127.7,462.6 131.9,459.7 135.0,459.4 C138.1,459.1 141.3,460.4 143.8,461.3 C146.3,462.2 146.9,463.6 150.0,465.0 C153.1,466.4 158.8,468.1 162.5,470.0 C166.2,471.9 169.4,474.6 172.5,476.3 C175.6,478.0 176.7,479.3 181.3,480.0 C185.9,480.7 194.8,480.4 200.0,480.6 C205.2,480.8 208.3,481.4 212.5,481.3 C216.7,481.2 220.8,481.2 225.0,480.0 C229.2,478.8 233.8,476.0 237.5,473.8 C241.2,471.6 244.4,468.3 247.5,466.9 C250.6,465.5 253.8,466.1 256.3,465.6 C258.8,465.1 259.8,464.1 262.5,463.8 C265.2,463.5 269.4,463.4 272.5,463.8 C275.6,464.2 277.1,465.8 281.3,466.3 C285.5,466.8 292.3,466.8 297.5,466.9 C302.7,467.0 307.9,466.8 312.5,466.9 C317.1,467.0 319.8,467.4 325.0,467.5 C330.2,467.6 337.6,467.4 343.8,467.5 C350.1,467.6 357.3,467.8 362.5,468.1 C367.7,468.4 368.8,469.1 375.0,469.4 C381.2,469.7 393.8,470.2 400.0,470.0 C406.2,469.8 408.3,469.8 412.5,468.1 C416.7,466.4 420.8,462.4 425.0,460.0 C429.2,457.6 433.3,455.2 437.5,453.8 C441.7,452.4 445.8,451.9 450.0,451.3 C454.2,450.7 458.8,449.8 462.5,450.0 C466.2,450.2 469.4,452.0 472.5,452.5 C475.6,453.0 477.8,452.9 481.3,453.1 C484.9,453.3 489.6,454.1 493.8,453.8 C498.0,453.5 502.1,451.8 506.3,451.3 C510.5,450.8 514.6,450.2 518.8,450.6 C523.0,451.0 527.1,452.8 531.3,453.8 C535.5,454.9 539.6,455.9 543.8,456.9 C548.0,457.9 552.1,459.5 556.3,460.0 C560.5,460.5 564.6,460.2 568.8,460.0 C573.0,459.8 575.7,460.1 581.3,458.8 C586.9,457.5 596.4,454.7 602.4,452.2 C608.4,449.7 612.0,446.0 617.3,443.7 C622.6,441.4 629.7,440.7 634.3,438.4 C638.9,436.1 639.6,433.6 644.9,429.9 C650.2,426.2 660.5,420.2 666.1,416.1 C671.8,412.0 673.5,407.9 678.8,405.5 C684.1,403.1 692.9,402.2 697.9,401.7 C702.9,401.2 704.6,401.9 708.5,402.3 C712.4,402.8 717.8,405.3 721.3,404.4 C724.8,403.5 726.5,400.7 729.7,397.0 C732.9,393.3 737.5,385.7 740.3,382.2 C743.1,378.7 744.2,380.4 746.7,375.8 C749.2,371.2 752.4,363.1 755.2,354.6 C758.0,346.1 760.9,337.3 763.7,324.9 C766.5,312.5 769.0,290.6 772.2,280.3 C775.4,270.0 779.6,267.0 782.8,263.3 C786.0,259.6 788.5,258.0 791.3,258.0 C794.1,258.0 796.6,260.5 799.8,263.3 C803.0,266.1 807.2,272.3 810.4,275.0 C813.6,277.7 816.4,278.8 818.9,279.3 C821.4,279.8 823.1,277.9 825.2,278.2 C827.3,278.5 829.9,284.2 831.7,281.4 C833.5,278.6 834.0,268.1 835.8,261.2 C837.5,254.3 839.9,248.7 842.2,240.0 C844.6,231.3 846.1,222.3 849.9,208.9 C853.7,195.5 860.7,167.0 864.8,159.4 C868.9,151.8 871.4,161.0 874.7,163.1 C878.0,165.2 881.7,168.1 884.6,171.8 C887.5,175.5 889.5,184.2 892.0,185.4 C894.5,186.6 896.5,183.1 899.4,179.2 C902.3,175.3 905.6,167.9 909.3,161.9 C913.0,155.9 917.6,146.4 921.7,143.3 C925.8,140.2 931.2,142.9 934.1,143.3 C937.0,143.7 937.0,145.8 939.0,145.8 C941.0,145.8 943.9,143.3 946.4,143.3 C948.9,143.3 950.6,145.6 953.9,145.8 C957.2,146.0 962.5,147.7 966.2,144.6 C969.9,141.5 972.8,130.5 976.1,127.2 C979.4,123.9 981.9,125.8 986.0,124.8 C990.1,123.8 996.4,121.0 1000.9,121.0 C1005.4,121.0 1008.8,124.0 1013.3,124.8 C1017.8,125.6 1024.4,124.0 1028.1,126.0 C1031.8,128.1 1033.2,132.3 1035.5,137.1 C1037.8,141.8 1039.6,153.2 1041.7,154.5 C1043.8,155.8 1045.2,150.0 1047.9,144.6 C1050.6,139.2 1054.9,126.2 1057.8,122.3 C1060.7,118.4 1062.3,119.3 1065.2,121.0 C1068.1,122.7 1072.2,127.0 1075.1,132.2 C1078.0,137.4 1080.1,142.9 1082.6,152.0 C1085.1,161.1 1088.3,177.4 1090.0,186.6 C1091.7,195.8 1091.8,199.8 1093.0,207.0 C1094.2,214.2 1096.0,223.1 1097.3,230.0 C1098.6,236.9 1099.8,242.8 1101.0,248.6 C1102.2,254.4 1103.3,260.8 1104.8,264.7 C1106.2,268.6 1108.0,270.6 1109.7,272.1 C1111.4,273.6 1112.4,273.9 1114.7,273.9 C1117.0,273.9 1120.4,272.2 1123.3,272.1 C1126.2,272.0 1128.9,272.7 1132.0,273.3 C1135.1,273.9 1138.2,274.8 1141.9,275.8 C1145.6,276.8 1151.0,278.5 1154.3,279.5 C1157.6,280.5 1159.7,280.4 1161.7,282.0 C1163.8,283.6 1164.8,286.1 1166.6,289.4 C1168.4,292.7 1170.9,299.1 1172.8,301.8 C1174.7,304.5 1175.7,305.5 1177.8,305.5 C1179.9,305.5 1182.9,302.0 1185.2,301.8 C1187.5,301.6 1189.6,304.7 1191.4,304.3 C1193.2,303.9 1194.2,302.8 1196.3,299.3 C1198.4,295.8 1201.3,287.9 1203.8,283.2 C1206.3,278.4 1208.5,274.5 1211.2,270.8 C1213.9,267.1 1217.7,264.5 1220.0,260.9 C1222.3,257.3 1223.0,254.5 1224.8,249.3 C1226.6,244.1 1228.9,234.7 1230.9,229.5 C1233.0,224.3 1235.4,220.9 1237.1,218.4 C1238.8,215.9 1239.1,215.1 1240.8,214.7 C1242.5,214.3 1245.1,215.5 1247.0,215.9 C1248.9,216.3 1250.3,217.9 1252.0,217.1 C1253.7,216.3 1254.8,212.8 1256.9,210.9 C1259.0,209.0 1262.1,206.6 1264.4,205.4 C1266.7,204.2 1268.8,203.4 1270.5,203.5 C1272.2,203.6 1273.0,204.9 1274.3,206.0 C1275.5,207.1 1276.8,209.6 1278.0,210.3 C1279.2,211.0 1280.3,211.2 1281.7,210.3 C1283.1,209.4 1284.9,205.7 1286.6,204.8 C1288.2,203.9 1289.5,204.7 1291.6,204.8 C1293.7,204.9 1296.3,205.1 1299.0,205.4 C1301.7,205.7 1304.9,206.4 1307.7,206.6 C1310.5,206.8 1314.4,206.6 1315.7,206.6" fill="none" stroke="#ff00ff" stroke-width="1.5" stroke-linejoin="round"/><path d="M0.0,490.0 C2.1,490.0 8.3,490.3 12.5,490.0 C16.7,489.7 20.8,489.1 25.0,488.1 C29.2,487.1 32.3,485.4 37.5,483.8 C42.7,482.2 50.0,480.1 56.3,478.8 C62.5,477.6 69.8,476.9 75.0,476.3 C80.2,475.7 83.8,475.2 87.5,475.0 C91.2,474.8 93.3,474.6 97.5,475.0 C101.7,475.4 109.0,476.7 112.5,477.5 C116.0,478.3 116.7,478.8 118.8,480.0 C120.9,481.2 122.9,482.7 125.0,485.0 C127.1,487.3 129.2,491.5 131.3,493.8 C133.4,496.1 134.8,497.6 137.5,498.8 C140.2,500.1 143.3,500.9 147.5,501.3 C151.7,501.7 156.9,501.7 162.5,501.3 C168.1,500.9 175.1,500.3 181.3,498.8 C187.6,497.3 194.8,493.9 200.0,492.5 C205.2,491.1 208.3,490.8 212.5,490.6 C216.7,490.4 220.8,491.0 225.0,491.3 C229.2,491.6 233.3,492.3 237.5,492.5 C241.7,492.7 245.8,493.1 250.0,492.5 C254.2,491.9 259.2,490.1 262.5,488.8 C265.8,487.6 267.5,486.2 270.0,485.0 C272.5,483.8 275.0,482.6 277.5,481.3 C280.0,480.1 281.2,478.3 285.0,477.5 C288.8,476.7 293.3,476.7 300.0,476.3 C306.7,475.9 316.7,475.4 325.0,475.0 C333.3,474.6 337.5,474.2 350.0,473.8 C362.5,473.4 389.6,472.3 400.0,472.5 C410.4,472.7 408.3,474.4 412.5,475.0 C416.7,475.6 419.8,476.3 425.0,476.3 C430.2,476.3 437.6,475.8 443.8,475.0 C450.1,474.2 457.3,473.4 462.5,471.3 C467.7,469.2 470.8,464.6 475.0,462.5 C479.2,460.4 483.3,459.0 487.5,458.8 C491.7,458.6 496.9,460.3 500.0,461.3 C503.1,462.3 503.2,464.0 506.3,465.0 C509.4,466.0 513.6,466.9 518.8,467.5 C524.0,468.1 531.2,468.5 537.5,468.8 C543.8,469.1 550.0,469.4 556.3,469.4 C562.5,469.4 569.8,469.3 575.0,468.8 C580.2,468.3 583.3,466.7 587.5,466.3 C591.7,465.9 595.0,465.8 600.0,466.3 C605.0,466.8 611.6,469.4 617.3,469.2 C623.0,469.0 627.9,466.8 634.3,465.0 C640.7,463.2 648.4,461.0 655.5,458.5 C662.6,456.0 669.6,454.0 676.7,450.1 C683.8,446.2 690.5,440.0 697.9,435.2 C705.3,430.4 716.0,423.2 721.3,421.4 C726.6,419.6 726.5,423.2 729.7,424.6 C732.9,426.0 736.8,428.1 740.3,429.9 C743.8,431.7 746.4,432.5 751.0,435.2 C755.6,437.9 764.5,444.4 768.0,445.8 C771.5,447.2 769.7,448.3 772.2,443.7 C774.7,439.1 779.3,427.4 782.8,418.2 C786.3,409.0 789.9,398.0 793.4,388.5 C796.9,379.0 800.5,368.8 804.0,361.0 C807.5,353.2 810.0,345.7 814.6,341.8 C819.2,337.9 828.1,336.5 831.6,337.6 C835.1,338.7 833.7,344.3 835.8,348.2 C837.9,352.1 841.1,357.8 844.3,361.0 C847.5,364.2 851.5,367.9 854.9,367.3 C858.3,366.7 861.1,366.9 864.8,357.4 C868.5,347.9 872.6,327.7 877.1,310.4 C881.6,293.1 885.8,263.8 892.0,253.5 C898.2,243.2 908.9,248.9 914.3,248.5 C919.7,248.1 920.1,253.9 924.2,251.0 C928.3,248.1 934.0,240.3 939.0,231.2 C944.0,222.1 948.9,202.3 953.9,196.5 C958.9,190.7 964.2,195.7 968.7,196.5 C973.2,197.3 977.4,201.3 981.1,201.5 C984.8,201.7 987.3,196.6 991.0,197.8 C994.7,199.0 999.7,206.0 1003.4,208.9 C1007.1,211.8 1009.2,213.9 1013.3,215.1 C1017.4,216.3 1024.0,216.5 1028.1,216.3 C1032.2,216.1 1035.5,213.5 1038.0,213.9 C1040.5,214.3 1040.1,209.7 1043.0,218.8 C1045.9,227.9 1051.3,251.0 1055.4,268.3 C1059.5,285.6 1064.0,309.2 1067.7,322.8 C1071.4,336.4 1073.9,345.5 1077.6,350.0 C1081.3,354.5 1086.9,351.9 1090.0,350.0 C1093.1,348.1 1094.0,342.8 1096.1,338.9 C1098.1,335.0 1100.2,330.4 1102.3,326.5 C1104.4,322.6 1106.2,317.2 1108.5,315.4 C1110.8,313.5 1114.1,314.8 1115.9,315.4 C1117.8,316.0 1117.3,316.8 1119.6,319.1 C1121.9,321.4 1126.8,326.7 1129.5,329.0 C1132.2,331.3 1132.6,331.7 1135.7,332.7 C1138.8,333.7 1143.6,334.2 1148.1,335.2 C1152.6,336.2 1158.6,339.3 1162.9,338.9 C1167.2,338.5 1170.4,332.5 1174.1,332.7 C1177.8,332.9 1181.9,338.9 1185.2,340.1 C1188.5,341.3 1190.8,338.2 1193.9,340.1 C1197.0,342.0 1201.1,349.0 1203.8,351.3 C1206.5,353.6 1207.1,353.1 1210.0,353.8 C1212.9,354.5 1218.0,355.1 1221.1,355.7 C1224.2,356.3 1225.8,358.5 1228.6,357.6 C1231.4,356.7 1234.5,356.4 1237.8,350.1 C1241.1,343.8 1245.7,327.7 1248.3,320.0 C1250.9,312.3 1250.9,308.2 1253.2,303.8 C1255.5,299.4 1259.2,297.0 1261.9,293.9 C1264.6,290.8 1267.2,288.9 1269.3,285.2 C1271.4,281.5 1272.6,276.4 1274.3,271.6 C1276.0,266.9 1277.5,259.8 1279.2,256.7 C1280.9,253.6 1281.9,253.8 1284.2,253.0 C1286.5,252.2 1289.3,252.6 1292.8,251.8 C1296.3,251.0 1301.4,248.5 1305.2,248.1 C1309.0,247.7 1314.0,249.1 1315.7,249.3" fill="none" stroke="#ff00ff" stroke-width="1.5" stroke-linejoin="round"/><path d="M0.0,482.5 C2.1,482.1 6.2,481.0 12.5,480.0 C18.8,479.0 29.2,477.8 37.5,476.3 C45.8,474.9 55.2,472.5 62.5,471.3 C69.8,470.1 75.0,469.6 81.3,469.4 C87.5,469.2 93.8,469.6 100.0,470.0 C106.2,470.4 113.6,470.8 118.8,471.9 C124.0,472.9 127.1,474.3 131.3,476.3 C135.5,478.3 139.6,481.9 143.8,483.8 C148.0,485.7 151.1,486.5 156.3,487.5 C161.5,488.5 167.7,489.9 175.0,490.0 C182.3,490.1 191.7,489.1 200.0,488.1 C208.3,487.1 218.8,485.2 225.0,483.8 C231.2,482.4 233.3,481.1 237.5,480.0 C241.7,478.9 244.8,478.5 250.0,477.5 C255.2,476.5 262.6,474.8 268.8,473.8 C275.1,472.8 281.2,471.8 287.5,471.3 C293.8,470.8 300.1,470.6 306.3,470.6 C312.6,470.6 318.8,471.1 325.0,471.3 C331.2,471.5 337.6,471.9 343.8,471.9 C350.1,471.9 353.1,471.5 362.5,471.3 C371.9,471.1 390.6,470.8 400.0,470.6 C409.4,470.4 412.6,470.9 418.8,470.0 C425.1,469.1 431.2,466.4 437.5,465.0 C443.8,463.6 450.1,462.7 456.3,461.3 C462.6,459.9 469.8,457.6 475.0,456.9 C480.2,456.2 482.3,456.7 487.5,456.9 C492.7,457.1 500.1,457.6 506.3,458.1 C512.5,458.6 517.7,459.6 525.0,460.0 C532.3,460.4 541.7,460.5 550.0,460.6 C558.3,460.7 569.8,460.6 575.0,460.6 C580.2,460.6 573.1,462.1 581.2,460.7 C589.3,459.3 611.3,455.8 623.7,452.2 C636.1,448.6 644.9,444.0 655.5,439.4 C666.1,434.8 678.5,428.1 687.3,424.6 C696.1,421.1 701.4,420.7 708.5,418.2 C715.6,415.7 723.7,412.9 729.7,409.7 C735.7,406.5 739.3,404.4 744.6,399.1 C749.9,393.8 757.0,384.6 761.6,377.9 C766.2,371.2 768.7,365.5 772.2,358.8 C775.7,352.1 779.3,343.6 782.8,337.6 C786.3,331.6 788.8,327.1 793.4,322.8 C798.0,318.6 805.1,314.4 810.4,312.1 C815.7,309.8 821.0,310.8 825.2,309.0 C829.4,307.2 831.9,305.2 835.8,301.5 C839.7,297.8 843.0,295.5 848.6,286.7 C854.2,277.9 862.9,258.2 869.7,248.5 C876.5,238.8 882.1,236.5 889.5,228.7 C896.9,220.9 908.1,206.9 914.3,201.5 C920.5,196.1 921.6,199.4 926.6,196.5 C931.6,193.6 938.6,188.5 944.0,184.2 C949.4,179.9 953.8,173.6 958.8,170.5 C963.8,167.4 969.2,167.0 973.7,165.6 C978.2,164.2 981.9,162.3 986.0,161.9 C990.1,161.5 993.9,162.1 998.4,163.1 C1002.9,164.1 1008.3,166.6 1013.3,168.1 C1018.2,169.6 1023.6,170.8 1028.1,171.8 C1032.6,172.8 1036.8,173.5 1040.5,174.3 C1044.2,175.1 1046.7,174.6 1050.4,176.7 C1054.1,178.8 1058.3,182.9 1062.8,186.6 C1067.3,190.3 1073.1,195.3 1077.6,199.0 C1082.1,202.7 1084.0,203.7 1090.0,208.9 C1096.0,214.1 1107.9,224.8 1113.4,230.0 C1119.0,235.2 1119.8,235.8 1123.3,239.9 C1126.8,244.0 1130.4,250.3 1134.5,254.8 C1138.6,259.3 1143.8,263.4 1148.1,267.1 C1152.4,270.8 1156.3,273.3 1160.4,277.0 C1164.5,280.7 1168.7,285.5 1172.8,289.4 C1176.9,293.3 1181.7,297.6 1185.2,300.5 C1188.7,303.4 1190.8,305.4 1193.9,306.7 C1197.0,307.9 1199.5,308.0 1203.8,308.0 C1208.1,308.0 1216.5,307.4 1220.0,306.7 C1223.5,306.0 1222.0,304.9 1224.8,303.8 C1227.6,302.7 1233.0,301.4 1237.1,300.0 C1241.2,298.6 1245.4,297.0 1249.5,295.1 C1253.6,293.2 1257.8,291.0 1261.9,288.9 C1266.0,286.8 1270.2,285.0 1274.3,282.7 C1278.4,280.4 1282.5,277.6 1286.6,275.3 C1290.7,273.0 1294.2,271.7 1299.0,269.1 C1303.8,266.5 1312.9,261.4 1315.7,259.8" fill="none" stroke="#ff00ff" stroke-width="1.5" stroke-linejoin="round"/><path d="M0.0,483.0 C4.2,482.7 16.7,482.0 25.0,481.3 C33.3,480.6 41.7,479.6 50.0,478.8 C58.3,478.0 67.7,476.9 75.0,476.3 C82.3,475.7 87.5,474.9 93.8,475.0 C100.0,475.1 107.3,476.3 112.5,476.9 C117.7,477.5 119.8,478.3 125.0,478.8 C130.2,479.3 137.6,479.5 143.8,480.0 C150.1,480.5 156.2,481.4 162.5,481.9 C168.8,482.4 175.1,482.2 181.3,483.1 C187.6,484.0 193.8,487.0 200.0,487.5 C206.2,488.0 213.6,486.9 218.8,486.3 C224.0,485.7 226.1,484.6 231.3,483.8 C236.5,483.0 243.8,482.4 250.0,481.3 C256.2,480.2 262.6,478.6 268.8,477.5 C275.1,476.4 281.2,475.5 287.5,475.0 C293.8,474.5 300.1,474.5 306.3,474.4 C312.6,474.3 317.7,474.5 325.0,474.4 C332.3,474.3 337.5,474.1 350.0,473.8 C362.5,473.5 387.5,472.8 400.0,472.5 C412.5,472.2 416.7,472.7 425.0,471.9 C433.3,471.1 442.7,468.6 450.0,467.5 C457.3,466.4 464.6,466.0 468.8,465.0 C473.0,464.0 471.9,462.1 475.0,461.3 C478.1,460.5 483.3,460.0 487.5,460.0 C491.7,460.0 495.8,460.7 500.0,461.3 C504.2,461.9 508.3,463.2 512.5,463.8 C516.7,464.4 518.8,464.6 525.0,465.0 C531.2,465.4 541.7,466.3 550.0,466.3 C558.3,466.3 566.7,465.6 575.0,465.0 C583.3,464.4 579.9,467.1 600.0,462.5 C620.1,457.9 674.9,443.3 695.8,437.3 C716.7,431.3 716.3,430.9 725.5,426.7 C734.7,422.5 743.2,417.5 751.0,411.9 C758.8,406.2 765.1,398.8 772.2,392.8 C779.3,386.8 786.3,381.1 793.4,375.8 C800.5,370.5 808.2,365.6 814.6,361.0 C821.0,356.4 826.7,353.2 831.6,348.2 C836.5,343.2 838.8,337.5 844.3,331.2 C849.8,324.9 857.3,319.6 864.8,310.4 C872.3,301.1 881.2,286.0 889.5,275.7 C897.8,265.4 906.0,256.3 914.3,248.5 C922.5,240.7 931.6,235.3 939.0,228.7 C946.4,222.1 951.4,215.9 958.8,208.9 C966.2,201.9 975.4,191.6 983.6,186.6 C991.9,181.6 1000.9,181.0 1008.3,179.2 C1015.7,177.3 1023.1,176.3 1028.1,175.5 C1033.0,174.7 1035.1,174.1 1038.0,174.3 C1040.9,174.5 1042.1,173.4 1045.4,176.7 C1048.7,180.0 1052.8,185.4 1057.8,194.1 C1062.8,202.8 1071.4,219.6 1075.1,228.7 C1078.8,237.8 1078.0,243.2 1080.0,248.6 C1082.0,254.0 1084.9,255.7 1087.4,260.9 C1089.9,266.0 1092.0,274.1 1094.9,279.5 C1097.8,284.9 1101.1,290.4 1104.8,293.1 C1108.5,295.8 1113.0,294.4 1117.1,295.6 C1121.2,296.8 1125.4,299.1 1129.5,300.5 C1133.6,301.9 1137.8,303.1 1141.9,304.3 C1146.0,305.6 1150.2,306.4 1154.3,308.0 C1158.4,309.6 1162.5,312.3 1166.6,314.2 C1170.7,316.1 1174.9,317.9 1179.0,319.1 C1183.1,320.3 1188.3,321.4 1191.4,321.6 C1194.5,321.8 1195.5,321.1 1197.6,320.3 C1199.7,319.5 1201.5,317.8 1203.8,316.6 C1206.1,315.4 1208.5,314.5 1211.2,312.9 C1213.9,311.2 1217.7,309.0 1220.0,306.7 C1222.3,304.4 1222.0,303.0 1224.8,298.8 C1227.6,294.6 1232.6,287.9 1237.1,281.5 C1241.6,275.1 1247.9,265.6 1252.0,260.4 C1256.1,255.2 1258.2,254.0 1261.9,250.5 C1265.6,247.0 1270.2,242.9 1274.3,239.4 C1278.4,235.9 1282.5,231.2 1286.6,229.5 C1290.7,227.8 1294.9,229.3 1299.0,228.9 C1303.1,228.5 1308.6,227.2 1311.4,227.0 C1314.2,226.8 1315.0,227.5 1315.7,227.6" fill="none" stroke="#ff00ff" stroke-width="1.5" stroke-linejoin="round"/><path d="M0.0,480.0 C4.2,479.8 16.7,479.4 25.0,478.8 C33.3,478.2 41.7,477.1 50.0,476.3 C58.3,475.5 66.7,474.3 75.0,473.8 C83.3,473.3 92.7,473.1 100.0,473.1 C107.3,473.1 113.6,473.3 118.8,473.8 C124.0,474.3 126.1,475.5 131.3,476.3 C136.5,477.1 142.7,477.9 150.0,478.8 C157.3,479.7 166.7,481.2 175.0,481.9 C183.3,482.6 191.7,483.0 200.0,483.1 C208.3,483.2 216.7,483.0 225.0,482.5 C233.3,482.0 241.7,480.8 250.0,480.0 C258.3,479.2 266.7,478.3 275.0,477.5 C283.3,476.7 291.7,475.6 300.0,475.0 C308.3,474.4 316.7,474.1 325.0,473.8 C333.3,473.5 339.6,473.3 350.0,473.1 C360.4,472.9 375.0,472.8 387.5,472.5 C400.0,472.2 414.6,472.3 425.0,471.3 C435.4,470.3 442.7,467.5 450.0,466.3 C457.3,465.1 462.6,464.9 468.8,464.4 C475.1,463.9 481.2,463.4 487.5,463.1 C493.8,462.8 500.1,462.6 506.3,462.5 C512.5,462.4 517.7,462.5 525.0,462.5 C532.3,462.5 541.7,462.6 550.0,462.5 C558.3,462.4 566.3,462.4 575.0,461.9 C583.7,461.4 592.5,460.9 602.4,459.6 C612.3,458.3 623.7,456.8 634.3,454.3 C644.9,451.8 658.0,447.3 666.1,444.8 C674.2,442.3 676.0,441.6 683.1,439.5 C690.2,437.4 701.1,434.3 708.5,432.0 C715.9,429.7 721.2,428.7 727.6,425.7 C734.0,422.7 741.0,418.1 746.7,414.0 C752.4,409.9 757.4,405.6 761.6,401.3 C765.9,397.1 767.6,393.8 772.2,388.5 C776.8,383.2 783.9,374.0 789.2,369.4 C794.5,364.8 798.0,364.2 804.0,361.0 C810.0,357.8 819.2,355.0 825.2,350.3 C831.2,345.6 833.4,341.4 840.0,332.7 C846.6,324.0 856.5,307.9 864.8,298.0 C873.0,288.1 881.2,281.6 889.5,273.3 C897.8,265.1 906.0,255.9 914.3,248.5 C922.5,241.1 930.8,235.3 939.0,228.7 C947.2,222.1 957.2,213.8 963.8,208.9 C970.4,204.0 974.5,201.5 978.6,199.0 C982.7,196.5 983.5,194.9 988.5,194.1 C993.5,193.3 1001.7,194.9 1008.3,194.1 C1014.9,193.3 1023.1,189.9 1028.1,189.1 C1033.0,188.3 1034.3,187.4 1038.0,189.1 C1041.7,190.8 1046.3,194.9 1050.4,199.0 C1054.5,203.1 1058.3,209.0 1062.8,213.9 C1067.3,218.8 1073.1,224.8 1077.6,228.7 C1082.1,232.6 1085.5,234.1 1090.0,237.4 C1094.5,240.7 1100.3,245.7 1104.8,248.6 C1109.3,251.5 1113.0,251.9 1117.1,254.8 C1121.2,257.7 1125.4,263.0 1129.5,265.9 C1133.6,268.8 1137.8,270.0 1141.9,272.1 C1146.0,274.2 1150.2,276.0 1154.3,278.3 C1158.4,280.6 1162.5,283.4 1166.6,285.7 C1170.7,288.0 1174.9,289.8 1179.0,291.9 C1183.1,294.0 1187.9,297.4 1191.4,298.1 C1194.9,298.8 1196.5,297.0 1200.0,296.3 C1203.5,295.6 1208.7,294.7 1212.4,293.9 C1216.1,293.1 1219.2,292.6 1222.3,291.4 C1225.4,290.1 1227.4,288.3 1230.9,286.4 C1234.4,284.5 1239.2,282.5 1243.3,280.2 C1247.4,277.9 1251.6,275.3 1255.7,272.8 C1259.8,270.3 1264.6,267.2 1268.1,265.4 C1271.6,263.5 1273.6,263.5 1276.7,261.7 C1279.8,259.9 1282.9,256.0 1286.6,254.3 C1290.3,252.7 1294.2,252.5 1299.0,251.8 C1303.8,251.1 1312.9,250.2 1315.7,249.9" fill="none" stroke="#ffff00" stroke-width="1.5" stroke-linejoin="round"/><line x1="115.6" y1="507" x2="1477.5" y2="382.5" stroke="#ffa000" stroke-width="3.4" stroke-linecap="butt"/><line x1="972.4" y1="118.6" x2="1477.5" y2="428.6" stroke="#ffa000" stroke-width="3.4" stroke-linecap="butt"/><line x1="1289.8" y1="196.9" x2="1404" y2="552" stroke="#ffa000" stroke-width="3.4" stroke-linecap="butt"/><line x1="1290" y1="259.5" x2="1477.5" y2="217.5" stroke="#ffa000" stroke-width="3.4" stroke-linecap="butt"/><line x1="1311" y1="233" x2="1477.5" y2="85.5" stroke="#ffa000" stroke-width="3.4" stroke-linecap="butt"/><path d="M1315.5 76 V70.5 L1320 66.5 L1324.5 70.5 V76 Z" fill="#b8b8b8"/></g><rect x="0" y="531" width="1478" height="21" fill="#050505" fill-opacity="0.75"/><text x="-3.8" y="547.6" fill="#fff" font-size="15.6" textLength="181.5" lengthAdjust="spacingAndGlyphs" font-family="Liberation Sans">erechnung: Kopf-Schulter</text><rect x="0" y="552" width="1562" height="4" fill="#222222"/><rect x="0" y="556" width="43.75" height="43.5" fill="#141414"/><rect x="43.75" y="556" width="59.75" height="43.5" fill="#000000"/><rect x="103.5" y="556" width="67.0" height="43.5" fill="#141414"/><rect x="170.5" y="556" width="62.5" height="43.5" fill="#000000"/><rect x="233" y="556" width="63.5" height="43.5" fill="#141414"/><rect x="296.5" y="556" width="66.5" height="43.5" fill="#000000"/><rect x="363" y="556" width="69.5" height="43.5" fill="#141414"/><rect x="432.5" y="556" width="63.0" height="43.5" fill="#000000"/><rect x="495.5" y="556" width="67.0" height="43.5" fill="#141414"/><rect x="562.5" y="556" width="65.75" height="43.5" fill="#000000"/><rect x="628.25" y="556" width="64.25" height="43.5" fill="#141414"/><rect x="692.5" y="556" width="67.0" height="43.5" fill="#000000"/><rect x="759.5" y="556" width="60.0" height="43.5" fill="#141414"/><rect x="819.5" y="556" width="59.75" height="43.5" fill="#000000"/><rect x="879.25" y="556" width="69.5" height="43.5" fill="#141414"/><rect x="948.75" y="556" width="66.75" height="43.5" fill="#000000"/><rect x="1015.5" y="556" width="63.0" height="43.5" fill="#141414"/><rect x="1078.5" y="556" width="65.79999999999995" height="43.5" fill="#000000"/><rect x="1144.3" y="556" width="67.40000000000009" height="43.5" fill="#141414"/><rect x="1211.7" y="556" width="66.0" height="43.5" fill="#000000"/><rect x="1277.7" y="556" width="73.0" height="43.5" fill="#141414"/><rect x="1350.7" y="556" width="93.29999999999995" height="43.5" fill="#000000"/><rect x="1444" y="556" width="34" height="43.5" fill="#141414"/><rect x="43.25" y="556" width="1" height="43.5" fill="#222"/><rect x="103.0" y="556" width="1" height="43.5" fill="#222"/><rect x="170.0" y="556" width="1" height="43.5" fill="#222"/><rect x="232.5" y="556" width="1" height="43.5" fill="#222"/><rect x="296.0" y="556" width="1" height="43.5" fill="#222"/><rect x="362.5" y="556" width="1" height="43.5" fill="#222"/><rect x="432.0" y="556" width="1" height="43.5" fill="#222"/><rect x="495.0" y="556" width="1" height="43.5" fill="#222"/><rect x="562.0" y="556" width="1" height="43.5" fill="#222"/><rect x="627.75" y="556" width="1" height="43.5" fill="#222"/><rect x="692.0" y="556" width="1" height="43.5" fill="#222"/><rect x="759.0" y="556" width="1" height="43.5" fill="#222"/><rect x="819.0" y="556" width="1" height="43.5" fill="#222"/><rect x="878.75" y="556" width="1" height="43.5" fill="#222"/><rect x="948.25" y="556" width="1" height="43.5" fill="#222"/><rect x="1015.0" y="556" width="1" height="43.5" fill="#222"/><rect x="1078.0" y="556" width="1" height="43.5" fill="#222"/><rect x="1143.8" y="556" width="1" height="43.5" fill="#222"/><rect x="1211.2" y="556" width="1" height="43.5" fill="#222"/><rect x="1277.2" y="556" width="1" height="43.5" fill="#222"/><rect x="1350.2" y="556" width="1" height="43.5" fill="#222"/><rect x="1443.5" y="556" width="1" height="43.5" fill="#222"/><rect x="0" y="599.5" width="1562" height="6" fill="#191919"/><rect x="0" y="605.5" width="1562" height="3.5" fill="#262626"/><rect x="0" y="609" width="43.75" height="44" fill="#141414"/><rect x="43.75" y="609" width="59.75" height="44" fill="#000000"/><rect x="103.5" y="609" width="67.0" height="44" fill="#141414"/><rect x="170.5" y="609" width="62.5" height="44" fill="#000000"/><rect x="233" y="609" width="63.5" height="44" fill="#141414"/><rect x="296.5" y="609" width="66.5" height="44" fill="#000000"/><rect x="363" y="609" width="69.5" height="44" fill="#141414"/><rect x="432.5" y="609" width="63.0" height="44" fill="#000000"/><rect x="495.5" y="609" width="67.0" height="44" fill="#141414"/><rect x="562.5" y="609" width="65.75" height="44" fill="#000000"/><rect x="628.25" y="609" width="64.25" height="44" fill="#141414"/><rect x="692.5" y="609" width="67.0" height="44" fill="#000000"/><rect x="759.5" y="609" width="60.0" height="44" fill="#141414"/><rect x="819.5" y="609" width="59.75" height="44" fill="#000000"/><rect x="879.25" y="609" width="69.5" height="44" fill="#141414"/><rect x="948.75" y="609" width="66.75" height="44" fill="#000000"/><rect x="1015.5" y="609" width="63.0" height="44" fill="#141414"/><rect x="1078.5" y="609" width="65.79999999999995" height="44" fill="#000000"/><rect x="1144.3" y="609" width="67.40000000000009" height="44" fill="#141414"/><rect x="1211.7" y="609" width="66.0" height="44" fill="#000000"/><rect x="1277.7" y="609" width="73.0" height="44" fill="#141414"/><rect x="1350.7" y="609" width="93.29999999999995" height="44" fill="#000000"/><rect x="1444" y="609" width="34" height="44" fill="#141414"/><rect x="43.25" y="609" width="1" height="44" fill="#222"/><rect x="103.0" y="609" width="1" height="44" fill="#222"/><rect x="170.0" y="609" width="1" height="44" fill="#222"/><rect x="232.5" y="609" width="1" height="44" fill="#222"/><rect x="296.0" y="609" width="1" height="44" fill="#222"/><rect x="362.5" y="609" width="1" height="44" fill="#222"/><rect x="432.0" y="609" width="1" height="44" fill="#222"/><rect x="495.0" y="609" width="1" height="44" fill="#222"/><rect x="562.0" y="609" width="1" height="44" fill="#222"/><rect x="627.75" y="609" width="1" height="44" fill="#222"/><rect x="692.0" y="609" width="1" height="44" fill="#222"/><rect x="759.0" y="609" width="1" height="44" fill="#222"/><rect x="819.0" y="609" width="1" height="44" fill="#222"/><rect x="878.75" y="609" width="1" height="44" fill="#222"/><rect x="948.25" y="609" width="1" height="44" fill="#222"/><rect x="1015.0" y="609" width="1" height="44" fill="#222"/><rect x="1078.0" y="609" width="1" height="44" fill="#222"/><rect x="1143.8" y="609" width="1" height="44" fill="#222"/><rect x="1211.2" y="609" width="1" height="44" fill="#222"/><rect x="1277.2" y="609" width="1" height="44" fill="#222"/><rect x="1350.2" y="609" width="1" height="44" fill="#222"/><rect x="1443.5" y="609" width="1" height="44" fill="#222"/><rect x="0" y="653" width="1562" height="6.5" fill="#191919"/><rect x="0" y="659.5" width="1562" height="3.5" fill="#262626"/><rect x="0" y="663" width="43.75" height="37" fill="#141414"/><rect x="43.75" y="663" width="59.75" height="37" fill="#000000"/><rect x="103.5" y="663" width="67.0" height="37" fill="#141414"/><rect x="170.5" y="663" width="62.5" height="37" fill="#000000"/><rect x="233" y="663" width="63.5" height="37" fill="#141414"/><rect x="296.5" y="663" width="66.5" height="37" fill="#000000"/><rect x="363" y="663" width="69.5" height="37" fill="#141414"/><rect x="432.5" y="663" width="63.0" height="37" fill="#000000"/><rect x="495.5" y="663" width="67.0" height="37" fill="#141414"/><rect x="562.5" y="663" width="65.75" height="37" fill="#000000"/><rect x="628.25" y="663" width="64.25" height="37" fill="#141414"/><rect x="692.5" y="663" width="67.0" height="37" fill="#000000"/><rect x="759.5" y="663" width="60.0" height="37" fill="#141414"/><rect x="819.5" y="663" width="59.75" height="37" fill="#000000"/><rect x="879.25" y="663" width="69.5" height="37" fill="#141414"/><rect x="948.75" y="663" width="66.75" height="37" fill="#000000"/><rect x="1015.5" y="663" width="63.0" height="37" fill="#141414"/><rect x="1078.5" y="663" width="65.79999999999995" height="37" fill="#000000"/><rect x="1144.3" y="663" width="67.40000000000009" height="37" fill="#141414"/><rect x="1211.7" y="663" width="66.0" height="37" fill="#000000"/><rect x="1277.7" y="663" width="73.0" height="37" fill="#141414"/><rect x="1350.7" y="663" width="93.29999999999995" height="37" fill="#000000"/><rect x="1444" y="663" width="34" height="37" fill="#141414"/><rect x="43.25" y="663" width="1" height="37" fill="#222"/><rect x="103.0" y="663" width="1" height="37" fill="#222"/><rect x="170.0" y="663" width="1" height="37" fill="#222"/><rect x="232.5" y="663" width="1" height="37" fill="#222"/><rect x="296.0" y="663" width="1" height="37" fill="#222"/><rect x="362.5" y="663" width="1" height="37" fill="#222"/><rect x="432.0" y="663" width="1" height="37" fill="#222"/><rect x="495.0" y="663" width="1" height="37" fill="#222"/><rect x="562.0" y="663" width="1" height="37" fill="#222"/><rect x="627.75" y="663" width="1" height="37" fill="#222"/><rect x="692.0" y="663" width="1" height="37" fill="#222"/><rect x="759.0" y="663" width="1" height="37" fill="#222"/><rect x="819.0" y="663" width="1" height="37" fill="#222"/><rect x="878.75" y="663" width="1" height="37" fill="#222"/><rect x="948.25" y="663" width="1" height="37" fill="#222"/><rect x="1015.0" y="663" width="1" height="37" fill="#222"/><rect x="1078.0" y="663" width="1" height="37" fill="#222"/><rect x="1143.8" y="663" width="1" height="37" fill="#222"/><rect x="1211.2" y="663" width="1" height="37" fill="#222"/><rect x="1277.2" y="663" width="1" height="37" fill="#222"/><rect x="1350.2" y="663" width="1" height="37" fill="#222"/><rect x="1443.5" y="663" width="1" height="37" fill="#222"/><rect x="0" y="565" width="1478" height="2" fill="#00bfff"/><line x1="0" y1="578.7" x2="1478" y2="578.7" stroke="#b0b0b0" stroke-width="1.5" stroke-dasharray="1.6 1.6"/><rect x="0" y="589.8" width="1478" height="2" fill="#ffa000"/><polyline points="2.2,568.5 5.2,566.2 8.1,562.1 11.1,562.6 14.0,562.0 17.0,563.0 20.0,565.6 22.9,566.2 25.9,567.6 28.8,568.1 31.8,566.2 34.8,563.5 37.7,561.7 40.7,562.0 43.6,564.0 46.6,565.8 49.6,566.3 52.5,564.4 55.5,562.5 58.4,562.0 61.4,562.0 64.4,561.9 67.3,562.1 70.3,561.4 73.2,563.5 76.2,568.0 79.2,572.7 82.1,575.9 85.1,579.6 88.0,582.1 91.0,585.8 94.0,588.0 96.9,591.1 99.9,594.8 102.8,594.6 105.8,594.6 108.8,592.9 111.7,591.1 114.7,590.0 117.6,589.5 120.6,591.8 123.6,593.2 126.5,595.1 129.5,594.9 132.4,593.2 135.4,592.2 138.4,590.3 141.3,589.0 144.3,585.3 147.2,583.4 150.2,581.3 153.2,579.3 156.1,580.2 159.1,576.9 162.0,576.9 165.0,575.6 168.0,575.6 170.9,571.1 173.9,569.9 176.8,566.3 179.8,563.9 182.8,562.6 185.7,562.9 188.7,561.6 191.6,564.8 194.6,568.2 197.6,572.2 200.5,572.3 203.5,573.2 206.4,571.8 209.4,570.7 212.4,572.1 215.3,572.0 218.3,570.7 221.2,567.7 224.2,565.1 227.2,562.8 230.1,561.2 233.1,563.0 236.0,564.4 239.0,567.7 242.0,565.6 244.9,563.2 247.9,563.5 250.8,562.1 253.8,566.0 256.8,569.4 259.7,572.4 262.7,571.4 265.6,570.5 268.6,568.5 271.6,567.2 274.5,567.7 277.5,570.7 280.4,573.7 283.4,579.1 286.4,582.0 289.3,579.1 292.3,575.3 295.2,572.5 298.2,569.4 301.2,571.1 304.1,572.8 307.1,575.0 310.0,576.1 313.0,574.7 316.0,573.6 318.9,574.2 321.9,575.9 324.8,578.2 327.8,580.4 330.8,581.7 333.7,583.5 336.7,585.2 339.6,586.4 342.6,586.0 345.6,583.4 348.5,579.9 351.5,581.6 354.4,585.0 357.4,586.8 360.4,587.9 363.3,589.2 366.3,589.3 369.2,589.5 372.2,588.9 375.2,587.3 378.1,584.2 381.1,580.6 384.0,581.2 387.0,583.4 390.0,584.8 392.9,582.3 395.9,581.0 398.8,581.6 401.8,583.0 404.8,582.1 407.7,577.2 410.7,570.6 413.6,566.3 416.6,563.9 419.6,562.0 422.5,561.8 425.5,562.6 428.4,562.8 431.4,562.3 434.4,561.1 437.3,560.4 440.3,560.7 443.2,560.8 446.2,560.0 449.2,561.7 452.1,564.1 455.1,566.3 458.0,567.1 461.0,565.9 464.0,564.2 466.9,564.9 469.9,567.7 472.8,572.3 475.8,575.8 478.8,578.7 481.7,582.9 484.7,587.0 487.6,590.3 490.6,591.0 493.6,587.0 496.5,581.4 499.5,582.1 502.4,585.5 505.4,588.6 508.4,590.9 511.3,593.0 514.3,593.5 517.2,595.2 520.2,592.4 523.2,589.4 526.1,586.2 529.1,583.5 532.0,581.5 535.0,579.3 538.0,582.3 540.9,584.5 543.9,586.4 546.8,589.8 549.8,583.0 552.8,578.4 555.7,570.7 558.7,569.0 561.6,574.3 564.6,577.8 567.6,579.2 570.5,579.9 573.5,578.5 576.4,577.1 579.4,574.2 582.4,569.4 585.3,564.7 588.3,561.6 591.2,563.2 594.2,564.2 597.2,565.8 600.1,565.0 603.1,563.0 606.0,562.0 609.0,559.7 612.0,561.6 614.9,560.8 617.9,562.4 620.8,561.9 623.8,563.4 626.8,563.0 629.7,563.4 632.7,563.0 635.6,561.6 638.6,560.8 641.6,560.2 644.5,562.5 647.5,562.1 650.4,562.8 653.4,562.1 656.4,561.8 659.3,559.9 662.3,561.3 665.2,561.4 668.2,562.4 671.2,561.5 674.1,561.7 677.1,561.8 680.0,563.0 683.0,567.3 686.0,570.3 688.9,574.7 691.9,570.9 694.8,566.6 697.8,563.6 700.8,565.1 703.7,565.3 706.7,566.9 709.6,570.1 712.6,571.5 715.6,574.8 718.5,577.0 721.5,572.7 724.4,568.7 727.4,564.3 730.4,563.3 733.3,563.3 736.3,564.2 739.2,563.0 742.2,563.3 745.2,562.8 748.1,562.0 751.1,562.0 754.0,560.3 757.0,560.4 760.0,559.5 762.9,560.0 765.9,560.8 768.8,561.5 771.8,562.3 774.8,565.3 777.7,568.7 780.7,570.5 783.6,571.8 786.6,569.7 789.6,569.3 792.5,571.6 795.5,572.5 798.4,575.0 801.4,579.3 804.4,582.0 807.3,585.5 810.3,588.1 813.2,588.8 816.2,586.6 819.2,583.0 822.1,581.0 825.1,577.4 828.0,574.3 831.0,569.7 834.0,566.6 836.9,563.6 839.9,561.5 842.8,560.8 845.8,562.7 848.8,562.6 851.7,561.4 854.7,561.7 857.6,559.9 860.6,560.0 863.6,560.6 866.5,561.1 869.5,564.7 872.4,567.2 875.4,570.7 878.4,575.9 881.3,579.2 884.3,584.0 887.2,584.9 890.2,586.0 893.2,584.4 896.1,581.3 899.1,577.3 902.0,572.3 905.0,567.1 908.0,562.4 910.9,562.5 913.9,564.5 916.8,565.9 919.8,566.8 922.8,565.6 925.7,568.3 928.7,571.4 931.6,573.5 934.6,576.3 937.6,580.9 940.5,578.0 943.5,573.9 946.4,569.5 949.4,567.0 952.4,565.4 955.3,564.9 958.3,564.4 961.2,566.5 964.2,567.1 967.2,569.1 970.1,566.7 973.1,563.5 976.0,562.8 979.0,563.2 982.0,564.7 984.9,567.8 987.9,573.2 990.8,582.3 993.8,591.3 996.8,593.0 999.7,595.2 1002.7,591.2 1005.6,587.9 1008.6,585.4 1011.6,584.1 1014.5,583.2 1017.5,581.6 1020.4,580.8 1023.4,579.6 1026.4,578.5 1029.3,573.1 1032.3,571.1 1035.2,568.4 1038.2,571.9 1041.2,577.8 1044.1,582.7 1047.1,586.4 1050.0,591.3 1053.0,592.6 1056.0,591.0 1058.9,588.4 1061.9,587.3 1064.8,588.3 1067.8,588.2 1070.8,588.4 1073.7,588.4 1076.7,589.4 1079.6,589.2 1082.6,589.4 1085.6,587.2 1088.5,585.0 1091.5,584.5 1094.4,585.6 1097.4,584.5 1100.4,584.7 1103.3,581.9 1106.3,578.3 1109.2,573.2 1112.2,568.0 1115.2,566.8 1118.1,569.5 1121.1,573.8 1124.0,580.3 1127.0,585.8 1130.0,588.6 1132.9,587.3 1135.9,585.9 1138.8,582.3 1141.8,581.2 1144.8,578.4 1147.7,580.5 1150.7,582.1 1153.6,582.7 1156.6,581.5 1159.6,581.3 1162.5,580.4 1165.5,578.6 1168.4,580.7 1171.4,582.7 1174.4,586.4 1177.3,589.3 1180.3,591.8 1183.2,594.9 1186.2,594.7 1189.2,590.0 1192.1,587.2 1195.1,582.5 1198.0,577.9 1201.0,572.6 1204.0,567.0 1206.9,565.0 1209.9,563.7 1212.8,562.4 1215.8,564.6 1218.8,566.9 1221.7,564.8 1224.7,563.6 1227.6,561.3 1230.6,560.9 1233.6,562.1 1236.5,562.0 1239.5,561.5 1242.4,563.2 1245.4,564.0 1248.4,566.2 1251.3,568.9 1254.3,566.4 1257.2,563.6 1260.2,562.4 1263.2,563.1 1266.1,564.3 1269.1,565.3 1272.0,567.3 1275.0,569.8 1278.0,572.6 1280.9,571.4 1283.9,570.5 1286.8,566.5 1289.8,562.7 1292.8,570.5 1295.7,578.4 1298.7,586.2 1301.6,587.0 1304.6,588.8 1307.6,585.8 1310.5,584.3 1313.5,583.1 1316.4,582.7 1318.4,586.5" fill="none" stroke="#ff0000" stroke-width="2" stroke-linejoin="round"/><polyline points="0.0,567.9 3.0,565.6 5.9,561.5 8.9,562.0 11.8,561.4 14.8,562.4 17.8,565.0 20.7,565.6 23.7,567.0 26.6,567.5 29.6,565.6 32.6,562.9 35.5,561.1 38.5,561.4 41.4,563.4 44.4,565.2 47.4,565.7 50.3,563.8 53.3,561.9 56.2,561.4 59.2,561.4 62.2,561.3 65.1,561.5 68.1,560.8 71.0,562.9 74.0,567.4 77.0,572.1 79.9,575.3 82.9,579.0 85.8,581.5 88.8,585.2 91.8,587.4 94.7,590.5 97.7,594.2 100.6,594.0 103.6,594.0 106.6,592.3 109.5,590.5 112.5,589.4 115.4,588.9 118.4,591.2 121.4,592.6 124.3,594.5 127.3,594.3 130.2,592.6 133.2,591.6 136.2,589.7 139.1,588.4 142.1,584.7 145.0,582.8 148.0,580.7 151.0,578.7 153.9,579.6 156.9,576.3 159.8,576.3 162.8,575.0 165.8,575.0 168.7,570.5 171.7,569.3 174.6,565.7 177.6,563.3 180.6,562.0 183.5,562.3 186.5,561.0 189.4,564.2 192.4,567.6 195.4,571.6 198.3,571.7 201.3,572.6 204.2,571.2 207.2,570.1 210.2,571.5 213.1,571.4 216.1,570.1 219.0,567.1 222.0,564.5 225.0,562.2 227.9,560.6 230.9,562.4 233.8,563.8 236.8,567.1 239.8,565.0 242.7,562.6 245.7,562.9 248.6,561.5 251.6,565.4 254.6,568.8 257.5,571.8 260.5,570.8 263.4,569.9 266.4,567.9 269.4,566.6 272.3,567.1 275.3,570.1 278.2,573.1 281.2,578.5 284.2,581.4 287.1,578.5 290.1,574.7 293.0,571.9 296.0,568.8 299.0,570.5 301.9,572.2 304.9,574.4 307.8,575.5 310.8,574.1 313.8,573.0 316.7,573.6 319.7,575.3 322.6,577.6 325.6,579.8 328.6,581.1 331.5,582.9 334.5,584.6 337.4,585.8 340.4,585.4 343.4,582.8 346.3,579.3 349.3,581.0 352.2,584.4 355.2,586.2 358.2,587.3 361.1,588.6 364.1,588.7 367.0,588.9 370.0,588.3 373.0,586.7 375.9,583.6 378.9,580.0 381.8,580.6 384.8,582.8 387.8,584.2 390.7,581.7 393.7,580.4 396.6,581.0 399.6,582.4 402.6,581.5 405.5,576.6 408.5,570.0 411.4,565.7 414.4,563.3 417.4,561.4 420.3,561.2 423.3,562.0 426.2,562.2 429.2,561.7 432.2,560.5 435.1,559.8 438.1,560.1 441.0,560.2 444.0,559.4 447.0,561.1 449.9,563.5 452.9,565.7 455.8,566.5 458.8,565.3 461.8,563.6 464.7,564.3 467.7,567.1 470.6,571.7 473.6,575.2 476.6,578.1 479.5,582.3 482.5,586.4 485.4,589.7 488.4,590.4 491.4,586.4 494.3,580.8 497.3,581.5 500.2,584.9 503.2,588.0 506.2,590.3 509.1,592.4 512.1,592.9 515.0,594.6 518.0,591.8 521.0,588.8 523.9,585.6 526.9,582.9 529.8,580.9 532.8,578.7 535.8,581.7 538.7,583.9 541.7,585.8 544.6,589.2 547.6,582.4 550.6,577.8 553.5,570.1 556.5,568.4 559.4,573.7 562.4,577.2 565.4,578.6 568.3,579.3 571.3,577.9 574.2,576.5 577.2,573.6 580.2,568.8 583.1,564.1 586.1,561.0 589.0,562.6 592.0,563.6 595.0,565.2 597.9,564.4 600.9,562.4 603.8,561.4 606.8,559.1 609.8,561.0 612.7,560.2 615.7,561.8 618.6,561.3 621.6,562.8 624.6,562.4 627.5,562.8 630.5,562.4 633.4,561.0 636.4,560.2 639.4,559.6 642.3,561.9 645.3,561.5 648.2,562.2 651.2,561.5 654.2,561.2 657.1,559.3 660.1,560.7 663.0,560.8 666.0,561.8 669.0,560.9 671.9,561.1 674.9,561.2 677.8,562.4 680.8,566.7 683.8,569.7 686.7,574.1 689.7,570.3 692.6,566.0 695.6,563.0 698.6,564.5 701.5,564.7 704.5,566.3 707.4,569.5 710.4,570.9 713.4,574.2 716.3,576.4 719.3,572.1 722.2,568.1 725.2,563.7 728.2,562.7 731.1,562.7 734.1,563.6 737.0,562.4 740.0,562.7 743.0,562.2 745.9,561.4 748.9,561.4 751.8,559.7 754.8,559.8 757.8,558.9 760.7,559.4 763.7,560.2 766.6,560.9 769.6,561.7 772.6,564.7 775.5,568.1 778.5,569.9 781.4,571.2 784.4,569.1 787.4,568.7 790.3,571.0 793.3,571.9 796.2,574.4 799.2,578.7 802.2,581.4 805.1,584.9 808.1,587.5 811.0,588.2 814.0,586.0 817.0,582.4 819.9,580.4 822.9,576.8 825.8,573.7 828.8,569.1 831.8,566.0 834.7,563.0 837.7,560.9 840.6,560.2 843.6,562.1 846.6,562.0 849.5,560.8 852.5,561.1 855.4,559.3 858.4,559.4 861.4,560.0 864.3,560.5 867.3,564.1 870.2,566.6 873.2,570.1 876.2,575.3 879.1,578.6 882.1,583.4 885.0,584.3 888.0,585.4 891.0,583.8 893.9,580.7 896.9,576.7 899.8,571.7 902.8,566.5 905.8,561.8 908.7,561.9 911.7,563.9 914.6,565.3 917.6,566.2 920.6,565.0 923.5,567.7 926.5,570.8 929.4,572.9 932.4,575.7 935.4,580.3 938.3,577.4 941.3,573.3 944.2,568.9 947.2,566.4 950.2,564.8 953.1,564.3 956.1,563.8 959.0,565.9 962.0,566.5 965.0,568.5 967.9,566.1 970.9,562.9 973.8,562.2 976.8,562.6 979.8,564.1 982.7,567.2 985.7,572.6 988.6,581.7 991.6,590.7 994.6,592.4 997.5,594.6 1000.5,590.6 1003.4,587.3 1006.4,584.8 1009.4,583.5 1012.3,582.6 1015.3,581.0 1018.2,580.2 1021.2,579.0 1024.2,577.9 1027.1,572.5 1030.1,570.5 1033.0,567.8 1036.0,571.3 1039.0,577.2 1041.9,582.1 1044.9,585.8 1047.8,590.7 1050.8,592.0 1053.8,590.4 1056.7,587.8 1059.7,586.7 1062.6,587.7 1065.6,587.6 1068.6,587.8 1071.5,587.8 1074.5,588.8 1077.4,588.6 1080.4,588.8 1083.4,586.6 1086.3,584.4 1089.3,583.9 1092.2,585.0 1095.2,583.9 1098.2,584.1 1101.1,581.3 1104.1,577.7 1107.0,572.6 1110.0,567.4 1113.0,566.2 1115.9,568.9 1118.9,573.2 1121.8,579.7 1124.8,585.2 1127.8,588.0 1130.7,586.7 1133.7,585.3 1136.6,581.7 1139.6,580.6 1142.6,577.8 1145.5,579.9 1148.5,581.5 1151.4,582.1 1154.4,580.9 1157.4,580.7 1160.3,579.8 1163.3,578.0 1166.2,580.1 1169.2,582.1 1172.2,585.8 1175.1,588.7 1178.1,591.2 1181.0,594.3 1184.0,594.1 1187.0,589.4 1189.9,586.6 1192.9,581.9 1195.8,577.3 1198.8,572.0 1201.8,566.4 1204.7,564.4 1207.7,563.1 1210.6,561.8 1213.6,564.0 1216.6,566.3 1219.5,564.2 1222.5,563.0 1225.4,560.7 1228.4,560.3 1231.4,561.5 1234.3,561.4 1237.3,560.9 1240.2,562.6 1243.2,563.4 1246.2,565.6 1249.1,568.3 1252.1,565.8 1255.0,563.0 1258.0,561.8 1261.0,562.5 1263.9,563.7 1266.9,564.7 1269.8,566.7 1272.8,569.2 1275.8,572.0 1278.7,570.8 1281.7,569.9 1284.6,565.9 1287.6,562.1 1290.6,569.9 1293.5,577.8 1296.5,585.6 1299.4,586.4 1302.4,588.2 1305.4,585.2 1308.3,583.7 1311.3,582.5 1314.2,582.1 1316.2,585.9" fill="none" stroke="#ffffff" stroke-width="1.5" stroke-linejoin="round"/><polygon points="0.0,619.9 3.0,620.3 5.9,622.4 8.9,620.2 11.8,623.6 14.8,623.1 17.8,628.0 20.7,629.1 23.7,631.5 26.6,626.9 29.6,624.7 32.6,622.7 35.5,621.1 38.5,622.1 41.4,623.1 44.4,626.1 47.4,626.7 50.3,623.7 53.3,622.2 56.2,623.8 59.2,621.1 62.2,619.8 65.1,620.8 68.1,621.6 71.0,625.6 74.0,631.4 77.0,630.7 79.9,631.9 82.9,633.1 85.8,633.9 88.8,635.5 91.8,636.1 94.7,638.7 97.7,641.8 100.6,637.5 103.6,637.8 106.6,639.4 109.5,641.9 112.5,636.1 115.4,633.0 118.4,641.6 121.4,642.9 124.3,644.5 127.3,646.8 130.2,647.6 133.2,648.6 136.2,646.7 139.1,646.3 142.1,643.4 145.0,638.9 148.0,637.3 151.0,637.1 153.9,635.7 156.9,634.1 159.8,635.1 162.8,636.8 165.8,636.2 168.7,636.4 171.7,635.9 174.6,633.6 177.6,631.6 180.6,627.8 183.5,631.1 186.5,629.7 189.4,631.8 192.4,635.4 195.4,634.3 198.3,633.4 201.3,633.8 204.2,635.1 207.2,634.0 210.2,633.2 213.1,630.8 216.1,626.3 219.0,626.4 222.0,627.1 225.0,622.0 227.9,619.8 230.9,622.3 233.8,623.0 236.8,621.6 239.8,618.4 242.7,621.2 245.7,618.6 248.6,625.0 251.6,630.6 254.6,627.1 257.5,625.9 260.5,625.6 263.4,629.4 266.4,627.3 269.4,626.3 272.3,628.5 275.3,632.3 278.2,633.4 281.2,633.5 284.2,632.5 287.1,629.3 290.1,630.3 293.0,629.6 296.0,630.2 299.0,628.8 301.9,628.2 304.9,628.9 307.8,626.8 310.8,627.0 313.8,626.8 316.7,627.8 319.7,633.8 322.6,634.2 325.6,634.2 328.6,633.0 331.5,633.4 334.5,633.5 337.4,634.3 340.4,630.2 343.4,629.2 346.3,632.8 349.3,636.1 352.2,636.7 355.2,637.9 358.2,638.0 361.1,636.0 364.1,636.9 367.0,639.2 370.0,636.6 373.0,635.4 375.9,632.0 378.9,631.2 381.8,634.3 384.8,633.6 387.8,633.7 390.7,632.5 393.7,634.4 396.6,634.1 399.6,636.9 402.6,632.9 405.5,628.6 408.5,626.6 411.4,625.1 414.4,620.8 417.4,616.1 420.3,616.4 423.3,614.7 426.2,615.7 429.2,617.9 432.2,616.9 435.1,615.5 438.1,616.6 441.0,617.0 444.0,620.5 447.0,625.4 449.9,627.0 452.9,628.8 455.8,627.0 458.8,624.1 461.8,623.1 464.7,626.9 467.7,626.6 470.6,628.6 473.6,631.1 476.6,630.4 479.5,630.9 482.5,633.3 485.4,631.4 488.4,633.3 491.4,630.1 494.3,628.0 497.3,629.4 500.2,634.6 503.2,636.7 506.2,637.0 509.1,638.6 512.1,641.3 515.0,640.3 518.0,637.3 521.0,638.0 523.9,633.3 526.9,632.3 529.8,633.0 532.8,633.7 535.8,635.4 538.7,636.9 541.7,637.7 544.6,639.5 547.6,634.3 550.6,633.4 553.5,632.4 556.5,633.2 559.4,632.6 562.4,634.0 565.4,633.8 568.3,633.1 571.3,632.7 574.2,631.0 577.2,628.2 580.2,627.2 583.1,624.4 586.1,624.6 589.0,627.8 592.0,628.1 595.0,629.6 597.9,626.1 600.9,623.5 603.8,620.4 606.8,619.3 609.8,621.1 612.7,622.2 615.7,619.6 618.6,621.6 621.6,624.2 624.6,623.6 627.5,621.8 630.5,621.8 633.4,619.2 636.4,617.9 639.4,617.3 642.3,618.9 645.3,618.3 648.2,617.7 651.2,616.9 654.2,617.1 657.1,616.5 660.1,615.7 663.0,614.4 666.0,614.8 669.0,614.3 671.9,614.9 674.9,615.5 677.8,616.3 680.8,617.5 683.8,630.2 686.7,629.5 689.7,623.4 692.6,625.0 695.6,623.7 698.6,625.0 701.5,627.3 704.5,627.4 707.4,629.2 710.4,633.6 713.4,632.2 716.3,631.5 719.3,627.6 722.2,624.1 725.2,621.6 728.2,621.5 731.1,620.5 734.1,619.2 737.0,619.0 740.0,617.8 743.0,617.5 745.9,615.9 748.9,616.0 751.8,614.9 754.8,614.9 757.8,614.5 760.7,613.1 763.7,614.8 766.6,612.1 769.6,612.8 772.6,621.4 775.5,626.7 778.5,624.6 781.4,623.0 784.4,625.0 787.4,629.3 790.3,628.3 793.3,628.2 796.2,633.0 799.2,635.3 802.2,634.3 805.1,632.2 808.1,634.1 811.0,635.0 814.0,631.1 817.0,631.9 819.9,629.6 822.9,628.0 825.8,629.2 828.8,626.4 831.8,625.6 834.7,622.3 837.7,621.4 840.6,623.8 843.6,622.6 846.6,621.4 849.5,621.0 852.5,620.4 855.4,619.4 858.4,619.3 861.4,618.7 864.3,619.8 867.3,629.8 870.2,629.8 873.2,630.7 876.2,631.5 879.1,633.6 882.1,629.7 885.0,628.8 888.0,631.1 891.0,630.5 893.9,630.2 896.9,627.6 899.8,623.5 902.8,625.8 905.8,626.1 908.7,624.5 911.7,626.4 914.6,624.6 917.6,623.3 920.6,625.5 923.5,628.1 926.5,630.7 929.4,631.1 932.4,634.4 935.4,632.9 938.3,631.2 941.3,628.5 944.2,626.7 947.2,625.8 950.2,627.9 953.1,627.9 956.1,627.7 959.0,629.7 962.0,631.5 965.0,629.4 967.9,628.6 970.9,624.9 973.8,623.3 976.8,623.4 979.8,626.9 982.7,630.4 985.7,635.0 988.6,636.6 991.6,637.9 994.6,639.1 997.5,640.6 1000.5,638.0 1003.4,636.7 1006.4,636.2 1009.4,635.4 1012.3,634.8 1015.3,632.5 1018.2,636.4 1021.2,632.9 1024.2,632.5 1027.1,631.6 1030.1,632.9 1033.0,633.0 1036.0,631.7 1039.0,634.9 1041.9,639.4 1044.9,640.5 1047.8,641.9 1050.8,645.9 1053.8,646.1 1056.7,643.9 1059.7,640.0 1062.6,640.6 1065.6,640.5 1068.6,640.8 1071.5,641.8 1074.5,641.3 1077.4,640.6 1080.4,639.8 1083.4,637.4 1086.3,637.5 1089.3,639.3 1092.2,639.3 1095.2,638.6 1098.2,637.4 1101.1,634.7 1104.1,633.5 1107.0,633.6 1110.0,634.5 1113.0,638.2 1115.9,639.5 1118.9,640.8 1121.8,641.1 1124.8,638.1 1127.8,638.7 1130.7,635.5 1133.7,634.8 1136.6,633.6 1139.6,634.3 1142.6,634.6 1145.5,637.6 1148.5,636.2 1151.4,636.0 1154.4,635.6 1157.4,635.8 1160.3,636.0 1163.3,636.5 1166.2,637.0 1169.2,636.4 1172.2,639.1 1175.1,639.2 1178.1,639.4 1181.0,639.9 1184.0,638.8 1187.0,635.2 1189.9,635.1 1192.9,633.2 1195.8,627.5 1198.8,625.4 1201.8,624.8 1204.7,623.1 1207.7,622.8 1210.6,623.7 1213.6,627.3 1216.6,626.3 1219.5,625.0 1222.5,623.7 1225.4,622.8 1228.4,620.0 1231.4,622.4 1234.3,623.7 1237.3,624.2 1240.2,624.8 1243.2,626.0 1246.2,626.6 1249.1,624.0 1252.1,622.9 1255.0,622.0 1258.0,623.3 1261.0,624.7 1263.9,624.0 1266.9,627.6 1269.8,626.8 1272.8,627.1 1275.8,628.6 1278.7,628.3 1281.7,626.6 1284.6,625.1 1287.6,622.7 1290.6,634.1 1293.5,634.6 1296.5,635.2 1299.4,636.0 1302.4,635.3 1305.4,632.0 1308.3,630.8 1311.3,631.4 1314.2,630.6 1316.2,638.0 1316.2,624.4 0,624.4" fill="#155a78" clip-path="url(#p2t)"/><polygon points="0.0,619.9 3.0,620.3 5.9,622.4 8.9,620.2 11.8,623.6 14.8,623.1 17.8,628.0 20.7,629.1 23.7,631.5 26.6,626.9 29.6,624.7 32.6,622.7 35.5,621.1 38.5,622.1 41.4,623.1 44.4,626.1 47.4,626.7 50.3,623.7 53.3,622.2 56.2,623.8 59.2,621.1 62.2,619.8 65.1,620.8 68.1,621.6 71.0,625.6 74.0,631.4 77.0,630.7 79.9,631.9 82.9,633.1 85.8,633.9 88.8,635.5 91.8,636.1 94.7,638.7 97.7,641.8 100.6,637.5 103.6,637.8 106.6,639.4 109.5,641.9 112.5,636.1 115.4,633.0 118.4,641.6 121.4,642.9 124.3,644.5 127.3,646.8 130.2,647.6 133.2,648.6 136.2,646.7 139.1,646.3 142.1,643.4 145.0,638.9 148.0,637.3 151.0,637.1 153.9,635.7 156.9,634.1 159.8,635.1 162.8,636.8 165.8,636.2 168.7,636.4 171.7,635.9 174.6,633.6 177.6,631.6 180.6,627.8 183.5,631.1 186.5,629.7 189.4,631.8 192.4,635.4 195.4,634.3 198.3,633.4 201.3,633.8 204.2,635.1 207.2,634.0 210.2,633.2 213.1,630.8 216.1,626.3 219.0,626.4 222.0,627.1 225.0,622.0 227.9,619.8 230.9,622.3 233.8,623.0 236.8,621.6 239.8,618.4 242.7,621.2 245.7,618.6 248.6,625.0 251.6,630.6 254.6,627.1 257.5,625.9 260.5,625.6 263.4,629.4 266.4,627.3 269.4,626.3 272.3,628.5 275.3,632.3 278.2,633.4 281.2,633.5 284.2,632.5 287.1,629.3 290.1,630.3 293.0,629.6 296.0,630.2 299.0,628.8 301.9,628.2 304.9,628.9 307.8,626.8 310.8,627.0 313.8,626.8 316.7,627.8 319.7,633.8 322.6,634.2 325.6,634.2 328.6,633.0 331.5,633.4 334.5,633.5 337.4,634.3 340.4,630.2 343.4,629.2 346.3,632.8 349.3,636.1 352.2,636.7 355.2,637.9 358.2,638.0 361.1,636.0 364.1,636.9 367.0,639.2 370.0,636.6 373.0,635.4 375.9,632.0 378.9,631.2 381.8,634.3 384.8,633.6 387.8,633.7 390.7,632.5 393.7,634.4 396.6,634.1 399.6,636.9 402.6,632.9 405.5,628.6 408.5,626.6 411.4,625.1 414.4,620.8 417.4,616.1 420.3,616.4 423.3,614.7 426.2,615.7 429.2,617.9 432.2,616.9 435.1,615.5 438.1,616.6 441.0,617.0 444.0,620.5 447.0,625.4 449.9,627.0 452.9,628.8 455.8,627.0 458.8,624.1 461.8,623.1 464.7,626.9 467.7,626.6 470.6,628.6 473.6,631.1 476.6,630.4 479.5,630.9 482.5,633.3 485.4,631.4 488.4,633.3 491.4,630.1 494.3,628.0 497.3,629.4 500.2,634.6 503.2,636.7 506.2,637.0 509.1,638.6 512.1,641.3 515.0,640.3 518.0,637.3 521.0,638.0 523.9,633.3 526.9,632.3 529.8,633.0 532.8,633.7 535.8,635.4 538.7,636.9 541.7,637.7 544.6,639.5 547.6,634.3 550.6,633.4 553.5,632.4 556.5,633.2 559.4,632.6 562.4,634.0 565.4,633.8 568.3,633.1 571.3,632.7 574.2,631.0 577.2,628.2 580.2,627.2 583.1,624.4 586.1,624.6 589.0,627.8 592.0,628.1 595.0,629.6 597.9,626.1 600.9,623.5 603.8,620.4 606.8,619.3 609.8,621.1 612.7,622.2 615.7,619.6 618.6,621.6 621.6,624.2 624.6,623.6 627.5,621.8 630.5,621.8 633.4,619.2 636.4,617.9 639.4,617.3 642.3,618.9 645.3,618.3 648.2,617.7 651.2,616.9 654.2,617.1 657.1,616.5 660.1,615.7 663.0,614.4 666.0,614.8 669.0,614.3 671.9,614.9 674.9,615.5 677.8,616.3 680.8,617.5 683.8,630.2 686.7,629.5 689.7,623.4 692.6,625.0 695.6,623.7 698.6,625.0 701.5,627.3 704.5,627.4 707.4,629.2 710.4,633.6 713.4,632.2 716.3,631.5 719.3,627.6 722.2,624.1 725.2,621.6 728.2,621.5 731.1,620.5 734.1,619.2 737.0,619.0 740.0,617.8 743.0,617.5 745.9,615.9 748.9,616.0 751.8,614.9 754.8,614.9 757.8,614.5 760.7,613.1 763.7,614.8 766.6,612.1 769.6,612.8 772.6,621.4 775.5,626.7 778.5,624.6 781.4,623.0 784.4,625.0 787.4,629.3 790.3,628.3 793.3,628.2 796.2,633.0 799.2,635.3 802.2,634.3 805.1,632.2 808.1,634.1 811.0,635.0 814.0,631.1 817.0,631.9 819.9,629.6 822.9,628.0 825.8,629.2 828.8,626.4 831.8,625.6 834.7,622.3 837.7,621.4 840.6,623.8 843.6,622.6 846.6,621.4 849.5,621.0 852.5,620.4 855.4,619.4 858.4,619.3 861.4,618.7 864.3,619.8 867.3,629.8 870.2,629.8 873.2,630.7 876.2,631.5 879.1,633.6 882.1,629.7 885.0,628.8 888.0,631.1 891.0,630.5 893.9,630.2 896.9,627.6 899.8,623.5 902.8,625.8 905.8,626.1 908.7,624.5 911.7,626.4 914.6,624.6 917.6,623.3 920.6,625.5 923.5,628.1 926.5,630.7 929.4,631.1 932.4,634.4 935.4,632.9 938.3,631.2 941.3,628.5 944.2,626.7 947.2,625.8 950.2,627.9 953.1,627.9 956.1,627.7 959.0,629.7 962.0,631.5 965.0,629.4 967.9,628.6 970.9,624.9 973.8,623.3 976.8,623.4 979.8,626.9 982.7,630.4 985.7,635.0 988.6,636.6 991.6,637.9 994.6,639.1 997.5,640.6 1000.5,638.0 1003.4,636.7 1006.4,636.2 1009.4,635.4 1012.3,634.8 1015.3,632.5 1018.2,636.4 1021.2,632.9 1024.2,632.5 1027.1,631.6 1030.1,632.9 1033.0,633.0 1036.0,631.7 1039.0,634.9 1041.9,639.4 1044.9,640.5 1047.8,641.9 1050.8,645.9 1053.8,646.1 1056.7,643.9 1059.7,640.0 1062.6,640.6 1065.6,640.5 1068.6,640.8 1071.5,641.8 1074.5,641.3 1077.4,640.6 1080.4,639.8 1083.4,637.4 1086.3,637.5 1089.3,639.3 1092.2,639.3 1095.2,638.6 1098.2,637.4 1101.1,634.7 1104.1,633.5 1107.0,633.6 1110.0,634.5 1113.0,638.2 1115.9,639.5 1118.9,640.8 1121.8,641.1 1124.8,638.1 1127.8,638.7 1130.7,635.5 1133.7,634.8 1136.6,633.6 1139.6,634.3 1142.6,634.6 1145.5,637.6 1148.5,636.2 1151.4,636.0 1154.4,635.6 1157.4,635.8 1160.3,636.0 1163.3,636.5 1166.2,637.0 1169.2,636.4 1172.2,639.1 1175.1,639.2 1178.1,639.4 1181.0,639.9 1184.0,638.8 1187.0,635.2 1189.9,635.1 1192.9,633.2 1195.8,627.5 1198.8,625.4 1201.8,624.8 1204.7,623.1 1207.7,622.8 1210.6,623.7 1213.6,627.3 1216.6,626.3 1219.5,625.0 1222.5,623.7 1225.4,622.8 1228.4,620.0 1231.4,622.4 1234.3,623.7 1237.3,624.2 1240.2,624.8 1243.2,626.0 1246.2,626.6 1249.1,624.0 1252.1,622.9 1255.0,622.0 1258.0,623.3 1261.0,624.7 1263.9,624.0 1266.9,627.6 1269.8,626.8 1272.8,627.1 1275.8,628.6 1278.7,628.3 1281.7,626.6 1284.6,625.1 1287.6,622.7 1290.6,634.1 1293.5,634.6 1296.5,635.2 1299.4,636.0 1302.4,635.3 1305.4,632.0 1308.3,630.8 1311.3,631.4 1314.2,630.6 1316.2,638.0 1316.2,641.6 0,641.6" fill="#8a5a0a" clip-path="url(#p2b)"/><rect x="0" y="623.4" width="1478" height="2" fill="#00bfff"/><line x1="0" y1="632.8" x2="1478" y2="632.8" stroke="#b0b0b0" stroke-width="1.5" stroke-dasharray="1.6 1.6"/><rect x="0" y="640.8" width="1478" height="2" fill="#ffa000"/><polyline points="0.0,619.9 3.0,620.3 5.9,622.4 8.9,620.2 11.8,623.6 14.8,623.1 17.8,628.0 20.7,629.1 23.7,631.5 26.6,626.9 29.6,624.7 32.6,622.7 35.5,621.1 38.5,622.1 41.4,623.1 44.4,626.1 47.4,626.7 50.3,623.7 53.3,622.2 56.2,623.8 59.2,621.1 62.2,619.8 65.1,620.8 68.1,621.6 71.0,625.6 74.0,631.4 77.0,630.7 79.9,631.9 82.9,633.1 85.8,633.9 88.8,635.5 91.8,636.1 94.7,638.7 97.7,641.8 100.6,637.5 103.6,637.8 106.6,639.4 109.5,641.9 112.5,636.1 115.4,633.0 118.4,641.6 121.4,642.9 124.3,644.5 127.3,646.8 130.2,647.6 133.2,648.6 136.2,646.7 139.1,646.3 142.1,643.4 145.0,638.9 148.0,637.3 151.0,637.1 153.9,635.7 156.9,634.1 159.8,635.1 162.8,636.8 165.8,636.2 168.7,636.4 171.7,635.9 174.6,633.6 177.6,631.6 180.6,627.8 183.5,631.1 186.5,629.7 189.4,631.8 192.4,635.4 195.4,634.3 198.3,633.4 201.3,633.8 204.2,635.1 207.2,634.0 210.2,633.2 213.1,630.8 216.1,626.3 219.0,626.4 222.0,627.1 225.0,622.0 227.9,619.8 230.9,622.3 233.8,623.0 236.8,621.6 239.8,618.4 242.7,621.2 245.7,618.6 248.6,625.0 251.6,630.6 254.6,627.1 257.5,625.9 260.5,625.6 263.4,629.4 266.4,627.3 269.4,626.3 272.3,628.5 275.3,632.3 278.2,633.4 281.2,633.5 284.2,632.5 287.1,629.3 290.1,630.3 293.0,629.6 296.0,630.2 299.0,628.8 301.9,628.2 304.9,628.9 307.8,626.8 310.8,627.0 313.8,626.8 316.7,627.8 319.7,633.8 322.6,634.2 325.6,634.2 328.6,633.0 331.5,633.4 334.5,633.5 337.4,634.3 340.4,630.2 343.4,629.2 346.3,632.8 349.3,636.1 352.2,636.7 355.2,637.9 358.2,638.0 361.1,636.0 364.1,636.9 367.0,639.2 370.0,636.6 373.0,635.4 375.9,632.0 378.9,631.2 381.8,634.3 384.8,633.6 387.8,633.7 390.7,632.5 393.7,634.4 396.6,634.1 399.6,636.9 402.6,632.9 405.5,628.6 408.5,626.6 411.4,625.1 414.4,620.8 417.4,616.1 420.3,616.4 423.3,614.7 426.2,615.7 429.2,617.9 432.2,616.9 435.1,615.5 438.1,616.6 441.0,617.0 444.0,620.5 447.0,625.4 449.9,627.0 452.9,628.8 455.8,627.0 458.8,624.1 461.8,623.1 464.7,626.9 467.7,626.6 470.6,628.6 473.6,631.1 476.6,630.4 479.5,630.9 482.5,633.3 485.4,631.4 488.4,633.3 491.4,630.1 494.3,628.0 497.3,629.4 500.2,634.6 503.2,636.7 506.2,637.0 509.1,638.6 512.1,641.3 515.0,640.3 518.0,637.3 521.0,638.0 523.9,633.3 526.9,632.3 529.8,633.0 532.8,633.7 535.8,635.4 538.7,636.9 541.7,637.7 544.6,639.5 547.6,634.3 550.6,633.4 553.5,632.4 556.5,633.2 559.4,632.6 562.4,634.0 565.4,633.8 568.3,633.1 571.3,632.7 574.2,631.0 577.2,628.2 580.2,627.2 583.1,624.4 586.1,624.6 589.0,627.8 592.0,628.1 595.0,629.6 597.9,626.1 600.9,623.5 603.8,620.4 606.8,619.3 609.8,621.1 612.7,622.2 615.7,619.6 618.6,621.6 621.6,624.2 624.6,623.6 627.5,621.8 630.5,621.8 633.4,619.2 636.4,617.9 639.4,617.3 642.3,618.9 645.3,618.3 648.2,617.7 651.2,616.9 654.2,617.1 657.1,616.5 660.1,615.7 663.0,614.4 666.0,614.8 669.0,614.3 671.9,614.9 674.9,615.5 677.8,616.3 680.8,617.5 683.8,630.2 686.7,629.5 689.7,623.4 692.6,625.0 695.6,623.7 698.6,625.0 701.5,627.3 704.5,627.4 707.4,629.2 710.4,633.6 713.4,632.2 716.3,631.5 719.3,627.6 722.2,624.1 725.2,621.6 728.2,621.5 731.1,620.5 734.1,619.2 737.0,619.0 740.0,617.8 743.0,617.5 745.9,615.9 748.9,616.0 751.8,614.9 754.8,614.9 757.8,614.5 760.7,613.1 763.7,614.8 766.6,612.1 769.6,612.8 772.6,621.4 775.5,626.7 778.5,624.6 781.4,623.0 784.4,625.0 787.4,629.3 790.3,628.3 793.3,628.2 796.2,633.0 799.2,635.3 802.2,634.3 805.1,632.2 808.1,634.1 811.0,635.0 814.0,631.1 817.0,631.9 819.9,629.6 822.9,628.0 825.8,629.2 828.8,626.4 831.8,625.6 834.7,622.3 837.7,621.4 840.6,623.8 843.6,622.6 846.6,621.4 849.5,621.0 852.5,620.4 855.4,619.4 858.4,619.3 861.4,618.7 864.3,619.8 867.3,629.8 870.2,629.8 873.2,630.7 876.2,631.5 879.1,633.6 882.1,629.7 885.0,628.8 888.0,631.1 891.0,630.5 893.9,630.2 896.9,627.6 899.8,623.5 902.8,625.8 905.8,626.1 908.7,624.5 911.7,626.4 914.6,624.6 917.6,623.3 920.6,625.5 923.5,628.1 926.5,630.7 929.4,631.1 932.4,634.4 935.4,632.9 938.3,631.2 941.3,628.5 944.2,626.7 947.2,625.8 950.2,627.9 953.1,627.9 956.1,627.7 959.0,629.7 962.0,631.5 965.0,629.4 967.9,628.6 970.9,624.9 973.8,623.3 976.8,623.4 979.8,626.9 982.7,630.4 985.7,635.0 988.6,636.6 991.6,637.9 994.6,639.1 997.5,640.6 1000.5,638.0 1003.4,636.7 1006.4,636.2 1009.4,635.4 1012.3,634.8 1015.3,632.5 1018.2,636.4 1021.2,632.9 1024.2,632.5 1027.1,631.6 1030.1,632.9 1033.0,633.0 1036.0,631.7 1039.0,634.9 1041.9,639.4 1044.9,640.5 1047.8,641.9 1050.8,645.9 1053.8,646.1 1056.7,643.9 1059.7,640.0 1062.6,640.6 1065.6,640.5 1068.6,640.8 1071.5,641.8 1074.5,641.3 1077.4,640.6 1080.4,639.8 1083.4,637.4 1086.3,637.5 1089.3,639.3 1092.2,639.3 1095.2,638.6 1098.2,637.4 1101.1,634.7 1104.1,633.5 1107.0,633.6 1110.0,634.5 1113.0,638.2 1115.9,639.5 1118.9,640.8 1121.8,641.1 1124.8,638.1 1127.8,638.7 1130.7,635.5 1133.7,634.8 1136.6,633.6 1139.6,634.3 1142.6,634.6 1145.5,637.6 1148.5,636.2 1151.4,636.0 1154.4,635.6 1157.4,635.8 1160.3,636.0 1163.3,636.5 1166.2,637.0 1169.2,636.4 1172.2,639.1 1175.1,639.2 1178.1,639.4 1181.0,639.9 1184.0,638.8 1187.0,635.2 1189.9,635.1 1192.9,633.2 1195.8,627.5 1198.8,625.4 1201.8,624.8 1204.7,623.1 1207.7,622.8 1210.6,623.7 1213.6,627.3 1216.6,626.3 1219.5,625.0 1222.5,623.7 1225.4,622.8 1228.4,620.0 1231.4,622.4 1234.3,623.7 1237.3,624.2 1240.2,624.8 1243.2,626.0 1246.2,626.6 1249.1,624.0 1252.1,622.9 1255.0,622.0 1258.0,623.3 1261.0,624.7 1263.9,624.0 1266.9,627.6 1269.8,626.8 1272.8,627.1 1275.8,628.6 1278.7,628.3 1281.7,626.6 1284.6,625.1 1287.6,622.7 1290.6,634.1 1293.5,634.6 1296.5,635.2 1299.4,636.0 1302.4,635.3 1305.4,632.0 1308.3,630.8 1311.3,631.4 1314.2,630.6 1316.2,638.0" fill="none" stroke="#ffffff" stroke-width="1.5" stroke-linejoin="round"/><g clip-path="url(#p3)"><rect x="165.0" y="683.5" width="1.2" height="1.0" fill="#29b6f6"/><rect x="167.1" y="683.4" width="1.2" height="1.1" fill="#29b6f6"/><rect x="169.3" y="683.4" width="1.2" height="1.1" fill="#29b6f6"/><rect x="171.4" y="683.3" width="1.2" height="1.2" fill="#29b6f6"/><rect x="173.6" y="683.3" width="1.2" height="1.2" fill="#29b6f6"/><rect x="175.7" y="683.2" width="1.2" height="1.3" fill="#29b6f6"/><rect x="177.8" y="683.1" width="1.2" height="1.4" fill="#29b6f6"/><rect x="180.0" y="683.1" width="1.2" height="1.4" fill="#29b6f6"/><rect x="182.1" y="683.0" width="1.2" height="1.5" fill="#29b6f6"/><rect x="184.3" y="683.1" width="1.2" height="1.4" fill="#29b6f6"/><rect x="186.4" y="683.1" width="1.2" height="1.4" fill="#29b6f6"/><rect x="188.5" y="683.2" width="1.2" height="1.3" fill="#29b6f6"/><rect x="190.7" y="683.2" width="1.2" height="1.3" fill="#29b6f6"/><rect x="192.8" y="683.3" width="1.2" height="1.2" fill="#29b6f6"/><rect x="195.0" y="683.4" width="1.2" height="1.1" fill="#29b6f6"/><rect x="197.1" y="683.4" width="1.2" height="1.1" fill="#29b6f6"/><rect x="199.2" y="683.5" width="1.2" height="1.0" fill="#29b6f6"/><rect x="240.0" y="683.5" width="1.2" height="1.0" fill="#29b6f6"/><rect x="242.1" y="683.3" width="1.2" height="1.2" fill="#29b6f6"/><rect x="244.3" y="683.1" width="1.2" height="1.4" fill="#29b6f6"/><rect x="246.4" y="683.1" width="1.2" height="1.4" fill="#29b6f6"/><rect x="248.6" y="683.4" width="1.2" height="1.1" fill="#29b6f6"/><rect x="133.0" y="684.5" width="1.2" height="1.0" fill="#ff9800"/><rect x="135.1" y="684.5" width="1.2" height="1.1" fill="#ff9800"/><rect x="137.3" y="684.5" width="1.2" height="1.3" fill="#ff9800"/><rect x="139.4" y="684.5" width="1.2" height="1.4" fill="#ff9800"/><rect x="141.6" y="684.5" width="1.2" height="1.5" fill="#ff9800"/><rect x="143.7" y="684.5" width="1.2" height="1.4" fill="#ff9800"/><rect x="145.8" y="684.5" width="1.2" height="1.2" fill="#ff9800"/><rect x="148.0" y="684.5" width="1.2" height="1.1" fill="#ff9800"/><rect x="435.0" y="683.5" width="1.2" height="1.0" fill="#29b6f6"/><rect x="437.1" y="683.3" width="1.2" height="1.2" fill="#29b6f6"/><rect x="439.3" y="683.1" width="1.2" height="1.4" fill="#29b6f6"/><rect x="441.4" y="683.1" width="1.2" height="1.4" fill="#29b6f6"/><rect x="443.6" y="683.4" width="1.2" height="1.1" fill="#29b6f6"/><rect x="485.0" y="684.5" width="1.2" height="1.0" fill="#ff9800"/><rect x="487.1" y="684.5" width="1.2" height="1.4" fill="#ff9800"/><rect x="489.3" y="684.5" width="1.2" height="1.1" fill="#ff9800"/><rect x="615.0" y="683.5" width="1.2" height="1.0" fill="#29b6f6"/><rect x="617.1" y="683.5" width="1.2" height="1.0" fill="#29b6f6"/><rect x="619.3" y="683.4" width="1.2" height="1.1" fill="#29b6f6"/><rect x="621.4" y="683.4" width="1.2" height="1.1" fill="#29b6f6"/><rect x="623.6" y="683.4" width="1.2" height="1.1" fill="#29b6f6"/><rect x="625.7" y="683.3" width="1.2" height="1.2" fill="#29b6f6"/><rect x="627.8" y="683.3" width="1.2" height="1.2" fill="#29b6f6"/><rect x="630.0" y="683.3" width="1.2" height="1.2" fill="#29b6f6"/><rect x="632.1" y="683.2" width="1.2" height="1.3" fill="#29b6f6"/><rect x="634.3" y="683.2" width="1.2" height="1.3" fill="#29b6f6"/><rect x="636.4" y="683.2" width="1.2" height="1.3" fill="#29b6f6"/><rect x="638.5" y="683.1" width="1.2" height="1.4" fill="#29b6f6"/><rect x="640.7" y="683.1" width="1.2" height="1.4" fill="#29b6f6"/><rect x="642.8" y="683.1" width="1.2" height="1.4" fill="#29b6f6"/><rect x="645.0" y="683.0" width="1.2" height="1.5" fill="#29b6f6"/><rect x="647.1" y="683.0" width="1.2" height="1.5" fill="#29b6f6"/><rect x="649.2" y="683.0" width="1.2" height="1.5" fill="#29b6f6"/><rect x="651.4" y="683.1" width="1.2" height="1.4" fill="#29b6f6"/><rect x="653.5" y="683.1" width="1.2" height="1.4" fill="#29b6f6"/><rect x="655.7" y="683.1" width="1.2" height="1.4" fill="#29b6f6"/><rect x="657.8" y="683.2" width="1.2" height="1.3" fill="#29b6f6"/><rect x="659.9" y="683.2" width="1.2" height="1.3" fill="#29b6f6"/><rect x="662.1" y="683.2" width="1.2" height="1.3" fill="#29b6f6"/><rect x="664.2" y="683.3" width="1.2" height="1.2" fill="#29b6f6"/><rect x="666.4" y="683.3" width="1.2" height="1.2" fill="#29b6f6"/><rect x="668.5" y="683.3" width="1.2" height="1.2" fill="#29b6f6"/><rect x="670.6" y="683.4" width="1.2" height="1.1" fill="#29b6f6"/><rect x="672.8" y="683.4" width="1.2" height="1.1" fill="#29b6f6"/><rect x="674.9" y="683.4" width="1.2" height="1.1" fill="#29b6f6"/><rect x="677.1" y="683.5" width="1.2" height="1.0" fill="#29b6f6"/><rect x="679.2" y="683.5" width="1.2" height="1.0" fill="#29b6f6"/><rect x="710.0" y="683.5" width="1.2" height="1.0" fill="#29b6f6"/><rect x="712.1" y="683.3" width="1.2" height="1.2" fill="#29b6f6"/><rect x="714.3" y="683.1" width="1.2" height="1.4" fill="#29b6f6"/><rect x="716.4" y="682.8" width="1.2" height="1.7" fill="#29b6f6"/><rect x="718.6" y="682.6" width="1.2" height="1.9" fill="#29b6f6"/><rect x="720.7" y="682.4" width="1.2" height="2.1" fill="#29b6f6"/><rect x="722.8" y="682.2" width="1.2" height="2.3" fill="#29b6f6"/><rect x="725.0" y="681.9" width="1.2" height="2.6" fill="#29b6f6"/><rect x="727.1" y="681.7" width="1.2" height="2.8" fill="#29b6f6"/><rect x="729.3" y="681.5" width="1.2" height="3.0" fill="#29b6f6"/><rect x="731.4" y="681.3" width="1.2" height="3.2" fill="#29b6f6"/><rect x="733.5" y="681.1" width="1.2" height="3.4" fill="#29b6f6"/><rect x="735.7" y="680.8" width="1.2" height="3.7" fill="#29b6f6"/><rect x="737.8" y="680.6" width="1.2" height="3.9" fill="#29b6f6"/><rect x="740.0" y="680.4" width="1.2" height="4.1" fill="#29b6f6"/><rect x="742.1" y="680.2" width="1.2" height="4.3" fill="#29b6f6"/><rect x="744.2" y="679.9" width="1.2" height="4.6" fill="#29b6f6"/><rect x="746.4" y="679.7" width="1.2" height="4.8" fill="#29b6f6"/><rect x="748.5" y="679.5" width="1.2" height="5.0" fill="#29b6f6"/><rect x="750.7" y="679.7" width="1.2" height="4.8" fill="#29b6f6"/><rect x="752.8" y="679.9" width="1.2" height="4.6" fill="#29b6f6"/><rect x="754.9" y="680.2" width="1.2" height="4.3" fill="#29b6f6"/><rect x="757.1" y="680.4" width="1.2" height="4.1" fill="#29b6f6"/><rect x="759.2" y="680.6" width="1.2" height="3.9" fill="#29b6f6"/><rect x="761.4" y="680.8" width="1.2" height="3.7" fill="#29b6f6"/><rect x="763.5" y="681.1" width="1.2" height="3.4" fill="#29b6f6"/><rect x="765.6" y="681.3" width="1.2" height="3.2" fill="#29b6f6"/><rect x="767.8" y="681.5" width="1.2" height="3.0" fill="#29b6f6"/><rect x="769.9" y="681.7" width="1.2" height="2.8" fill="#29b6f6"/><rect x="772.1" y="681.9" width="1.2" height="2.6" fill="#29b6f6"/><rect x="774.2" y="682.2" width="1.2" height="2.3" fill="#29b6f6"/><rect x="776.3" y="682.4" width="1.2" height="2.1" fill="#29b6f6"/><rect x="778.5" y="682.6" width="1.2" height="1.9" fill="#29b6f6"/><rect x="780.6" y="682.8" width="1.2" height="1.7" fill="#29b6f6"/><rect x="782.8" y="683.1" width="1.2" height="1.4" fill="#29b6f6"/><rect x="784.9" y="683.3" width="1.2" height="1.2" fill="#29b6f6"/><rect x="795.0" y="684.5" width="1.2" height="1.0" fill="#ff9800"/><rect x="797.1" y="684.5" width="1.2" height="1.2" fill="#ff9800"/><rect x="799.3" y="684.5" width="1.2" height="1.5" fill="#ff9800"/><rect x="801.4" y="684.5" width="1.2" height="1.7" fill="#ff9800"/><rect x="803.6" y="684.5" width="1.2" height="2.0" fill="#ff9800"/><rect x="805.7" y="684.5" width="1.2" height="2.2" fill="#ff9800"/><rect x="807.8" y="684.5" width="1.2" height="2.5" fill="#ff9800"/><rect x="810.0" y="684.5" width="1.2" height="2.7" fill="#ff9800"/><rect x="812.1" y="684.5" width="1.2" height="3.0" fill="#ff9800"/><rect x="814.3" y="684.5" width="1.2" height="2.8" fill="#ff9800"/><rect x="816.4" y="684.5" width="1.2" height="2.6" fill="#ff9800"/><rect x="818.5" y="684.5" width="1.2" height="2.3" fill="#ff9800"/><rect x="820.7" y="684.5" width="1.2" height="2.1" fill="#ff9800"/><rect x="822.8" y="684.5" width="1.2" height="1.8" fill="#ff9800"/><rect x="825.0" y="684.5" width="1.2" height="1.6" fill="#ff9800"/><rect x="827.1" y="684.5" width="1.2" height="1.3" fill="#ff9800"/><rect x="829.2" y="684.5" width="1.2" height="1.1" fill="#ff9800"/><rect x="833.0" y="683.5" width="1.2" height="1.0" fill="#29b6f6"/><rect x="835.1" y="683.2" width="1.2" height="1.3" fill="#29b6f6"/><rect x="837.3" y="682.8" width="1.2" height="1.7" fill="#29b6f6"/><rect x="839.4" y="682.5" width="1.2" height="2.0" fill="#29b6f6"/><rect x="841.6" y="682.1" width="1.2" height="2.4" fill="#29b6f6"/><rect x="843.7" y="681.8" width="1.2" height="2.7" fill="#29b6f6"/><rect x="845.8" y="681.4" width="1.2" height="3.1" fill="#29b6f6"/><rect x="848.0" y="681.1" width="1.2" height="3.4" fill="#29b6f6"/><rect x="850.1" y="680.7" width="1.2" height="3.8" fill="#29b6f6"/><rect x="852.3" y="680.6" width="1.2" height="3.9" fill="#29b6f6"/><rect x="854.4" y="681.0" width="1.2" height="3.5" fill="#29b6f6"/><rect x="856.5" y="681.3" width="1.2" height="3.2" fill="#29b6f6"/><rect x="858.7" y="681.7" width="1.2" height="2.8" fill="#29b6f6"/><rect x="860.8" y="682.0" width="1.2" height="2.5" fill="#29b6f6"/><rect x="863.0" y="682.4" width="1.2" height="2.1" fill="#29b6f6"/><rect x="865.1" y="682.7" width="1.2" height="1.8" fill="#29b6f6"/><rect x="867.2" y="683.1" width="1.2" height="1.4" fill="#29b6f6"/><rect x="869.4" y="683.4" width="1.2" height="1.1" fill="#29b6f6"/><rect x="872.0" y="684.5" width="1.2" height="1.0" fill="#ff9800"/><rect x="874.1" y="684.5" width="1.2" height="1.3" fill="#ff9800"/><rect x="876.3" y="684.5" width="1.2" height="1.6" fill="#ff9800"/><rect x="878.4" y="684.5" width="1.2" height="1.9" fill="#ff9800"/><rect x="880.6" y="684.5" width="1.2" height="2.2" fill="#ff9800"/><rect x="882.7" y="684.5" width="1.2" height="2.5" fill="#ff9800"/><rect x="884.8" y="684.5" width="1.2" height="2.8" fill="#ff9800"/><rect x="887.0" y="684.5" width="1.2" height="2.9" fill="#ff9800"/><rect x="889.1" y="684.5" width="1.2" height="2.6" fill="#ff9800"/><rect x="891.3" y="684.5" width="1.2" height="2.2" fill="#ff9800"/><rect x="893.4" y="684.5" width="1.2" height="1.9" fill="#ff9800"/><rect x="895.5" y="684.5" width="1.2" height="1.6" fill="#ff9800"/><rect x="897.7" y="684.5" width="1.2" height="1.3" fill="#ff9800"/><rect x="899.8" y="684.5" width="1.2" height="1.0" fill="#ff9800"/><rect x="903.0" y="683.5" width="1.2" height="1.0" fill="#29b6f6"/><rect x="905.1" y="683.4" width="1.2" height="1.1" fill="#29b6f6"/><rect x="907.3" y="683.2" width="1.2" height="1.3" fill="#29b6f6"/><rect x="909.4" y="683.1" width="1.2" height="1.4" fill="#29b6f6"/><rect x="911.6" y="683.0" width="1.2" height="1.5" fill="#29b6f6"/><rect x="913.7" y="683.1" width="1.2" height="1.4" fill="#29b6f6"/><rect x="915.8" y="683.3" width="1.2" height="1.2" fill="#29b6f6"/><rect x="918.0" y="683.4" width="1.2" height="1.1" fill="#29b6f6"/><rect x="925.0" y="684.5" width="1.2" height="1.0" fill="#ff9800"/><rect x="927.1" y="684.5" width="1.2" height="1.3" fill="#ff9800"/><rect x="929.3" y="684.5" width="1.2" height="1.7" fill="#ff9800"/><rect x="931.4" y="684.5" width="1.2" height="2.0" fill="#ff9800"/><rect x="933.6" y="684.5" width="1.2" height="2.4" fill="#ff9800"/><rect x="935.7" y="684.5" width="1.2" height="2.7" fill="#ff9800"/><rect x="937.8" y="684.5" width="1.2" height="2.9" fill="#ff9800"/><rect x="940.0" y="684.5" width="1.2" height="2.6" fill="#ff9800"/><rect x="942.1" y="684.5" width="1.2" height="2.3" fill="#ff9800"/><rect x="944.3" y="684.5" width="1.2" height="1.9" fill="#ff9800"/><rect x="946.4" y="684.5" width="1.2" height="1.6" fill="#ff9800"/><rect x="948.5" y="684.5" width="1.2" height="1.2" fill="#ff9800"/><rect x="957.0" y="684.5" width="1.2" height="1.0" fill="#ff9800"/><rect x="959.1" y="684.5" width="1.2" height="1.2" fill="#ff9800"/><rect x="961.3" y="684.5" width="1.2" height="1.5" fill="#ff9800"/><rect x="963.4" y="684.5" width="1.2" height="1.7" fill="#ff9800"/><rect x="965.6" y="684.5" width="1.2" height="2.0" fill="#ff9800"/><rect x="967.7" y="684.5" width="1.2" height="1.8" fill="#ff9800"/><rect x="969.8" y="684.5" width="1.2" height="1.6" fill="#ff9800"/><rect x="972.0" y="684.5" width="1.2" height="1.3" fill="#ff9800"/><rect x="974.1" y="684.5" width="1.2" height="1.1" fill="#ff9800"/><rect x="978.0" y="683.5" width="1.2" height="1.0" fill="#29b6f6"/><rect x="980.1" y="683.3" width="1.2" height="1.2" fill="#29b6f6"/><rect x="982.3" y="683.1" width="1.2" height="1.4" fill="#29b6f6"/><rect x="984.4" y="683.0" width="1.2" height="1.5" fill="#29b6f6"/><rect x="986.6" y="683.2" width="1.2" height="1.3" fill="#29b6f6"/><rect x="988.7" y="683.4" width="1.2" height="1.1" fill="#29b6f6"/><rect x="990.0" y="684.5" width="1.2" height="1.0" fill="#ff9800"/><rect x="992.1" y="684.5" width="1.2" height="1.9" fill="#ff9800"/><rect x="994.3" y="684.5" width="1.2" height="2.7" fill="#ff9800"/><rect x="996.4" y="684.5" width="1.2" height="2.4" fill="#ff9800"/><rect x="998.6" y="684.5" width="1.2" height="1.6" fill="#ff9800"/><rect x="1040.0" y="684.5" width="1.2" height="1.0" fill="#ff9800"/><rect x="1042.1" y="684.5" width="1.2" height="1.4" fill="#ff9800"/><rect x="1044.3" y="684.5" width="1.2" height="1.8" fill="#ff9800"/><rect x="1046.4" y="684.5" width="1.2" height="2.2" fill="#ff9800"/><rect x="1048.6" y="684.5" width="1.2" height="2.6" fill="#ff9800"/><rect x="1050.7" y="684.5" width="1.2" height="3.0" fill="#ff9800"/><rect x="1052.8" y="684.5" width="1.2" height="3.4" fill="#ff9800"/><rect x="1055.0" y="684.5" width="1.2" height="3.9" fill="#ff9800"/><rect x="1057.1" y="684.5" width="1.2" height="4.3" fill="#ff9800"/><rect x="1059.3" y="684.5" width="1.2" height="4.7" fill="#ff9800"/><rect x="1061.4" y="684.5" width="1.2" height="4.9" fill="#ff9800"/><rect x="1063.5" y="684.5" width="1.2" height="4.5" fill="#ff9800"/><rect x="1065.7" y="684.5" width="1.2" height="4.1" fill="#ff9800"/><rect x="1067.8" y="684.5" width="1.2" height="3.7" fill="#ff9800"/><rect x="1070.0" y="684.5" width="1.2" height="3.3" fill="#ff9800"/><rect x="1072.1" y="684.5" width="1.2" height="2.9" fill="#ff9800"/><rect x="1074.2" y="684.5" width="1.2" height="2.5" fill="#ff9800"/><rect x="1076.4" y="684.5" width="1.2" height="2.1" fill="#ff9800"/><rect x="1078.5" y="684.5" width="1.2" height="1.7" fill="#ff9800"/><rect x="1080.7" y="684.5" width="1.2" height="1.3" fill="#ff9800"/><rect x="1095.0" y="683.5" width="1.2" height="1.0" fill="#29b6f6"/><rect x="1097.1" y="683.4" width="1.2" height="1.1" fill="#29b6f6"/><rect x="1099.3" y="683.4" width="1.2" height="1.1" fill="#29b6f6"/><rect x="1101.4" y="683.3" width="1.2" height="1.2" fill="#29b6f6"/><rect x="1103.6" y="683.3" width="1.2" height="1.2" fill="#29b6f6"/><rect x="1105.7" y="683.2" width="1.2" height="1.3" fill="#29b6f6"/><rect x="1107.8" y="683.2" width="1.2" height="1.3" fill="#29b6f6"/><rect x="1110.0" y="683.1" width="1.2" height="1.4" fill="#29b6f6"/><rect x="1112.1" y="683.1" width="1.2" height="1.4" fill="#29b6f6"/><rect x="1114.3" y="683.0" width="1.2" height="1.5" fill="#29b6f6"/><rect x="1116.4" y="683.0" width="1.2" height="1.5" fill="#29b6f6"/><rect x="1118.5" y="682.9" width="1.2" height="1.6" fill="#29b6f6"/><rect x="1120.7" y="682.9" width="1.2" height="1.6" fill="#29b6f6"/><rect x="1122.8" y="682.8" width="1.2" height="1.7" fill="#29b6f6"/><rect x="1125.0" y="682.8" width="1.2" height="1.7" fill="#29b6f6"/><rect x="1127.1" y="682.7" width="1.2" height="1.8" fill="#29b6f6"/><rect x="1129.2" y="682.7" width="1.2" height="1.8" fill="#29b6f6"/><rect x="1131.4" y="682.6" width="1.2" height="1.9" fill="#29b6f6"/><rect x="1133.5" y="682.6" width="1.2" height="1.9" fill="#29b6f6"/><rect x="1135.7" y="682.5" width="1.2" height="2.0" fill="#29b6f6"/><rect x="1137.8" y="682.5" width="1.2" height="2.0" fill="#29b6f6"/><rect x="1139.9" y="682.6" width="1.2" height="1.9" fill="#29b6f6"/><rect x="1142.1" y="682.6" width="1.2" height="1.9" fill="#29b6f6"/><rect x="1144.2" y="682.7" width="1.2" height="1.8" fill="#29b6f6"/><rect x="1146.4" y="682.7" width="1.2" height="1.8" fill="#29b6f6"/><rect x="1148.5" y="682.8" width="1.2" height="1.7" fill="#29b6f6"/><rect x="1150.6" y="682.8" width="1.2" height="1.7" fill="#29b6f6"/><rect x="1152.8" y="682.9" width="1.2" height="1.6" fill="#29b6f6"/><rect x="1154.9" y="682.9" width="1.2" height="1.6" fill="#29b6f6"/><rect x="1157.1" y="683.0" width="1.2" height="1.5" fill="#29b6f6"/><rect x="1159.2" y="683.0" width="1.2" height="1.5" fill="#29b6f6"/><rect x="1161.3" y="683.1" width="1.2" height="1.4" fill="#29b6f6"/><rect x="1163.5" y="683.1" width="1.2" height="1.4" fill="#29b6f6"/><rect x="1165.6" y="683.2" width="1.2" height="1.3" fill="#29b6f6"/><rect x="1167.8" y="683.2" width="1.2" height="1.3" fill="#29b6f6"/><rect x="1169.9" y="683.3" width="1.2" height="1.2" fill="#29b6f6"/><rect x="1172.0" y="683.3" width="1.2" height="1.2" fill="#29b6f6"/><rect x="1174.2" y="683.4" width="1.2" height="1.1" fill="#29b6f6"/><rect x="1176.3" y="683.4" width="1.2" height="1.1" fill="#29b6f6"/><rect x="1178.5" y="683.5" width="1.2" height="1.0" fill="#29b6f6"/><rect x="1190.0" y="683.5" width="1.2" height="1.0" fill="#29b6f6"/><rect x="1192.1" y="683.3" width="1.2" height="1.2" fill="#29b6f6"/><rect x="1194.3" y="683.0" width="1.2" height="1.5" fill="#29b6f6"/><rect x="1196.4" y="682.8" width="1.2" height="1.7" fill="#29b6f6"/><rect x="1198.6" y="682.6" width="1.2" height="1.9" fill="#29b6f6"/><rect x="1200.7" y="682.4" width="1.2" height="2.1" fill="#29b6f6"/><rect x="1202.8" y="682.1" width="1.2" height="2.4" fill="#29b6f6"/><rect x="1205.0" y="681.9" width="1.2" height="2.6" fill="#29b6f6"/><rect x="1207.1" y="681.7" width="1.2" height="2.8" fill="#29b6f6"/><rect x="1209.3" y="681.4" width="1.2" height="3.1" fill="#29b6f6"/><rect x="1211.4" y="681.2" width="1.2" height="3.3" fill="#29b6f6"/><rect x="1213.5" y="681.0" width="1.2" height="3.5" fill="#29b6f6"/><rect x="1215.7" y="680.8" width="1.2" height="3.7" fill="#29b6f6"/><rect x="1217.8" y="680.5" width="1.2" height="4.0" fill="#29b6f6"/><rect x="1220.0" y="680.3" width="1.2" height="4.2" fill="#29b6f6"/><rect x="1222.1" y="680.1" width="1.2" height="4.4" fill="#29b6f6"/><rect x="1224.2" y="679.8" width="1.2" height="4.7" fill="#29b6f6"/><rect x="1226.4" y="679.6" width="1.2" height="4.9" fill="#29b6f6"/><rect x="1228.5" y="679.6" width="1.2" height="4.9" fill="#29b6f6"/><rect x="1230.7" y="679.8" width="1.2" height="4.7" fill="#29b6f6"/><rect x="1232.8" y="680.1" width="1.2" height="4.4" fill="#29b6f6"/><rect x="1234.9" y="680.3" width="1.2" height="4.2" fill="#29b6f6"/><rect x="1237.1" y="680.5" width="1.2" height="4.0" fill="#29b6f6"/><rect x="1239.2" y="680.8" width="1.2" height="3.7" fill="#29b6f6"/><rect x="1241.4" y="681.0" width="1.2" height="3.5" fill="#29b6f6"/><rect x="1243.5" y="681.2" width="1.2" height="3.3" fill="#29b6f6"/><rect x="1245.6" y="681.4" width="1.2" height="3.1" fill="#29b6f6"/><rect x="1247.8" y="681.7" width="1.2" height="2.8" fill="#29b6f6"/><rect x="1249.9" y="681.9" width="1.2" height="2.6" fill="#29b6f6"/><rect x="1252.1" y="682.1" width="1.2" height="2.4" fill="#29b6f6"/><rect x="1254.2" y="682.3" width="1.2" height="2.2" fill="#29b6f6"/><rect x="1256.3" y="682.6" width="1.2" height="1.9" fill="#29b6f6"/><rect x="1258.5" y="682.8" width="1.2" height="1.7" fill="#29b6f6"/><rect x="1260.6" y="683.0" width="1.2" height="1.5" fill="#29b6f6"/><rect x="1262.8" y="683.3" width="1.2" height="1.2" fill="#29b6f6"/><rect x="1264.9" y="683.5" width="1.2" height="1.0" fill="#29b6f6"/><rect x="1275.0" y="684.5" width="1.2" height="1.0" fill="#ff9800"/><rect x="1277.1" y="684.5" width="1.2" height="1.2" fill="#ff9800"/><rect x="1279.3" y="684.5" width="1.2" height="1.4" fill="#ff9800"/><rect x="1281.4" y="684.5" width="1.2" height="1.6" fill="#ff9800"/><rect x="1283.6" y="684.5" width="1.2" height="1.8" fill="#ff9800"/><rect x="1285.7" y="684.5" width="1.2" height="2.0" fill="#ff9800"/><rect x="1287.8" y="684.5" width="1.2" height="2.3" fill="#ff9800"/><rect x="1290.0" y="684.5" width="1.2" height="2.5" fill="#ff9800"/><rect x="1292.1" y="684.5" width="1.2" height="2.7" fill="#ff9800"/><rect x="1294.3" y="684.5" width="1.2" height="2.9" fill="#ff9800"/><rect x="1296.4" y="684.5" width="1.2" height="2.9" fill="#ff9800"/><rect x="1298.5" y="684.5" width="1.2" height="2.7" fill="#ff9800"/><rect x="1300.7" y="684.5" width="1.2" height="2.5" fill="#ff9800"/><rect x="1302.8" y="684.5" width="1.2" height="2.3" fill="#ff9800"/><rect x="1305.0" y="684.5" width="1.2" height="2.1" fill="#ff9800"/><rect x="1307.1" y="684.5" width="1.2" height="1.9" fill="#ff9800"/><rect x="1309.2" y="684.5" width="1.2" height="1.7" fill="#ff9800"/><rect x="1311.4" y="684.5" width="1.2" height="1.5" fill="#ff9800"/><rect x="1313.5" y="684.5" width="1.2" height="1.2" fill="#ff9800"/><rect x="1315.7" y="684.5" width="1.2" height="1.0" fill="#ff9800"/><polyline points="0.0,685.1 37.5,683.6 86.2,683.6 105.0,685.1 131.2,687.5 150.0,688.0 168.7,686.5 206.2,685.5 232.5,684.4 262.5,683.2 300.0,684.4 356.2,685.1 412.5,684.4 450.0,683.2 487.5,684.4 525.0,685.5 600.0,685.0 625.0,682.5 675.0,679.5 705.0,681.3 725.0,682.0 750.0,677.5 770.0,668.8 790.0,670.0 800.0,675.0 812.5,678.8 825.0,678.0 840.0,671.3 862.5,666.3 880.0,672.5 895.0,674.5 905.0,672.0 922.5,672.0 935.0,677.5 950.0,676.3 965.0,678.8 980.0,676.3 990.0,681.3 1000.0,682.8 1021.1,685.3 1038.6,685.3 1056.2,695.1 1070.2,698.6 1094.8,699.3 1105.4,695.1 1140.5,693.4 1175.6,691.6 1196.7,689.9 1217.8,681.1 1238.8,675.8 1263.4,674.8 1288.0,676.9 1302.1,681.1 1316.1,682.8" fill="none" stroke="#ffffff" stroke-width="2" stroke-linejoin="round"/><polyline points="0.0,685.1 37.5,683.6 86.2,683.6 131.2,685.5 168.7,686.0 232.5,684.4 300.0,684.0 412.5,684.4 525.0,685.1 600.0,685.0 675.0,680.0 725.0,681.3 775.0,671.3 790.0,670.5 825.0,678.0 865.0,668.8 895.0,672.5 925.0,672.0 950.0,676.3 980.0,677.5 1000.0,682.8 1035.1,685.3 1052.7,688.1 1077.3,698.6 1105.4,696.9 1140.5,693.4 1189.7,689.9 1210.7,684.6 1238.8,676.9 1274.0,675.8 1298.6,678.3 1316.1,681.1" fill="none" stroke="#ff0000" stroke-width="2" stroke-linejoin="round"/></g><rect x="1478" y="67" width="84" height="485" fill="#141414"/><rect x="1476.5" y="67" width="2.5" height="485" fill="#2e2e2e"/><rect x="1478" y="556" width="84" height="43.5" fill="#141414"/><rect x="1476.5" y="556" width="2.5" height="43.5" fill="#2e2e2e"/><rect x="1478" y="609" width="84" height="44" fill="#141414"/><rect x="1476.5" y="609" width="2.5" height="44" fill="#2e2e2e"/><rect x="1478" y="663" width="84" height="37" fill="#141414"/><rect x="1476.5" y="663" width="2.5" height="37" fill="#2e2e2e"/><text x="45.35" y="62.4" fill="#fff" font-size="15.6" font-family="Liberation Sans">Feb</text><text x="105.1" y="62.4" fill="#fff" font-size="15.6" font-family="Liberation Sans">Mär</text><text x="172.1" y="62.4" fill="#fff" font-size="15.6" font-family="Liberation Sans">Apr</text><text x="234.6" y="62.4" fill="#fff" font-size="15.6" font-family="Liberation Sans">Mai</text><text x="298.1" y="62.4" fill="#fff" font-size="15.6" font-family="Liberation Sans">Jun</text><text x="364.6" y="62.4" fill="#fff" font-size="15.6" font-family="Liberation Sans">Jul</text><text x="434.1" y="62.4" fill="#fff" font-size="15.6" font-family="Liberation Sans">Aug</text><text x="497.1" y="62.4" fill="#fff" font-size="15.6" font-family="Liberation Sans">Sep</text><text x="564.1" y="62.4" fill="#fff" font-size="15.6" font-family="Liberation Sans">Okt</text><text x="629.85" y="62.4" fill="#fff" font-size="15.6" font-family="Liberation Sans">Nov</text><text x="694.1" y="62.4" fill="#fff" font-size="15.6" font-family="Liberation Sans">Dez</text><text x="761.1" y="62.4" fill="#fff" font-size="15.6" font-family="Liberation Sans">2021</text><text x="821.1" y="62.4" fill="#fff" font-size="15.6" font-family="Liberation Sans">Feb</text><text x="880.85" y="62.4" fill="#fff" font-size="15.6" font-family="Liberation Sans">Mär</text><text x="950.35" y="62.4" fill="#fff" font-size="15.6" font-family="Liberation Sans">Apr</text><text x="1017.1" y="62.4" fill="#fff" font-size="15.6" font-family="Liberation Sans">Mai</text><text x="1080.1" y="62.4" fill="#fff" font-size="15.6" font-family="Liberation Sans">Jun</text><text x="1145.8999999999999" y="62.4" fill="#fff" font-size="15.6" font-family="Liberation Sans">Jul</text><text x="1213.3" y="62.4" fill="#fff" font-size="15.6" font-family="Liberation Sans">Aug</text><text x="1279.3" y="62.4" fill="#fff" font-size="15.6" font-family="Liberation Sans">Sep</text><text x="1352.3" y="62.4" fill="#fff" font-size="15.6" font-family="Liberation Sans">Okt</text><text x="1445.6" y="62.4" fill="#fff" font-size="15.6" font-family="Liberation Sans">Nov</text><rect x="1479" y="87.7" width="5" height="1" fill="#333"/><text x="1487" y="94.2" fill="#fff" font-size="15.5" font-family="Liberation Sans" font-weight="bold">70.000,000</text><rect x="1479" y="151.0" width="5" height="1" fill="#333"/><text x="1487" y="157.5" fill="#fff" font-size="15.5" font-family="Liberation Sans" font-weight="bold">60.000,000</text><rect x="1479" y="277.7" width="5" height="1" fill="#333"/><text x="1487" y="284.2" fill="#fff" font-size="15.5" font-family="Liberation Sans" font-weight="bold">40.000,000</text><rect x="1479" y="467.7" width="5" height="1" fill="#333"/><text x="1487" y="474.2" fill="#fff" font-size="15.5" font-family="Liberation Sans" font-weight="bold">10.000,000</text><text x="1487" y="536.5" fill="#fff" font-size="15.5" font-family="Liberation Sans" font-weight="bold">-0,0000</text><polygon points="1477.2,255.3 1488.7,240.5 1562,240.5 1562,270.5 1488.7,270.5" fill="#ff00ff"/><polygon points="1477.2,228.8 1488.7,217.3 1562,217.3 1562,240.3 1488.7,240.3" fill="#ff00ff"/><polygon points="1477.2,205.8 1488.7,193.8 1562,193.8 1562,217.3 1488.7,217.3" fill="#ff00ff"/><text x="1491.3" y="212.9" fill="#1a001a" font-size="15.6" font-family="Liberation Sans">51.233,19</text><text x="1491.3" y="235.8" fill="#1a001a" font-size="15.6" font-family="Liberation Sans">47.561,98</text><rect x="1478" y="243.8" width="84" height="23" fill="#b00000"/><text x="1484.8" y="262.8" fill="#fff" font-size="17.4" font-family="Liberation Sans" font-weight="bold">43.573,30</text><rect x="1479.9" y="335.2" width="90" height="18.5" rx="1.5" fill="#8000ff"/><text x="1481.2" y="351.5" fill="#000" font-size="15.3" font-family="Liberation Sans">29.261,5176</text><rect x="1479.9" y="395.3" width="90" height="18.2" rx="1.5" fill="#ff00ff"/><text x="1481.2" y="411.2" fill="#000" font-size="15.3" font-family="Liberation Sans">19.766,9377</text><rect x="1479.9" y="499.3" width="90" height="17.4" rx="1.5" fill="#00bfff"/><text x="1481.2" y="515" fill="#000" font-size="15.3" font-family="Liberation Sans">3.400,9434</text><text x="1492.5" y="573" fill="#fff" font-size="15.2" font-family="Liberation Sans">80,00 %</text><polygon points="1477.2,585.5 1489.2,574 1554.2,574 1554.2,597.8 1489.2,597.8" fill="#ffffff"/><polygon points="1477.2,581.5 1489.2,570 1554.2,570 1554.2,593.5 1489.2,593.5" fill="#ff0000"/><text x="1491.5" y="588.8" fill="#fff" font-size="15.2" font-family="Liberation Sans">39,95 %</text><text x="1492.5" y="632" fill="#fff" font-size="15.2" font-family="Liberation Sans">70,00 %</text><polygon points="1477.2,637.9 1489.2,626 1554.2,626 1554.2,649.8 1489.2,649.8" fill="#ffffff"/><text x="1491.5" y="644.5" fill="#000" font-size="15.2" font-family="Liberation Sans">37,97 %</text><polygon points="1477.2,681 1489.2,668.4 1562,668.4 1562,700 1489.2,700" fill="#ff0000"/><polygon points="1477.2,687.5 1489.2,675 1562,675 1562,700 1489.2,700" fill="#00bfff"/><text x="1491.2" y="693.6" fill="#000" font-size="15.2" font-family="Liberation Sans">-650,3660</text><rect x="0" y="700" width="1600" height="431" fill="#fff"/><rect x="1562" y="0" width="38" height="700" fill="#fff"/></svg>
</body></html>
